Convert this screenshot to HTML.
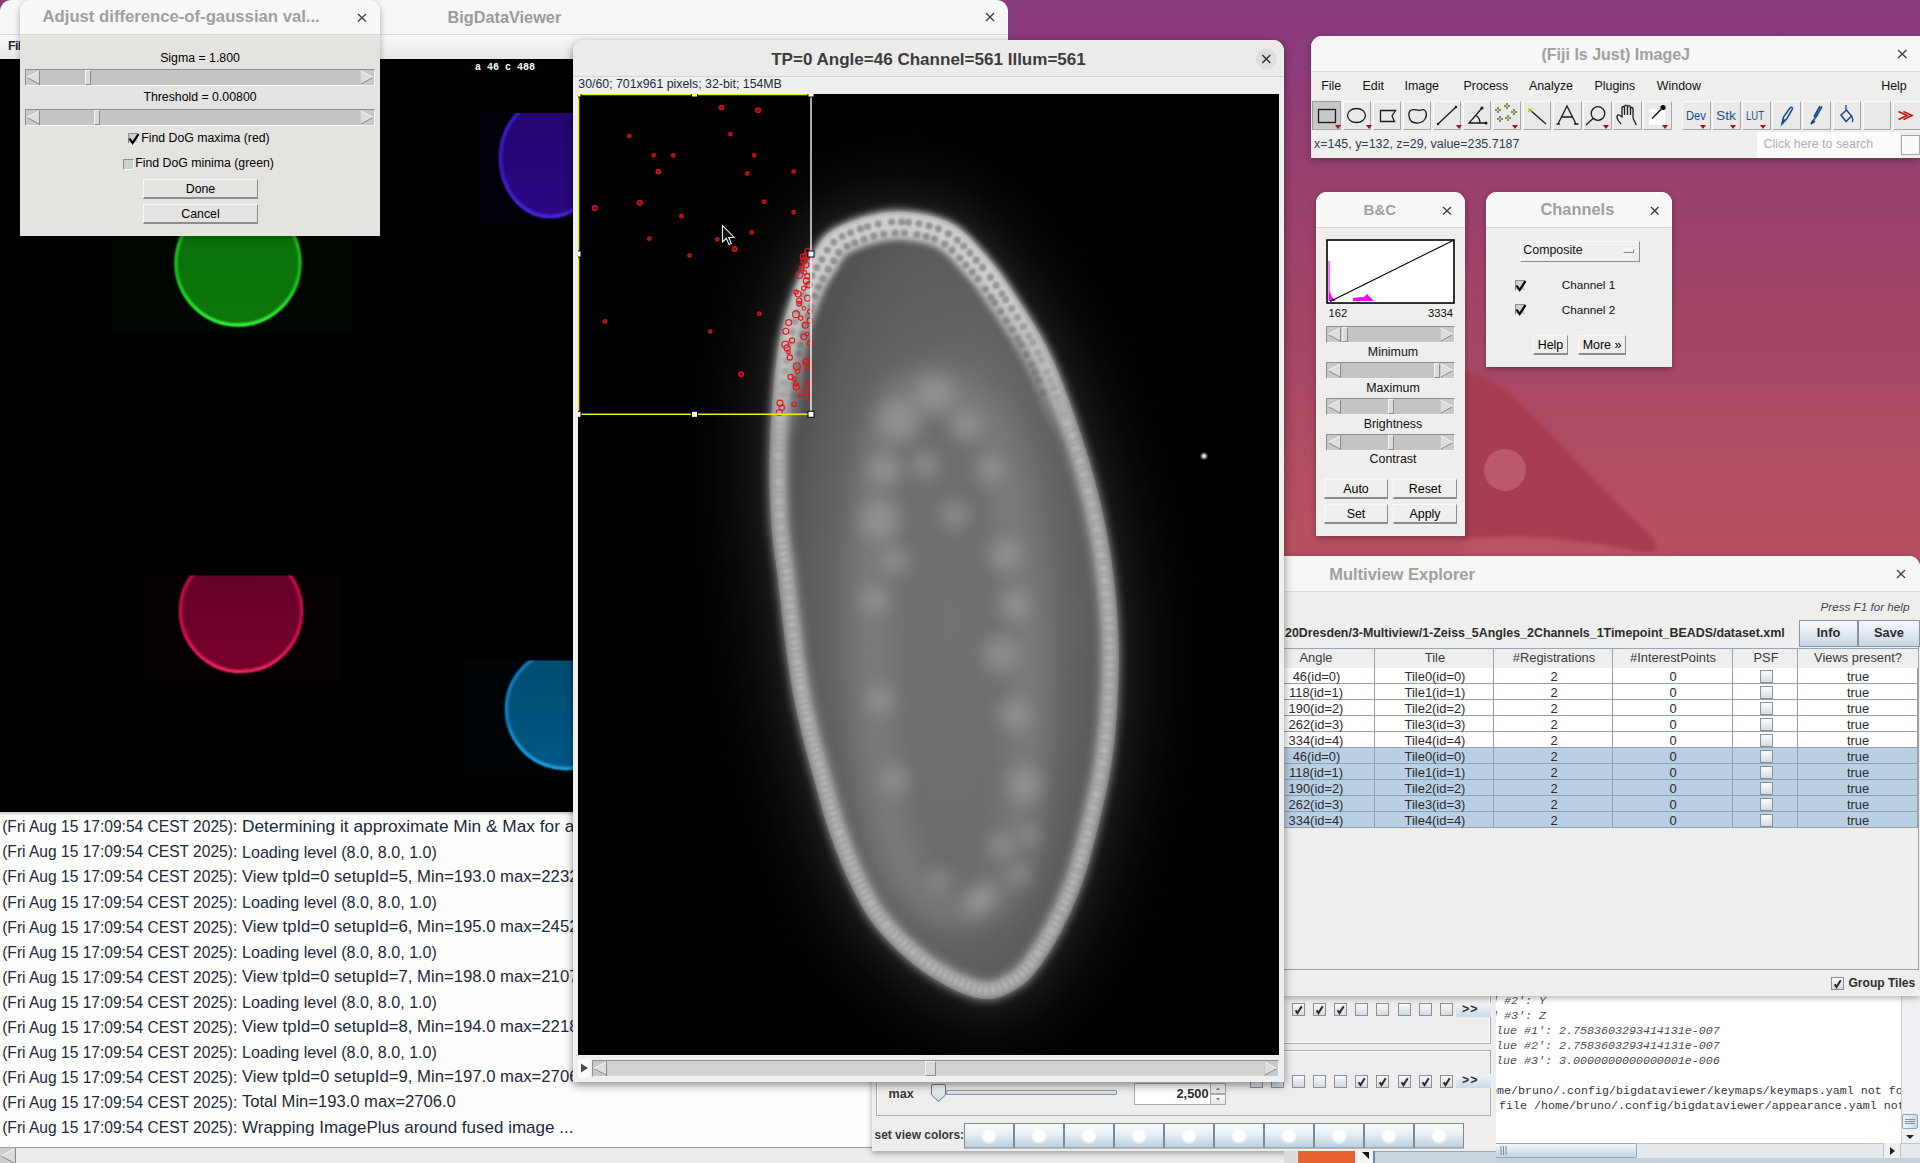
<!DOCTYPE html>
<html><head><meta charset="utf-8">
<style>
*{box-sizing:border-box;margin:0;padding:0}
html,body{width:1920px;height:1163px;overflow:hidden}
body{position:relative;font-family:"Liberation Sans",sans-serif;background:#86397f}
.abs{position:absolute}
.win{position:absolute;overflow:hidden}
.t{position:absolute;white-space:nowrap}
svg{display:block}
</style></head><body>
<svg class="abs" style="left:0;top:0" width="1920" height="1163">
<defs><linearGradient id="desk" x1="0" y1="0" x2="0" y2="1163" gradientUnits="userSpaceOnUse">
<stop offset="0" stop-color="#8a3a80"/><stop offset="0.035" stop-color="#8c3a7e"/><stop offset="0.15" stop-color="#98406f"/><stop offset="0.258" stop-color="#a24468"/><stop offset="0.46" stop-color="#b75060"/><stop offset="1" stop-color="#b85060"/></linearGradient>
<filter color-interpolation-filters="sRGB" id="blur2"><feGaussianBlur stdDeviation="2"/></filter></defs>
<rect width="1920" height="1163" fill="url(#desk)"/>
<path d="M1462 372 C1480 372 1502 385 1527 410 C1567 452 1612 500 1645 530 C1662 546 1658 556 1640 552 C1600 544 1540 532 1462 540 Z" fill="#a63d52" filter="url(#blur2)"/><path d="M1462 540 C1540 532 1600 544 1640 552 L1700 560 L1462 560Z" fill="#bc5564" opacity="0.6" filter="url(#blur2)"/>
<circle cx="1505" cy="470" r="21" fill="#bd5c6c" opacity="0.9"/>
</svg>
<div class="win" style="left:0;top:0;width:1008px;height:812px;border-radius:11px 11px 0 0;background:#000">
<div class="abs" style="left:0px;top:0px;width:1008px;height:35px;background:#f6f6f4;border-bottom:1px solid #dadad8"></div>
<div class="abs" style="left:0px;top:35px;width:1008px;height:24px;background:linear-gradient(#f9f8f6,#e8e7e5)"></div>
</div>
<div class="t" style="left:447.50px;top:9.10px;font-size:16.3px;line-height:16.3px;color:#9b9b9b;font-weight:bold;font-style:normal;font-family:'Liberation Sans',sans-serif;">BigDataViewer</div>
<svg class="abs" style="left:984px;top:11px" width="12" height="12"><path d="M2 2L10 10M10 2L2 10" stroke="#3c3c3c" stroke-width="1.3" fill="none"/></svg>
<div class="t" style="left:8.00px;top:40.00px;font-size:12.4px;line-height:12.4px;color:#1d2a48;font-weight:bold;font-style:normal;font-family:'Liberation Sans',sans-serif;letter-spacing:-0.6px">File</div>
<div class="t" style="left:475.00px;top:62.73px;font-size:10px;line-height:10px;color:#ffffff;font-weight:bold;font-style:normal;font-family:'Liberation Mono',monospace;letter-spacing:0px">a 46 c 488</div>
<svg class="abs" style="left:0;top:59px" width="573" height="753" viewBox="0 59 573 753"><defs><filter color-interpolation-filters="sRGB" id="bb1" x="-20%" y="-20%" width="140%" height="140%"><feGaussianBlur stdDeviation="0.8"/></filter><filter color-interpolation-filters="sRGB" id="bb6" x="-50%" y="-50%" width="200%" height="200%"><feGaussianBlur stdDeviation="8"/></filter></defs><clipPath id="cl238_263"><rect x="112" y="236" width="240" height="98"/></clipPath><linearGradient id="rgcl238_263" x1="0" y1="0" x2="0" y2="1"><stop offset="0" stop-color="#1cc01c"/><stop offset="0.6" stop-color="#1cc01c"/><stop offset="1" stop-color="#40ff40"/></linearGradient><linearGradient id="fgcl238_263" x1="0" y1="0" x2="0" y2="1"><stop offset="0" stop-color="#0a6e0a"/><stop offset="1" stop-color="#0a760a"/></linearGradient><g clip-path="url(#cl238_263)"><rect x="112" y="236" width="240" height="98" fill="#010601"/><ellipse cx="238" cy="263" rx="63.4" ry="63.4" fill="url(#fgcl238_263)"/><ellipse cx="238" cy="263" rx="61.9" ry="61.9" fill="none" stroke="url(#rgcl238_263)" stroke-width="3.2" filter="url(#bb1)"/></g><clipPath id="cl241_611"><rect x="145" y="575.6" width="195" height="107.39999999999998"/></clipPath><linearGradient id="rgcl241_611" x1="0" y1="0" x2="0" y2="1"><stop offset="0" stop-color="#c8104a"/><stop offset="0.6" stop-color="#c8104a"/><stop offset="1" stop-color="#ff2a66"/></linearGradient><linearGradient id="fgcl241_611" x1="0" y1="0" x2="0" y2="1"><stop offset="0" stop-color="#5e0024"/><stop offset="1" stop-color="#7a0030"/></linearGradient><g clip-path="url(#cl241_611)"><rect x="145" y="575.6" width="195" height="107.39999999999998" fill="#060002"/><ellipse cx="241" cy="611" rx="62" ry="62" fill="url(#fgcl241_611)"/><ellipse cx="241" cy="611" rx="60.5" ry="60.5" fill="none" stroke="url(#rgcl241_611)" stroke-width="3.2" filter="url(#bb1)"/></g><clipPath id="cl566_709"><rect x="465" y="660.6" width="108" height="117.39999999999998"/></clipPath><linearGradient id="rgcl566_709" x1="0" y1="0" x2="0" y2="1"><stop offset="0" stop-color="#0e80c0"/><stop offset="0.6" stop-color="#0e80c0"/><stop offset="1" stop-color="#22aaee"/></linearGradient><linearGradient id="fgcl566_709" x1="0" y1="0" x2="0" y2="1"><stop offset="0" stop-color="#004a70"/><stop offset="1" stop-color="#005a86"/></linearGradient><g clip-path="url(#cl566_709)"><rect x="465" y="660.6" width="108" height="117.39999999999998" fill="#000406"/><ellipse cx="566" cy="709" rx="61" ry="61" fill="url(#fgcl566_709)"/><ellipse cx="566" cy="709" rx="59.5" ry="59.5" fill="none" stroke="url(#rgcl566_709)" stroke-width="3.2" filter="url(#bb1)"/></g><clipPath id="cl550_158"><rect x="480" y="113" width="93" height="111"/></clipPath><linearGradient id="rgcl550_158" x1="0" y1="0" x2="0" y2="1"><stop offset="0" stop-color="#3a1ec8"/><stop offset="0.6" stop-color="#3a1ec8"/><stop offset="1" stop-color="#4a2ae8"/></linearGradient><linearGradient id="fgcl550_158" x1="0" y1="0" x2="0" y2="1"><stop offset="0" stop-color="#24066e"/><stop offset="1" stop-color="#2c0884"/></linearGradient><g clip-path="url(#cl550_158)"><rect x="480" y="113" width="93" height="111" fill="#020008"/><ellipse cx="550" cy="158" rx="51" ry="60" fill="url(#fgcl550_158)"/><ellipse cx="550" cy="158" rx="49.5" ry="58.5" fill="none" stroke="url(#rgcl550_158)" stroke-width="3.2" filter="url(#bb1)"/></g></svg>
<div class="win" style="left:0;top:812px;width:1292px;height:351px;background:#fdfdfb">
<div class="abs" style="left:0px;top:0px;width:1292px;height:4px;background:linear-gradient(#c8c8c6,#fdfdfb)"></div>
</div>
<div class="t" style="left:2.20px;top:819.42px;font-size:15.57px;line-height:15.57px;color:#1b2a3c;font-weight:normal;font-style:normal;font-family:'Liberation Sans',sans-serif;">(Fri Aug 15 17:09:54 CEST 2025):</div>
<div class="t" style="left:242.00px;top:817.96px;font-size:17.3px;line-height:17.3px;color:#1b2a3c;font-weight:normal;font-style:normal;font-family:'Liberation Sans',sans-serif;">Determining it approximate Min &amp; Max for all views at lowest resolution levels</div>
<div class="t" style="left:2.20px;top:844.45px;font-size:15.57px;line-height:15.57px;color:#1b2a3c;font-weight:normal;font-style:normal;font-family:'Liberation Sans',sans-serif;">(Fri Aug 15 17:09:54 CEST 2025):</div>
<div class="t" style="left:242.00px;top:844.01px;font-size:16.09px;line-height:16.09px;color:#1b2a3c;font-weight:normal;font-style:normal;font-family:'Liberation Sans',sans-serif;">Loading level (8.0, 8.0, 1.0)</div>
<div class="t" style="left:2.20px;top:869.48px;font-size:15.57px;line-height:15.57px;color:#1b2a3c;font-weight:normal;font-style:normal;font-family:'Liberation Sans',sans-serif;">(Fri Aug 15 17:09:54 CEST 2025):</div>
<div class="t" style="left:242.00px;top:868.52px;font-size:16.7px;line-height:16.7px;color:#1b2a3c;font-weight:normal;font-style:normal;font-family:'Liberation Sans',sans-serif;">View tpId=0 setupId=5, Min=193.0 max=2232.0</div>
<div class="t" style="left:2.20px;top:894.51px;font-size:15.57px;line-height:15.57px;color:#1b2a3c;font-weight:normal;font-style:normal;font-family:'Liberation Sans',sans-serif;">(Fri Aug 15 17:09:54 CEST 2025):</div>
<div class="t" style="left:242.00px;top:894.07px;font-size:16.09px;line-height:16.09px;color:#1b2a3c;font-weight:normal;font-style:normal;font-family:'Liberation Sans',sans-serif;">Loading level (8.0, 8.0, 1.0)</div>
<div class="t" style="left:2.20px;top:919.54px;font-size:15.57px;line-height:15.57px;color:#1b2a3c;font-weight:normal;font-style:normal;font-family:'Liberation Sans',sans-serif;">(Fri Aug 15 17:09:54 CEST 2025):</div>
<div class="t" style="left:242.00px;top:918.58px;font-size:16.7px;line-height:16.7px;color:#1b2a3c;font-weight:normal;font-style:normal;font-family:'Liberation Sans',sans-serif;">View tpId=0 setupId=6, Min=195.0 max=2452.0</div>
<div class="t" style="left:2.20px;top:944.57px;font-size:15.57px;line-height:15.57px;color:#1b2a3c;font-weight:normal;font-style:normal;font-family:'Liberation Sans',sans-serif;">(Fri Aug 15 17:09:54 CEST 2025):</div>
<div class="t" style="left:242.00px;top:944.13px;font-size:16.09px;line-height:16.09px;color:#1b2a3c;font-weight:normal;font-style:normal;font-family:'Liberation Sans',sans-serif;">Loading level (8.0, 8.0, 1.0)</div>
<div class="t" style="left:2.20px;top:969.60px;font-size:15.57px;line-height:15.57px;color:#1b2a3c;font-weight:normal;font-style:normal;font-family:'Liberation Sans',sans-serif;">(Fri Aug 15 17:09:54 CEST 2025):</div>
<div class="t" style="left:242.00px;top:968.64px;font-size:16.7px;line-height:16.7px;color:#1b2a3c;font-weight:normal;font-style:normal;font-family:'Liberation Sans',sans-serif;">View tpId=0 setupId=7, Min=198.0 max=2107.0</div>
<div class="t" style="left:2.20px;top:994.63px;font-size:15.57px;line-height:15.57px;color:#1b2a3c;font-weight:normal;font-style:normal;font-family:'Liberation Sans',sans-serif;">(Fri Aug 15 17:09:54 CEST 2025):</div>
<div class="t" style="left:242.00px;top:994.19px;font-size:16.09px;line-height:16.09px;color:#1b2a3c;font-weight:normal;font-style:normal;font-family:'Liberation Sans',sans-serif;">Loading level (8.0, 8.0, 1.0)</div>
<div class="t" style="left:2.20px;top:1019.66px;font-size:15.57px;line-height:15.57px;color:#1b2a3c;font-weight:normal;font-style:normal;font-family:'Liberation Sans',sans-serif;">(Fri Aug 15 17:09:54 CEST 2025):</div>
<div class="t" style="left:242.00px;top:1018.70px;font-size:16.7px;line-height:16.7px;color:#1b2a3c;font-weight:normal;font-style:normal;font-family:'Liberation Sans',sans-serif;">View tpId=0 setupId=8, Min=194.0 max=2218.0</div>
<div class="t" style="left:2.20px;top:1044.69px;font-size:15.57px;line-height:15.57px;color:#1b2a3c;font-weight:normal;font-style:normal;font-family:'Liberation Sans',sans-serif;">(Fri Aug 15 17:09:54 CEST 2025):</div>
<div class="t" style="left:242.00px;top:1044.25px;font-size:16.09px;line-height:16.09px;color:#1b2a3c;font-weight:normal;font-style:normal;font-family:'Liberation Sans',sans-serif;">Loading level (8.0, 8.0, 1.0)</div>
<div class="t" style="left:2.20px;top:1069.72px;font-size:15.57px;line-height:15.57px;color:#1b2a3c;font-weight:normal;font-style:normal;font-family:'Liberation Sans',sans-serif;">(Fri Aug 15 17:09:54 CEST 2025):</div>
<div class="t" style="left:242.00px;top:1068.76px;font-size:16.7px;line-height:16.7px;color:#1b2a3c;font-weight:normal;font-style:normal;font-family:'Liberation Sans',sans-serif;">View tpId=0 setupId=9, Min=197.0 max=2706.0</div>
<div class="t" style="left:2.20px;top:1094.75px;font-size:15.57px;line-height:15.57px;color:#1b2a3c;font-weight:normal;font-style:normal;font-family:'Liberation Sans',sans-serif;">(Fri Aug 15 17:09:54 CEST 2025):</div>
<div class="t" style="left:242.00px;top:1093.89px;font-size:16.59px;line-height:16.59px;color:#1b2a3c;font-weight:normal;font-style:normal;font-family:'Liberation Sans',sans-serif;">Total Min=193.0 max=2706.0</div>
<div class="t" style="left:2.20px;top:1119.78px;font-size:15.57px;line-height:15.57px;color:#1b2a3c;font-weight:normal;font-style:normal;font-family:'Liberation Sans',sans-serif;">(Fri Aug 15 17:09:54 CEST 2025):</div>
<div class="t" style="left:242.00px;top:1118.57px;font-size:17.0px;line-height:17.0px;color:#1b2a3c;font-weight:normal;font-style:normal;font-family:'Liberation Sans',sans-serif;">Wrapping ImagePlus around fused image ...</div>
<div class="abs" style="left:0px;top:1147px;width:1292px;height:16px;background:#ececec;border-top:1px solid #9c9c9c"></div>
<svg class="abs" style="left:0;top:1148px" width="16" height="15"><rect width="15" height="15" fill="#cdcdcd"/><path d="M14 1L1 8L14 15Z" fill="#dcdcdc"/><path d="M1 8L14 15" stroke="#8a8a8a"/><path d="M14 1L1 8" stroke="#f4f4f4"/><path d="M15.5 0V15" stroke="#8a8a8a"/></svg>
<div class="win" style="left:872px;top:900px;width:624px;height:251px;background:#eeedeb;box-shadow:0 2px 6px rgba(0,0,0,0.35)"></div>
<div class="abs" style="left:876px;top:920px;width:615px;height:124px;border:1px solid #a9a9a9;border-top:none;box-shadow:inset -1px -1px 0 #fff"></div>
<div class="abs" style="left:876px;top:1049.5px;width:615px;height:66px;border:1px solid #a9a9a9;box-shadow:inset 1px 1px 0 #fff"></div>
<svg class="abs" style="left:1250px;top:1003px" width="13" height="13"><defs><linearGradient id="sg1250_1003" x1="0" y1="0" x2="0" y2="1"><stop offset="0" stop-color="#fbfbfb"/><stop offset="1" stop-color="#cfdae4"/></linearGradient></defs><rect x="0.5" y="0.5" width="12" height="12" fill="url(#sg1250_1003)" stroke="#8a9096"/></svg>
<svg class="abs" style="left:1250px;top:1075px" width="13" height="13"><defs><linearGradient id="sg1250_1075" x1="0" y1="0" x2="0" y2="1"><stop offset="0" stop-color="#fbfbfb"/><stop offset="1" stop-color="#cfdae4"/></linearGradient></defs><rect x="0.5" y="0.5" width="12" height="12" fill="url(#sg1250_1075)" stroke="#8a9096"/></svg>
<svg class="abs" style="left:1271px;top:1003px" width="13" height="13"><defs><linearGradient id="sg1271_1003" x1="0" y1="0" x2="0" y2="1"><stop offset="0" stop-color="#fbfbfb"/><stop offset="1" stop-color="#cfdae4"/></linearGradient></defs><rect x="0.5" y="0.5" width="12" height="12" fill="url(#sg1271_1003)" stroke="#8a9096"/></svg>
<svg class="abs" style="left:1271px;top:1075px" width="13" height="13"><defs><linearGradient id="sg1271_1075" x1="0" y1="0" x2="0" y2="1"><stop offset="0" stop-color="#fbfbfb"/><stop offset="1" stop-color="#cfdae4"/></linearGradient></defs><rect x="0.5" y="0.5" width="12" height="12" fill="url(#sg1271_1075)" stroke="#8a9096"/></svg>
<svg class="abs" style="left:1292px;top:1003px" width="13" height="13"><defs><linearGradient id="sg1292_1003" x1="0" y1="0" x2="0" y2="1"><stop offset="0" stop-color="#fbfbfb"/><stop offset="1" stop-color="#cfdae4"/></linearGradient></defs><rect x="0.5" y="0.5" width="12" height="12" fill="url(#sg1292_1003)" stroke="#8a9096"/><path d="M3.6400000000000006 7.15L5.46 10.14L9.75 3.25" stroke="#2a2a2a" stroke-width="2" fill="none"/></svg>
<svg class="abs" style="left:1292px;top:1075px" width="13" height="13"><defs><linearGradient id="sg1292_1075" x1="0" y1="0" x2="0" y2="1"><stop offset="0" stop-color="#fbfbfb"/><stop offset="1" stop-color="#cfdae4"/></linearGradient></defs><rect x="0.5" y="0.5" width="12" height="12" fill="url(#sg1292_1075)" stroke="#8a9096"/></svg>
<svg class="abs" style="left:1313px;top:1003px" width="13" height="13"><defs><linearGradient id="sg1313_1003" x1="0" y1="0" x2="0" y2="1"><stop offset="0" stop-color="#fbfbfb"/><stop offset="1" stop-color="#cfdae4"/></linearGradient></defs><rect x="0.5" y="0.5" width="12" height="12" fill="url(#sg1313_1003)" stroke="#8a9096"/><path d="M3.6400000000000006 7.15L5.46 10.14L9.75 3.25" stroke="#2a2a2a" stroke-width="2" fill="none"/></svg>
<svg class="abs" style="left:1313px;top:1075px" width="13" height="13"><defs><linearGradient id="sg1313_1075" x1="0" y1="0" x2="0" y2="1"><stop offset="0" stop-color="#fbfbfb"/><stop offset="1" stop-color="#cfdae4"/></linearGradient></defs><rect x="0.5" y="0.5" width="12" height="12" fill="url(#sg1313_1075)" stroke="#8a9096"/></svg>
<svg class="abs" style="left:1334px;top:1003px" width="13" height="13"><defs><linearGradient id="sg1334_1003" x1="0" y1="0" x2="0" y2="1"><stop offset="0" stop-color="#fbfbfb"/><stop offset="1" stop-color="#cfdae4"/></linearGradient></defs><rect x="0.5" y="0.5" width="12" height="12" fill="url(#sg1334_1003)" stroke="#8a9096"/><path d="M3.6400000000000006 7.15L5.46 10.14L9.75 3.25" stroke="#2a2a2a" stroke-width="2" fill="none"/></svg>
<svg class="abs" style="left:1334px;top:1075px" width="13" height="13"><defs><linearGradient id="sg1334_1075" x1="0" y1="0" x2="0" y2="1"><stop offset="0" stop-color="#fbfbfb"/><stop offset="1" stop-color="#cfdae4"/></linearGradient></defs><rect x="0.5" y="0.5" width="12" height="12" fill="url(#sg1334_1075)" stroke="#8a9096"/></svg>
<svg class="abs" style="left:1355px;top:1003px" width="13" height="13"><defs><linearGradient id="sg1355_1003" x1="0" y1="0" x2="0" y2="1"><stop offset="0" stop-color="#fbfbfb"/><stop offset="1" stop-color="#cfdae4"/></linearGradient></defs><rect x="0.5" y="0.5" width="12" height="12" fill="url(#sg1355_1003)" stroke="#8a9096"/></svg>
<svg class="abs" style="left:1355px;top:1075px" width="13" height="13"><defs><linearGradient id="sg1355_1075" x1="0" y1="0" x2="0" y2="1"><stop offset="0" stop-color="#fbfbfb"/><stop offset="1" stop-color="#cfdae4"/></linearGradient></defs><rect x="0.5" y="0.5" width="12" height="12" fill="url(#sg1355_1075)" stroke="#8a9096"/><path d="M3.6400000000000006 7.15L5.46 10.14L9.75 3.25" stroke="#2a2a2a" stroke-width="2" fill="none"/></svg>
<svg class="abs" style="left:1376px;top:1003px" width="13" height="13"><defs><linearGradient id="sg1376_1003" x1="0" y1="0" x2="0" y2="1"><stop offset="0" stop-color="#fbfbfb"/><stop offset="1" stop-color="#cfdae4"/></linearGradient></defs><rect x="0.5" y="0.5" width="12" height="12" fill="url(#sg1376_1003)" stroke="#8a9096"/></svg>
<svg class="abs" style="left:1376px;top:1075px" width="13" height="13"><defs><linearGradient id="sg1376_1075" x1="0" y1="0" x2="0" y2="1"><stop offset="0" stop-color="#fbfbfb"/><stop offset="1" stop-color="#cfdae4"/></linearGradient></defs><rect x="0.5" y="0.5" width="12" height="12" fill="url(#sg1376_1075)" stroke="#8a9096"/><path d="M3.6400000000000006 7.15L5.46 10.14L9.75 3.25" stroke="#2a2a2a" stroke-width="2" fill="none"/></svg>
<svg class="abs" style="left:1398px;top:1003px" width="13" height="13"><defs><linearGradient id="sg1398_1003" x1="0" y1="0" x2="0" y2="1"><stop offset="0" stop-color="#fbfbfb"/><stop offset="1" stop-color="#cfdae4"/></linearGradient></defs><rect x="0.5" y="0.5" width="12" height="12" fill="url(#sg1398_1003)" stroke="#8a9096"/></svg>
<svg class="abs" style="left:1398px;top:1075px" width="13" height="13"><defs><linearGradient id="sg1398_1075" x1="0" y1="0" x2="0" y2="1"><stop offset="0" stop-color="#fbfbfb"/><stop offset="1" stop-color="#cfdae4"/></linearGradient></defs><rect x="0.5" y="0.5" width="12" height="12" fill="url(#sg1398_1075)" stroke="#8a9096"/><path d="M3.6400000000000006 7.15L5.46 10.14L9.75 3.25" stroke="#2a2a2a" stroke-width="2" fill="none"/></svg>
<svg class="abs" style="left:1419px;top:1003px" width="13" height="13"><defs><linearGradient id="sg1419_1003" x1="0" y1="0" x2="0" y2="1"><stop offset="0" stop-color="#fbfbfb"/><stop offset="1" stop-color="#cfdae4"/></linearGradient></defs><rect x="0.5" y="0.5" width="12" height="12" fill="url(#sg1419_1003)" stroke="#8a9096"/></svg>
<svg class="abs" style="left:1419px;top:1075px" width="13" height="13"><defs><linearGradient id="sg1419_1075" x1="0" y1="0" x2="0" y2="1"><stop offset="0" stop-color="#fbfbfb"/><stop offset="1" stop-color="#cfdae4"/></linearGradient></defs><rect x="0.5" y="0.5" width="12" height="12" fill="url(#sg1419_1075)" stroke="#8a9096"/><path d="M3.6400000000000006 7.15L5.46 10.14L9.75 3.25" stroke="#2a2a2a" stroke-width="2" fill="none"/></svg>
<svg class="abs" style="left:1440px;top:1003px" width="13" height="13"><defs><linearGradient id="sg1440_1003" x1="0" y1="0" x2="0" y2="1"><stop offset="0" stop-color="#fbfbfb"/><stop offset="1" stop-color="#cfdae4"/></linearGradient></defs><rect x="0.5" y="0.5" width="12" height="12" fill="url(#sg1440_1003)" stroke="#8a9096"/></svg>
<svg class="abs" style="left:1440px;top:1075px" width="13" height="13"><defs><linearGradient id="sg1440_1075" x1="0" y1="0" x2="0" y2="1"><stop offset="0" stop-color="#fbfbfb"/><stop offset="1" stop-color="#cfdae4"/></linearGradient></defs><rect x="0.5" y="0.5" width="12" height="12" fill="url(#sg1440_1075)" stroke="#8a9096"/><path d="M3.6400000000000006 7.15L5.46 10.14L9.75 3.25" stroke="#2a2a2a" stroke-width="2" fill="none"/></svg>
<div class="abs" style="left:1456px;top:1003px;width:35px;height:14px;background:linear-gradient(#f2f4f6,#c9d9e6)"></div>
<div class="t" style="left:1462.00px;top:1003.42px;font-size:12.5px;line-height:12.5px;color:#2a2a2a;font-weight:bold;font-style:normal;font-family:'Liberation Sans',sans-serif;letter-spacing:1px">&gt;&gt;</div>
<div class="abs" style="left:1456px;top:1074px;width:35px;height:14px;background:linear-gradient(#f2f4f6,#c9d9e6)"></div>
<div class="t" style="left:1462.00px;top:1074.42px;font-size:12.5px;line-height:12.5px;color:#2a2a2a;font-weight:bold;font-style:normal;font-family:'Liberation Sans',sans-serif;letter-spacing:1px">&gt;&gt;</div>
<div class="t" style="left:888.50px;top:1087.93px;font-size:12.6px;line-height:12.6px;color:#383838;font-weight:bold;font-style:normal;font-family:'Liberation Sans',sans-serif;">max</div>
<div class="abs" style="left:946px;top:1089.5px;width:171px;height:5.5px;background:linear-gradient(#e8ecf0,#d0d8e0);border:1px solid #8a96a2;border-radius:1px"></div>
<svg class="abs" style="left:930px;top:1083px" width="18" height="20"><defs><linearGradient id="thg" x1="0" y1="0" x2="0" y2="1"><stop offset="0" stop-color="#fdfdfd"/><stop offset="1" stop-color="#c4d2de"/></linearGradient></defs><path d="M1.5 3Q1.5 1.5 3 1.5H14Q15.5 1.5 15.5 3V12L8.5 18.5L1.5 12Z" fill="url(#thg)" stroke="#6d7986"/></svg>
<div class="abs" style="left:1134px;top:1083px;width:77px;height:22px;background:#fff;border:1px solid #a8a8a8;border-right:none"></div>
<div class="t" style="left:1128.50px;width:80px;text-align:right;top:1087.66px;font-size:12.8px;line-height:12.8px;color:#2e2e2e;font-weight:bold;font-style:normal;font-family:'Liberation Sans',sans-serif;">2,500</div>
<div class="abs" style="left:1210px;top:1083px;width:16px;height:11px;background:linear-gradient(#fafafa,#e2e6ea);border:1px solid #a8a8a8"></div>
<div class="abs" style="left:1210px;top:1094px;width:16px;height:11px;background:linear-gradient(#fafafa,#e2e6ea);border:1px solid #a8a8a8"></div>
<svg class="abs" style="left:1210px;top:1083px" width="16" height="22"><path d="M6 7L8 4.5L10 7Z" fill="#777"/><path d="M6 15L8 17.5L10 15Z" fill="#777"/></svg>
<div class="t" style="left:874.50px;top:1130.48px;font-size:11.95px;line-height:11.95px;color:#383838;font-weight:bold;font-style:normal;font-family:'Liberation Sans',sans-serif;">set view colors:</div>
<svg class="abs" style="left:964px;top:1123px" width="50" height="26"><defs><linearGradient id="cb0" x1="0" y1="0" x2="0" y2="1"><stop offset="0" stop-color="#fafcfd"/><stop offset="0.45" stop-color="#e6eef4"/><stop offset="1" stop-color="#b8ccdc"/></linearGradient><filter color-interpolation-filters="sRGB" id="cbf0"><feGaussianBlur stdDeviation="1.2"/></filter></defs><rect x="0.5" y="0.5" width="49" height="24.5" fill="url(#cb0)" stroke="#7d8a96"/><circle cx="25" cy="13" r="7" fill="#ffffff" filter="url(#cbf0)"/></svg>
<svg class="abs" style="left:1014px;top:1123px" width="50" height="26"><defs><linearGradient id="cb1" x1="0" y1="0" x2="0" y2="1"><stop offset="0" stop-color="#fafcfd"/><stop offset="0.45" stop-color="#e6eef4"/><stop offset="1" stop-color="#b8ccdc"/></linearGradient><filter color-interpolation-filters="sRGB" id="cbf1"><feGaussianBlur stdDeviation="1.2"/></filter></defs><rect x="0.5" y="0.5" width="49" height="24.5" fill="url(#cb1)" stroke="#7d8a96"/><circle cx="25" cy="13" r="7" fill="#ffffff" filter="url(#cbf1)"/></svg>
<svg class="abs" style="left:1064px;top:1123px" width="50" height="26"><defs><linearGradient id="cb2" x1="0" y1="0" x2="0" y2="1"><stop offset="0" stop-color="#fafcfd"/><stop offset="0.45" stop-color="#e6eef4"/><stop offset="1" stop-color="#b8ccdc"/></linearGradient><filter color-interpolation-filters="sRGB" id="cbf2"><feGaussianBlur stdDeviation="1.2"/></filter></defs><rect x="0.5" y="0.5" width="49" height="24.5" fill="url(#cb2)" stroke="#7d8a96"/><circle cx="25" cy="13" r="7" fill="#ffffff" filter="url(#cbf2)"/></svg>
<svg class="abs" style="left:1114px;top:1123px" width="50" height="26"><defs><linearGradient id="cb3" x1="0" y1="0" x2="0" y2="1"><stop offset="0" stop-color="#fafcfd"/><stop offset="0.45" stop-color="#e6eef4"/><stop offset="1" stop-color="#b8ccdc"/></linearGradient><filter color-interpolation-filters="sRGB" id="cbf3"><feGaussianBlur stdDeviation="1.2"/></filter></defs><rect x="0.5" y="0.5" width="49" height="24.5" fill="url(#cb3)" stroke="#7d8a96"/><circle cx="25" cy="13" r="7" fill="#ffffff" filter="url(#cbf3)"/></svg>
<svg class="abs" style="left:1164px;top:1123px" width="50" height="26"><defs><linearGradient id="cb4" x1="0" y1="0" x2="0" y2="1"><stop offset="0" stop-color="#fafcfd"/><stop offset="0.45" stop-color="#e6eef4"/><stop offset="1" stop-color="#b8ccdc"/></linearGradient><filter color-interpolation-filters="sRGB" id="cbf4"><feGaussianBlur stdDeviation="1.2"/></filter></defs><rect x="0.5" y="0.5" width="49" height="24.5" fill="url(#cb4)" stroke="#7d8a96"/><circle cx="25" cy="13" r="7" fill="#ffffff" filter="url(#cbf4)"/></svg>
<svg class="abs" style="left:1214px;top:1123px" width="50" height="26"><defs><linearGradient id="cb5" x1="0" y1="0" x2="0" y2="1"><stop offset="0" stop-color="#fafcfd"/><stop offset="0.45" stop-color="#e6eef4"/><stop offset="1" stop-color="#b8ccdc"/></linearGradient><filter color-interpolation-filters="sRGB" id="cbf5"><feGaussianBlur stdDeviation="1.2"/></filter></defs><rect x="0.5" y="0.5" width="49" height="24.5" fill="url(#cb5)" stroke="#7d8a96"/><circle cx="25" cy="13" r="7" fill="#ffffff" filter="url(#cbf5)"/></svg>
<svg class="abs" style="left:1264px;top:1123px" width="50" height="26"><defs><linearGradient id="cb6" x1="0" y1="0" x2="0" y2="1"><stop offset="0" stop-color="#fafcfd"/><stop offset="0.45" stop-color="#e6eef4"/><stop offset="1" stop-color="#b8ccdc"/></linearGradient><filter color-interpolation-filters="sRGB" id="cbf6"><feGaussianBlur stdDeviation="1.2"/></filter></defs><rect x="0.5" y="0.5" width="49" height="24.5" fill="url(#cb6)" stroke="#7d8a96"/><circle cx="25" cy="13" r="7" fill="#ffffff" filter="url(#cbf6)"/></svg>
<svg class="abs" style="left:1314px;top:1123px" width="50" height="26"><defs><linearGradient id="cb7" x1="0" y1="0" x2="0" y2="1"><stop offset="0" stop-color="#fafcfd"/><stop offset="0.45" stop-color="#e6eef4"/><stop offset="1" stop-color="#b8ccdc"/></linearGradient><filter color-interpolation-filters="sRGB" id="cbf7"><feGaussianBlur stdDeviation="1.2"/></filter></defs><rect x="0.5" y="0.5" width="49" height="24.5" fill="url(#cb7)" stroke="#7d8a96"/><circle cx="25" cy="13" r="7" fill="#ffffff" filter="url(#cbf7)"/></svg>
<svg class="abs" style="left:1364px;top:1123px" width="50" height="26"><defs><linearGradient id="cb8" x1="0" y1="0" x2="0" y2="1"><stop offset="0" stop-color="#fafcfd"/><stop offset="0.45" stop-color="#e6eef4"/><stop offset="1" stop-color="#b8ccdc"/></linearGradient><filter color-interpolation-filters="sRGB" id="cbf8"><feGaussianBlur stdDeviation="1.2"/></filter></defs><rect x="0.5" y="0.5" width="49" height="24.5" fill="url(#cb8)" stroke="#7d8a96"/><circle cx="25" cy="13" r="7" fill="#ffffff" filter="url(#cbf8)"/></svg>
<svg class="abs" style="left:1414px;top:1123px" width="50" height="26"><defs><linearGradient id="cb9" x1="0" y1="0" x2="0" y2="1"><stop offset="0" stop-color="#fafcfd"/><stop offset="0.45" stop-color="#e6eef4"/><stop offset="1" stop-color="#b8ccdc"/></linearGradient><filter color-interpolation-filters="sRGB" id="cbf9"><feGaussianBlur stdDeviation="1.2"/></filter></defs><rect x="0.5" y="0.5" width="49" height="24.5" fill="url(#cb9)" stroke="#7d8a96"/><circle cx="25" cy="13" r="7" fill="#ffffff" filter="url(#cbf9)"/></svg>
<div class="abs" style="left:1298px;top:1151px;width:57px;height:12px;background:#e6622e"></div>
<div class="abs" style="left:1284px;top:1151px;width:14px;height:12px;background:#dcdcdc"></div>
<div class="abs" style="left:1355px;top:1151px;width:141px;height:12px;background:#c9d5e1;border-top:1px solid #9aa8b6"></div>
<div class="abs" style="left:1355px;top:1151px;width:18px;height:12px;background:#f4f4f4"></div>
<svg class="abs" style="left:1362px;top:1152px" width="8" height="8"><path d="M0 0H7L7 7Z" fill="#111"/></svg>
<div class="abs" style="left:1373px;top:1151px;width:2px;height:12px;background:#6a8ab8"></div>
<div class="win" style="left:1496px;top:996px;width:424px;height:167px;background:#fff">
</div>
<div class="win" style="left:1496px;top:996px;width:405px;height:147px">
<div class="t" style="left:-6.00px;top:0.42px;font-size:11.67px;line-height:11.67px;color:#4c4c56;font-weight:normal;font-style:italic;font-family:'Liberation Mono',monospace;">d #2&#39;: Y</div>
<div class="t" style="left:-6.00px;top:15.42px;font-size:11.67px;line-height:11.67px;color:#4c4c56;font-weight:normal;font-style:italic;font-family:'Liberation Mono',monospace;">d #3&#39;: Z</div>
<div class="t" style="left:-14.00px;top:30.42px;font-size:11.67px;line-height:11.67px;color:#4c4c56;font-weight:normal;font-style:italic;font-family:'Liberation Mono',monospace;">Value #1&#39;: 2.7583603293414131e-007</div>
<div class="t" style="left:-14.00px;top:45.42px;font-size:11.67px;line-height:11.67px;color:#4c4c56;font-weight:normal;font-style:italic;font-family:'Liberation Mono',monospace;">Value #2&#39;: 2.7583603293414131e-007</div>
<div class="t" style="left:-14.00px;top:60.42px;font-size:11.67px;line-height:11.67px;color:#4c4c56;font-weight:normal;font-style:italic;font-family:'Liberation Mono',monospace;">Value #3&#39;: 3.0000000000000001e-006</div>
<div class="t" style="left:-13.00px;top:90.42px;font-size:11.67px;line-height:11.67px;color:#34343e;font-weight:normal;font-style:normal;font-family:'Liberation Mono',monospace;">home/bruno/.config/bigdataviewer/keymaps/keymaps.yaml not found</div>
<div class="t" style="left:-11.00px;top:105.42px;font-size:11.67px;line-height:11.67px;color:#34343e;font-weight:normal;font-style:normal;font-family:'Liberation Mono',monospace;">g file /home/bruno/.config/bigdataviewer/appearance.yaml not found</div>
</div>
<div class="abs" style="left:1901px;top:996px;width:19px;height:147px;background:#eef0f3;border-left:1px solid #c8ced6"></div>
<div class="abs" style="left:1902px;top:1114px;width:16px;height:15px;background:linear-gradient(90deg,#f4f8fb,#c8d8e8);border:1px solid #8ea6c0;border-radius:2px"></div>
<svg class="abs" style="left:1905px;top:1117px" width="10" height="9"><path d="M0 2.5H10M0 4.5H10M0 6.5H10" stroke="#6a7a8a" stroke-width="0.8"/></svg>
<svg class="abs" style="left:1903px;top:1131px" width="14" height="12"><path d="M3 4H11L7 8Z" fill="#222"/></svg>
<div class="abs" style="left:1496px;top:1143px;width:424px;height:15px;background:#e4e9ee;border-top:1px solid #b8c4d0"></div>
<div class="abs" style="left:1496px;top:1143px;width:141px;height:15px;background:linear-gradient(#f2f6fa,#c2d4e4);border:1px solid #8ea6c0;border-left:none;border-radius:0 2px 2px 0"></div>
<svg class="abs" style="left:1500px;top:1146px" width="8" height="9"><path d="M1 0V9M3.5 0V9M6 0V9" stroke="#6a7a8a" stroke-width="0.9"/></svg>
<div class="abs" style="left:1883px;top:1143px;width:18px;height:15px;background:#eef0f3;border-left:1px solid #b8c4d0;border-right:1px solid #b8c4d0"></div>
<svg class="abs" style="left:1886px;top:1145px" width="12" height="12"><path d="M4 2V10L9 6Z" fill="#222"/></svg>
<div class="abs" style="left:1496px;top:1158px;width:424px;height:5px;background:#c4d0dc"></div>
<div class="win" style="left:1284px;top:556px;width:636px;height:440px;background:#eeeeec;border-radius:0 11px 0 0;box-shadow:0 2px 6px rgba(0,0,0,0.3)">
<div class="abs" style="left:0px;top:0px;width:636px;height:36px;background:#f7f7f5;border-bottom:1px solid #d9d9d7"></div>
</div>
<div class="t" style="left:1329.20px;top:566.23px;font-size:16.5px;line-height:16.5px;color:#a0a0a0;font-weight:bold;font-style:normal;font-family:'Liberation Sans',sans-serif;">Multiview Explorer</div>
<svg class="abs" style="left:1895px;top:568px" width="12" height="12"><path d="M2 2L10 10M10 2L2 10" stroke="#3c3c3c" stroke-width="1.3" fill="none"/></svg>
<div class="t" style="left:1820.50px;top:600.91px;font-size:11.68px;line-height:11.68px;color:#3b4458;font-weight:normal;font-style:italic;font-family:'Liberation Sans',sans-serif;">Press F1 for help</div>
<div class="t" style="left:1285.00px;top:627.09px;font-size:12.42px;line-height:12.42px;color:#2c2c2c;font-weight:bold;font-style:normal;font-family:'Liberation Sans',sans-serif;">20Dresden/3-Multiview/1-Zeiss_5Angles_2Channels_1Timepoint_BEADS/dataset.xml</div>
<div class="abs" style="left:1799px;top:620px;width:59px;height:27px;background:linear-gradient(#f7f9fb 0%,#e4ebf2 45%,#c6d4e2 100%);border:1px solid #8494a6"></div>
<div class="t" style="left:1799.00px;width:59px;text-align:center;top:626.76px;font-size:12.8px;line-height:12.8px;color:#2c2c2c;font-weight:bold;font-style:normal;font-family:'Liberation Sans',sans-serif;">Info</div>
<div class="abs" style="left:1858px;top:620px;width:62px;height:27px;background:linear-gradient(#f7f9fb 0%,#e4ebf2 45%,#c6d4e2 100%);border:1px solid #8494a6"></div>
<div class="t" style="left:1858.00px;width:62px;text-align:center;top:626.76px;font-size:12.8px;line-height:12.8px;color:#2c2c2c;font-weight:bold;font-style:normal;font-family:'Liberation Sans',sans-serif;">Save</div>
<div class="abs" style="left:1284px;top:647px;width:635px;height:323px;border:1px solid #9aa0a6;border-left:none;border-top:none"></div>
<div class="abs" style="left:1284px;top:647.5px;width:634px;height:21px;background:#eeeeee;border-top:1px solid #9aa6b2;border-bottom:1px solid #8ea0b2"></div>
<div class="abs" style="left:1374px;top:648px;width:1px;height:20px;background:#9aa6b2"></div>
<div class="abs" style="left:1493px;top:648px;width:1px;height:20px;background:#9aa6b2"></div>
<div class="abs" style="left:1612px;top:648px;width:1px;height:20px;background:#9aa6b2"></div>
<div class="abs" style="left:1732px;top:648px;width:1px;height:20px;background:#9aa6b2"></div>
<div class="abs" style="left:1797px;top:648px;width:1px;height:20px;background:#9aa6b2"></div>
<div class="abs" style="left:1918px;top:648px;width:1px;height:20px;background:#9aa6b2"></div>
<div class="t" style="left:1236.00px;width:160px;text-align:center;top:651.58px;font-size:12.9px;line-height:12.9px;color:#3a3a3a;font-weight:normal;font-style:normal;font-family:'Liberation Sans',sans-serif;">Angle</div>
<div class="t" style="left:1355.00px;width:160px;text-align:center;top:651.58px;font-size:12.9px;line-height:12.9px;color:#3a3a3a;font-weight:normal;font-style:normal;font-family:'Liberation Sans',sans-serif;">Tile</div>
<div class="t" style="left:1474.00px;width:160px;text-align:center;top:651.58px;font-size:12.9px;line-height:12.9px;color:#3a3a3a;font-weight:normal;font-style:normal;font-family:'Liberation Sans',sans-serif;">#Registrations</div>
<div class="t" style="left:1593.00px;width:160px;text-align:center;top:651.58px;font-size:12.9px;line-height:12.9px;color:#3a3a3a;font-weight:normal;font-style:normal;font-family:'Liberation Sans',sans-serif;">#InterestPoints</div>
<div class="t" style="left:1686.00px;width:160px;text-align:center;top:651.58px;font-size:12.9px;line-height:12.9px;color:#3a3a3a;font-weight:normal;font-style:normal;font-family:'Liberation Sans',sans-serif;">PSF</div>
<div class="t" style="left:1778.00px;width:160px;text-align:center;top:651.58px;font-size:12.9px;line-height:12.9px;color:#3a3a3a;font-weight:normal;font-style:normal;font-family:'Liberation Sans',sans-serif;">Views present?</div>
<div class="abs" style="left:1284px;top:668px;width:634px;height:16px;background:#ffffff;border-bottom:1px solid #8ea0b4"></div>
<div class="abs" style="left:1374px;top:668px;width:1px;height:16px;background:#8ea0b4"></div>
<div class="abs" style="left:1493px;top:668px;width:1px;height:16px;background:#8ea0b4"></div>
<div class="abs" style="left:1612px;top:668px;width:1px;height:16px;background:#8ea0b4"></div>
<div class="abs" style="left:1732px;top:668px;width:1px;height:16px;background:#8ea0b4"></div>
<div class="abs" style="left:1797px;top:668px;width:1px;height:16px;background:#8ea0b4"></div>
<div class="abs" style="left:1917px;top:668px;width:1px;height:16px;background:#8ea0b4"></div>
<div class="t" style="left:1256.50px;width:120px;text-align:center;top:670.68px;font-size:12.9px;line-height:12.9px;color:#2a2a2a;font-weight:normal;font-style:normal;font-family:'Liberation Sans',sans-serif;">46(id=0)</div>
<div class="t" style="left:1375.00px;width:120px;text-align:center;top:670.68px;font-size:12.9px;line-height:12.9px;color:#2a2a2a;font-weight:normal;font-style:normal;font-family:'Liberation Sans',sans-serif;">Tile0(id=0)</div>
<div class="t" style="left:1494.00px;width:120px;text-align:center;top:670.68px;font-size:12.9px;line-height:12.9px;color:#2a2a2a;font-weight:normal;font-style:normal;font-family:'Liberation Sans',sans-serif;">2</div>
<div class="t" style="left:1613.00px;width:120px;text-align:center;top:670.68px;font-size:12.9px;line-height:12.9px;color:#2a2a2a;font-weight:normal;font-style:normal;font-family:'Liberation Sans',sans-serif;">0</div>
<svg class="abs" style="left:1760px;top:670px" width="13" height="13"><defs><linearGradient id="sg1760_670" x1="0" y1="0" x2="0" y2="1"><stop offset="0" stop-color="#fbfbfb"/><stop offset="1" stop-color="#cfdae4"/></linearGradient></defs><rect x="0.5" y="0.5" width="12" height="12" fill="url(#sg1760_670)" stroke="#8a9096"/></svg>
<div class="t" style="left:1798.00px;width:120px;text-align:center;top:670.68px;font-size:12.9px;line-height:12.9px;color:#2a2a2a;font-weight:normal;font-style:normal;font-family:'Liberation Sans',sans-serif;">true</div>
<div class="abs" style="left:1284px;top:684px;width:634px;height:16px;background:#ffffff;border-bottom:1px solid #8ea0b4"></div>
<div class="abs" style="left:1374px;top:684px;width:1px;height:16px;background:#8ea0b4"></div>
<div class="abs" style="left:1493px;top:684px;width:1px;height:16px;background:#8ea0b4"></div>
<div class="abs" style="left:1612px;top:684px;width:1px;height:16px;background:#8ea0b4"></div>
<div class="abs" style="left:1732px;top:684px;width:1px;height:16px;background:#8ea0b4"></div>
<div class="abs" style="left:1797px;top:684px;width:1px;height:16px;background:#8ea0b4"></div>
<div class="abs" style="left:1917px;top:684px;width:1px;height:16px;background:#8ea0b4"></div>
<div class="t" style="left:1256.00px;width:120px;text-align:center;top:686.68px;font-size:12.9px;line-height:12.9px;color:#2a2a2a;font-weight:normal;font-style:normal;font-family:'Liberation Sans',sans-serif;">118(id=1)</div>
<div class="t" style="left:1375.00px;width:120px;text-align:center;top:686.68px;font-size:12.9px;line-height:12.9px;color:#2a2a2a;font-weight:normal;font-style:normal;font-family:'Liberation Sans',sans-serif;">Tile1(id=1)</div>
<div class="t" style="left:1494.00px;width:120px;text-align:center;top:686.68px;font-size:12.9px;line-height:12.9px;color:#2a2a2a;font-weight:normal;font-style:normal;font-family:'Liberation Sans',sans-serif;">2</div>
<div class="t" style="left:1613.00px;width:120px;text-align:center;top:686.68px;font-size:12.9px;line-height:12.9px;color:#2a2a2a;font-weight:normal;font-style:normal;font-family:'Liberation Sans',sans-serif;">0</div>
<svg class="abs" style="left:1760px;top:686px" width="13" height="13"><defs><linearGradient id="sg1760_686" x1="0" y1="0" x2="0" y2="1"><stop offset="0" stop-color="#fbfbfb"/><stop offset="1" stop-color="#cfdae4"/></linearGradient></defs><rect x="0.5" y="0.5" width="12" height="12" fill="url(#sg1760_686)" stroke="#8a9096"/></svg>
<div class="t" style="left:1798.00px;width:120px;text-align:center;top:686.68px;font-size:12.9px;line-height:12.9px;color:#2a2a2a;font-weight:normal;font-style:normal;font-family:'Liberation Sans',sans-serif;">true</div>
<div class="abs" style="left:1284px;top:700px;width:634px;height:16px;background:#ffffff;border-bottom:1px solid #8ea0b4"></div>
<div class="abs" style="left:1374px;top:700px;width:1px;height:16px;background:#8ea0b4"></div>
<div class="abs" style="left:1493px;top:700px;width:1px;height:16px;background:#8ea0b4"></div>
<div class="abs" style="left:1612px;top:700px;width:1px;height:16px;background:#8ea0b4"></div>
<div class="abs" style="left:1732px;top:700px;width:1px;height:16px;background:#8ea0b4"></div>
<div class="abs" style="left:1797px;top:700px;width:1px;height:16px;background:#8ea0b4"></div>
<div class="abs" style="left:1917px;top:700px;width:1px;height:16px;background:#8ea0b4"></div>
<div class="t" style="left:1256.00px;width:120px;text-align:center;top:702.68px;font-size:12.9px;line-height:12.9px;color:#2a2a2a;font-weight:normal;font-style:normal;font-family:'Liberation Sans',sans-serif;">190(id=2)</div>
<div class="t" style="left:1375.00px;width:120px;text-align:center;top:702.68px;font-size:12.9px;line-height:12.9px;color:#2a2a2a;font-weight:normal;font-style:normal;font-family:'Liberation Sans',sans-serif;">Tile2(id=2)</div>
<div class="t" style="left:1494.00px;width:120px;text-align:center;top:702.68px;font-size:12.9px;line-height:12.9px;color:#2a2a2a;font-weight:normal;font-style:normal;font-family:'Liberation Sans',sans-serif;">2</div>
<div class="t" style="left:1613.00px;width:120px;text-align:center;top:702.68px;font-size:12.9px;line-height:12.9px;color:#2a2a2a;font-weight:normal;font-style:normal;font-family:'Liberation Sans',sans-serif;">0</div>
<svg class="abs" style="left:1760px;top:702px" width="13" height="13"><defs><linearGradient id="sg1760_702" x1="0" y1="0" x2="0" y2="1"><stop offset="0" stop-color="#fbfbfb"/><stop offset="1" stop-color="#cfdae4"/></linearGradient></defs><rect x="0.5" y="0.5" width="12" height="12" fill="url(#sg1760_702)" stroke="#8a9096"/></svg>
<div class="t" style="left:1798.00px;width:120px;text-align:center;top:702.68px;font-size:12.9px;line-height:12.9px;color:#2a2a2a;font-weight:normal;font-style:normal;font-family:'Liberation Sans',sans-serif;">true</div>
<div class="abs" style="left:1284px;top:716px;width:634px;height:16px;background:#ffffff;border-bottom:1px solid #8ea0b4"></div>
<div class="abs" style="left:1374px;top:716px;width:1px;height:16px;background:#8ea0b4"></div>
<div class="abs" style="left:1493px;top:716px;width:1px;height:16px;background:#8ea0b4"></div>
<div class="abs" style="left:1612px;top:716px;width:1px;height:16px;background:#8ea0b4"></div>
<div class="abs" style="left:1732px;top:716px;width:1px;height:16px;background:#8ea0b4"></div>
<div class="abs" style="left:1797px;top:716px;width:1px;height:16px;background:#8ea0b4"></div>
<div class="abs" style="left:1917px;top:716px;width:1px;height:16px;background:#8ea0b4"></div>
<div class="t" style="left:1256.00px;width:120px;text-align:center;top:718.68px;font-size:12.9px;line-height:12.9px;color:#2a2a2a;font-weight:normal;font-style:normal;font-family:'Liberation Sans',sans-serif;">262(id=3)</div>
<div class="t" style="left:1375.00px;width:120px;text-align:center;top:718.68px;font-size:12.9px;line-height:12.9px;color:#2a2a2a;font-weight:normal;font-style:normal;font-family:'Liberation Sans',sans-serif;">Tile3(id=3)</div>
<div class="t" style="left:1494.00px;width:120px;text-align:center;top:718.68px;font-size:12.9px;line-height:12.9px;color:#2a2a2a;font-weight:normal;font-style:normal;font-family:'Liberation Sans',sans-serif;">2</div>
<div class="t" style="left:1613.00px;width:120px;text-align:center;top:718.68px;font-size:12.9px;line-height:12.9px;color:#2a2a2a;font-weight:normal;font-style:normal;font-family:'Liberation Sans',sans-serif;">0</div>
<svg class="abs" style="left:1760px;top:718px" width="13" height="13"><defs><linearGradient id="sg1760_718" x1="0" y1="0" x2="0" y2="1"><stop offset="0" stop-color="#fbfbfb"/><stop offset="1" stop-color="#cfdae4"/></linearGradient></defs><rect x="0.5" y="0.5" width="12" height="12" fill="url(#sg1760_718)" stroke="#8a9096"/></svg>
<div class="t" style="left:1798.00px;width:120px;text-align:center;top:718.68px;font-size:12.9px;line-height:12.9px;color:#2a2a2a;font-weight:normal;font-style:normal;font-family:'Liberation Sans',sans-serif;">true</div>
<div class="abs" style="left:1284px;top:732px;width:634px;height:16px;background:#ffffff;border-bottom:1px solid #8ea0b4"></div>
<div class="abs" style="left:1374px;top:732px;width:1px;height:16px;background:#8ea0b4"></div>
<div class="abs" style="left:1493px;top:732px;width:1px;height:16px;background:#8ea0b4"></div>
<div class="abs" style="left:1612px;top:732px;width:1px;height:16px;background:#8ea0b4"></div>
<div class="abs" style="left:1732px;top:732px;width:1px;height:16px;background:#8ea0b4"></div>
<div class="abs" style="left:1797px;top:732px;width:1px;height:16px;background:#8ea0b4"></div>
<div class="abs" style="left:1917px;top:732px;width:1px;height:16px;background:#8ea0b4"></div>
<div class="t" style="left:1256.00px;width:120px;text-align:center;top:734.68px;font-size:12.9px;line-height:12.9px;color:#2a2a2a;font-weight:normal;font-style:normal;font-family:'Liberation Sans',sans-serif;">334(id=4)</div>
<div class="t" style="left:1375.00px;width:120px;text-align:center;top:734.68px;font-size:12.9px;line-height:12.9px;color:#2a2a2a;font-weight:normal;font-style:normal;font-family:'Liberation Sans',sans-serif;">Tile4(id=4)</div>
<div class="t" style="left:1494.00px;width:120px;text-align:center;top:734.68px;font-size:12.9px;line-height:12.9px;color:#2a2a2a;font-weight:normal;font-style:normal;font-family:'Liberation Sans',sans-serif;">2</div>
<div class="t" style="left:1613.00px;width:120px;text-align:center;top:734.68px;font-size:12.9px;line-height:12.9px;color:#2a2a2a;font-weight:normal;font-style:normal;font-family:'Liberation Sans',sans-serif;">0</div>
<svg class="abs" style="left:1760px;top:734px" width="13" height="13"><defs><linearGradient id="sg1760_734" x1="0" y1="0" x2="0" y2="1"><stop offset="0" stop-color="#fbfbfb"/><stop offset="1" stop-color="#cfdae4"/></linearGradient></defs><rect x="0.5" y="0.5" width="12" height="12" fill="url(#sg1760_734)" stroke="#8a9096"/></svg>
<div class="t" style="left:1798.00px;width:120px;text-align:center;top:734.68px;font-size:12.9px;line-height:12.9px;color:#2a2a2a;font-weight:normal;font-style:normal;font-family:'Liberation Sans',sans-serif;">true</div>
<div class="abs" style="left:1284px;top:748px;width:634px;height:16px;background:#b9cfe4;border-bottom:1px solid #8ea0b4"></div>
<div class="abs" style="left:1374px;top:748px;width:1px;height:16px;background:#8ea0b4"></div>
<div class="abs" style="left:1493px;top:748px;width:1px;height:16px;background:#8ea0b4"></div>
<div class="abs" style="left:1612px;top:748px;width:1px;height:16px;background:#8ea0b4"></div>
<div class="abs" style="left:1732px;top:748px;width:1px;height:16px;background:#8ea0b4"></div>
<div class="abs" style="left:1797px;top:748px;width:1px;height:16px;background:#8ea0b4"></div>
<div class="abs" style="left:1917px;top:748px;width:1px;height:16px;background:#8ea0b4"></div>
<div class="t" style="left:1256.50px;width:120px;text-align:center;top:750.68px;font-size:12.9px;line-height:12.9px;color:#2a2a2a;font-weight:normal;font-style:normal;font-family:'Liberation Sans',sans-serif;">46(id=0)</div>
<div class="t" style="left:1375.00px;width:120px;text-align:center;top:750.68px;font-size:12.9px;line-height:12.9px;color:#2a2a2a;font-weight:normal;font-style:normal;font-family:'Liberation Sans',sans-serif;">Tile0(id=0)</div>
<div class="t" style="left:1494.00px;width:120px;text-align:center;top:750.68px;font-size:12.9px;line-height:12.9px;color:#2a2a2a;font-weight:normal;font-style:normal;font-family:'Liberation Sans',sans-serif;">2</div>
<div class="t" style="left:1613.00px;width:120px;text-align:center;top:750.68px;font-size:12.9px;line-height:12.9px;color:#2a2a2a;font-weight:normal;font-style:normal;font-family:'Liberation Sans',sans-serif;">0</div>
<svg class="abs" style="left:1760px;top:750px" width="13" height="13"><defs><linearGradient id="sg1760_750" x1="0" y1="0" x2="0" y2="1"><stop offset="0" stop-color="#fbfbfb"/><stop offset="1" stop-color="#cfdae4"/></linearGradient></defs><rect x="0.5" y="0.5" width="12" height="12" fill="url(#sg1760_750)" stroke="#8a9096"/></svg>
<div class="t" style="left:1798.00px;width:120px;text-align:center;top:750.68px;font-size:12.9px;line-height:12.9px;color:#2a2a2a;font-weight:normal;font-style:normal;font-family:'Liberation Sans',sans-serif;">true</div>
<div class="abs" style="left:1284px;top:764px;width:634px;height:16px;background:#b9cfe4;border-bottom:1px solid #8ea0b4"></div>
<div class="abs" style="left:1374px;top:764px;width:1px;height:16px;background:#8ea0b4"></div>
<div class="abs" style="left:1493px;top:764px;width:1px;height:16px;background:#8ea0b4"></div>
<div class="abs" style="left:1612px;top:764px;width:1px;height:16px;background:#8ea0b4"></div>
<div class="abs" style="left:1732px;top:764px;width:1px;height:16px;background:#8ea0b4"></div>
<div class="abs" style="left:1797px;top:764px;width:1px;height:16px;background:#8ea0b4"></div>
<div class="abs" style="left:1917px;top:764px;width:1px;height:16px;background:#8ea0b4"></div>
<div class="t" style="left:1256.00px;width:120px;text-align:center;top:766.68px;font-size:12.9px;line-height:12.9px;color:#2a2a2a;font-weight:normal;font-style:normal;font-family:'Liberation Sans',sans-serif;">118(id=1)</div>
<div class="t" style="left:1375.00px;width:120px;text-align:center;top:766.68px;font-size:12.9px;line-height:12.9px;color:#2a2a2a;font-weight:normal;font-style:normal;font-family:'Liberation Sans',sans-serif;">Tile1(id=1)</div>
<div class="t" style="left:1494.00px;width:120px;text-align:center;top:766.68px;font-size:12.9px;line-height:12.9px;color:#2a2a2a;font-weight:normal;font-style:normal;font-family:'Liberation Sans',sans-serif;">2</div>
<div class="t" style="left:1613.00px;width:120px;text-align:center;top:766.68px;font-size:12.9px;line-height:12.9px;color:#2a2a2a;font-weight:normal;font-style:normal;font-family:'Liberation Sans',sans-serif;">0</div>
<svg class="abs" style="left:1760px;top:766px" width="13" height="13"><defs><linearGradient id="sg1760_766" x1="0" y1="0" x2="0" y2="1"><stop offset="0" stop-color="#fbfbfb"/><stop offset="1" stop-color="#cfdae4"/></linearGradient></defs><rect x="0.5" y="0.5" width="12" height="12" fill="url(#sg1760_766)" stroke="#8a9096"/></svg>
<div class="t" style="left:1798.00px;width:120px;text-align:center;top:766.68px;font-size:12.9px;line-height:12.9px;color:#2a2a2a;font-weight:normal;font-style:normal;font-family:'Liberation Sans',sans-serif;">true</div>
<div class="abs" style="left:1284px;top:780px;width:634px;height:16px;background:#b9cfe4;border-bottom:1px solid #8ea0b4"></div>
<div class="abs" style="left:1374px;top:780px;width:1px;height:16px;background:#8ea0b4"></div>
<div class="abs" style="left:1493px;top:780px;width:1px;height:16px;background:#8ea0b4"></div>
<div class="abs" style="left:1612px;top:780px;width:1px;height:16px;background:#8ea0b4"></div>
<div class="abs" style="left:1732px;top:780px;width:1px;height:16px;background:#8ea0b4"></div>
<div class="abs" style="left:1797px;top:780px;width:1px;height:16px;background:#8ea0b4"></div>
<div class="abs" style="left:1917px;top:780px;width:1px;height:16px;background:#8ea0b4"></div>
<div class="t" style="left:1256.00px;width:120px;text-align:center;top:782.68px;font-size:12.9px;line-height:12.9px;color:#2a2a2a;font-weight:normal;font-style:normal;font-family:'Liberation Sans',sans-serif;">190(id=2)</div>
<div class="t" style="left:1375.00px;width:120px;text-align:center;top:782.68px;font-size:12.9px;line-height:12.9px;color:#2a2a2a;font-weight:normal;font-style:normal;font-family:'Liberation Sans',sans-serif;">Tile2(id=2)</div>
<div class="t" style="left:1494.00px;width:120px;text-align:center;top:782.68px;font-size:12.9px;line-height:12.9px;color:#2a2a2a;font-weight:normal;font-style:normal;font-family:'Liberation Sans',sans-serif;">2</div>
<div class="t" style="left:1613.00px;width:120px;text-align:center;top:782.68px;font-size:12.9px;line-height:12.9px;color:#2a2a2a;font-weight:normal;font-style:normal;font-family:'Liberation Sans',sans-serif;">0</div>
<svg class="abs" style="left:1760px;top:782px" width="13" height="13"><defs><linearGradient id="sg1760_782" x1="0" y1="0" x2="0" y2="1"><stop offset="0" stop-color="#fbfbfb"/><stop offset="1" stop-color="#cfdae4"/></linearGradient></defs><rect x="0.5" y="0.5" width="12" height="12" fill="url(#sg1760_782)" stroke="#8a9096"/></svg>
<div class="t" style="left:1798.00px;width:120px;text-align:center;top:782.68px;font-size:12.9px;line-height:12.9px;color:#2a2a2a;font-weight:normal;font-style:normal;font-family:'Liberation Sans',sans-serif;">true</div>
<div class="abs" style="left:1284px;top:796px;width:634px;height:16px;background:#b9cfe4;border-bottom:1px solid #8ea0b4"></div>
<div class="abs" style="left:1374px;top:796px;width:1px;height:16px;background:#8ea0b4"></div>
<div class="abs" style="left:1493px;top:796px;width:1px;height:16px;background:#8ea0b4"></div>
<div class="abs" style="left:1612px;top:796px;width:1px;height:16px;background:#8ea0b4"></div>
<div class="abs" style="left:1732px;top:796px;width:1px;height:16px;background:#8ea0b4"></div>
<div class="abs" style="left:1797px;top:796px;width:1px;height:16px;background:#8ea0b4"></div>
<div class="abs" style="left:1917px;top:796px;width:1px;height:16px;background:#8ea0b4"></div>
<div class="t" style="left:1256.00px;width:120px;text-align:center;top:798.68px;font-size:12.9px;line-height:12.9px;color:#2a2a2a;font-weight:normal;font-style:normal;font-family:'Liberation Sans',sans-serif;">262(id=3)</div>
<div class="t" style="left:1375.00px;width:120px;text-align:center;top:798.68px;font-size:12.9px;line-height:12.9px;color:#2a2a2a;font-weight:normal;font-style:normal;font-family:'Liberation Sans',sans-serif;">Tile3(id=3)</div>
<div class="t" style="left:1494.00px;width:120px;text-align:center;top:798.68px;font-size:12.9px;line-height:12.9px;color:#2a2a2a;font-weight:normal;font-style:normal;font-family:'Liberation Sans',sans-serif;">2</div>
<div class="t" style="left:1613.00px;width:120px;text-align:center;top:798.68px;font-size:12.9px;line-height:12.9px;color:#2a2a2a;font-weight:normal;font-style:normal;font-family:'Liberation Sans',sans-serif;">0</div>
<svg class="abs" style="left:1760px;top:798px" width="13" height="13"><defs><linearGradient id="sg1760_798" x1="0" y1="0" x2="0" y2="1"><stop offset="0" stop-color="#fbfbfb"/><stop offset="1" stop-color="#cfdae4"/></linearGradient></defs><rect x="0.5" y="0.5" width="12" height="12" fill="url(#sg1760_798)" stroke="#8a9096"/></svg>
<div class="t" style="left:1798.00px;width:120px;text-align:center;top:798.68px;font-size:12.9px;line-height:12.9px;color:#2a2a2a;font-weight:normal;font-style:normal;font-family:'Liberation Sans',sans-serif;">true</div>
<div class="abs" style="left:1284px;top:812px;width:634px;height:16px;background:#b9cfe4;border-bottom:1px solid #8ea0b4"></div>
<div class="abs" style="left:1374px;top:812px;width:1px;height:16px;background:#8ea0b4"></div>
<div class="abs" style="left:1493px;top:812px;width:1px;height:16px;background:#8ea0b4"></div>
<div class="abs" style="left:1612px;top:812px;width:1px;height:16px;background:#8ea0b4"></div>
<div class="abs" style="left:1732px;top:812px;width:1px;height:16px;background:#8ea0b4"></div>
<div class="abs" style="left:1797px;top:812px;width:1px;height:16px;background:#8ea0b4"></div>
<div class="abs" style="left:1917px;top:812px;width:1px;height:16px;background:#8ea0b4"></div>
<div class="t" style="left:1256.00px;width:120px;text-align:center;top:814.68px;font-size:12.9px;line-height:12.9px;color:#2a2a2a;font-weight:normal;font-style:normal;font-family:'Liberation Sans',sans-serif;">334(id=4)</div>
<div class="t" style="left:1375.00px;width:120px;text-align:center;top:814.68px;font-size:12.9px;line-height:12.9px;color:#2a2a2a;font-weight:normal;font-style:normal;font-family:'Liberation Sans',sans-serif;">Tile4(id=4)</div>
<div class="t" style="left:1494.00px;width:120px;text-align:center;top:814.68px;font-size:12.9px;line-height:12.9px;color:#2a2a2a;font-weight:normal;font-style:normal;font-family:'Liberation Sans',sans-serif;">2</div>
<div class="t" style="left:1613.00px;width:120px;text-align:center;top:814.68px;font-size:12.9px;line-height:12.9px;color:#2a2a2a;font-weight:normal;font-style:normal;font-family:'Liberation Sans',sans-serif;">0</div>
<svg class="abs" style="left:1760px;top:814px" width="13" height="13"><defs><linearGradient id="sg1760_814" x1="0" y1="0" x2="0" y2="1"><stop offset="0" stop-color="#fbfbfb"/><stop offset="1" stop-color="#cfdae4"/></linearGradient></defs><rect x="0.5" y="0.5" width="12" height="12" fill="url(#sg1760_814)" stroke="#8a9096"/></svg>
<div class="t" style="left:1798.00px;width:120px;text-align:center;top:814.68px;font-size:12.9px;line-height:12.9px;color:#2a2a2a;font-weight:normal;font-style:normal;font-family:'Liberation Sans',sans-serif;">true</div>
<svg class="abs" style="left:1831px;top:977px" width="13" height="13"><defs><linearGradient id="sg1831_977" x1="0" y1="0" x2="0" y2="1"><stop offset="0" stop-color="#fbfbfb"/><stop offset="1" stop-color="#cfdae4"/></linearGradient></defs><rect x="0.5" y="0.5" width="12" height="12" fill="url(#sg1831_977)" stroke="#8a9096"/><path d="M3.6400000000000006 7.15L5.46 10.14L9.75 3.25" stroke="#2a2a2a" stroke-width="2" fill="none"/></svg>
<div class="t" style="left:1848.50px;top:977.10px;font-size:12.05px;line-height:12.05px;color:#2c2c2c;font-weight:bold;font-style:normal;font-family:'Liberation Sans',sans-serif;">Group Tiles</div>
<div class="win" style="left:573px;top:40px;width:711px;height:1042px;background:#efefed;border-radius:11px 11px 0 0;box-shadow:0 3px 10px rgba(0,0,0,0.45)">
<div class="abs" style="left:0px;top:0px;width:711px;height:37px;background:#ebebe9;border-bottom:1px solid #d2d2d0"></div>
</div>
<div class="t" style="left:628.50px;width:600px;text-align:center;top:51.17px;font-size:17.05px;line-height:17.05px;color:#3c3c3c;font-weight:bold;font-style:normal;font-family:'Liberation Sans',sans-serif;">TP=0 Angle=46 Channel=561 Illum=561</div>
<svg class="abs" style="left:1255px;top:48px" width="23" height="23"><circle cx="11.3" cy="11" r="10.5" fill="#dededc"/><path d="M7.3 7L15.3 15M15.3 7L7.3 15" stroke="#2e2e2e" stroke-width="1.4"/></svg>
<div class="t" style="left:578.30px;top:78.36px;font-size:12.33px;line-height:12.33px;color:#1c2838;font-weight:normal;font-style:normal;font-family:'Liberation Sans',sans-serif;">30/60; 701x961 pixels; 32-bit; 154MB</div>
<svg class="abs" style="left:578px;top:94px" width="701" height="961" viewBox="578 94 701 961"><defs><filter color-interpolation-filters="sRGB" id="fb3" x="-30%" y="-30%" width="160%" height="160%"><feGaussianBlur stdDeviation="3"/></filter><filter color-interpolation-filters="sRGB" id="fb8" x="-30%" y="-30%" width="160%" height="160%"><feGaussianBlur stdDeviation="8"/></filter><filter color-interpolation-filters="sRGB" id="fb25" x="-50%" y="-50%" width="200%" height="200%"><feGaussianBlur stdDeviation="25"/></filter><filter color-interpolation-filters="sRGB" id="fb1" x="-10%" y="-10%" width="120%" height="120%"><feGaussianBlur stdDeviation="1.0"/></filter><filter color-interpolation-filters="sRGB" id="fb14" x="-150%" y="-150%" width="400%" height="400%"><feGaussianBlur stdDeviation="14"/></filter><filter color-interpolation-filters="sRGB" id="fb2" x="-10%" y="-10%" width="120%" height="120%"><feGaussianBlur stdDeviation="1.8"/></filter><filter color-interpolation-filters="sRGB" id="fb9" x="-150%" y="-150%" width="400%" height="400%"><feGaussianBlur stdDeviation="8"/></filter><filter color-interpolation-filters="sRGB" id="fb5" x="-30%" y="-30%" width="160%" height="160%"><feGaussianBlur stdDeviation="5"/></filter><radialGradient id="eint" gradientUnits="userSpaceOnUse" cx="950" cy="620" r="330" gradientTransform="translate(950 620) scale(0.5 1.3) translate(-950 -620)"><stop offset="0" stop-color="#727272"/><stop offset="0.6" stop-color="#6a6a6a"/><stop offset="0.88" stop-color="#5c5c5c"/><stop offset="1" stop-color="#525252"/></radialGradient></defs><rect x="578" y="94" width="701" height="961" fill="#000"/><path d="M888.4 172.1L893.4 171.9L898.3 171.8L903.2 171.9L908.1 172.1L913.0 172.5L917.8 173.0L922.7 173.6L927.5 174.4L932.3 175.3L937.1 176.3L941.8 177.5L946.5 178.8L951.1 180.3L955.7 181.9L960.3 183.7L964.9 185.8L969.7 188.1L974.3 190.8L978.7 193.5L982.8 196.4L986.6 199.4L990.1 202.4L993.5 205.4L996.6 208.3L999.5 211.3L1002.2 214.1L1004.8 216.9L1007.2 219.6L1009.5 222.2L1011.7 224.7L1013.8 227.0L1015.9 229.5L1018.4 232.3L1021.0 235.3L1023.5 238.4L1025.9 241.5L1028.3 244.5L1030.6 247.6L1032.9 250.7L1035.1 253.7L1037.2 256.8L1039.3 259.9L1041.4 262.9L1043.5 266.0L1045.5 269.0L1047.5 272.0L1049.5 275.0L1051.4 278.0L1053.4 281.0L1055.4 284.0L1057.4 287.1L1059.4 290.3L1061.5 293.5L1063.6 296.7L1065.7 300.1L1067.9 303.5L1070.0 307.1L1072.2 310.7L1074.4 314.4L1076.5 318.2L1078.7 322.2L1080.8 326.2L1082.9 330.3L1085.0 334.6L1087.1 338.9L1089.1 343.3L1091.0 347.7L1093.0 352.1L1094.9 356.7L1096.7 361.2L1098.6 365.8L1100.4 370.4L1102.2 375.0L1103.9 379.6L1105.6 384.2L1107.3 388.8L1109.0 393.4L1110.6 397.9L1112.2 402.4L1113.8 406.8L1115.3 411.2L1116.8 415.7L1118.3 420.2L1119.8 424.7L1121.3 429.2L1122.7 433.7L1124.2 438.2L1125.6 442.7L1126.9 447.3L1128.3 451.8L1129.6 456.4L1130.9 460.9L1132.2 465.5L1133.4 470.0L1134.6 474.6L1135.8 479.2L1136.9 483.7L1138.0 488.3L1139.1 492.8L1140.2 497.3L1141.2 501.9L1142.2 506.4L1143.1 511.0L1144.1 515.5L1145.0 520.1L1145.9 524.7L1146.7 529.2L1147.5 533.8L1148.3 538.3L1149.1 542.9L1149.8 547.4L1150.5 552.0L1151.2 556.6L1151.9 561.2L1152.5 565.8L1153.1 570.4L1153.7 575.0L1154.2 579.7L1154.7 584.3L1155.2 588.9L1155.6 593.5L1156.0 598.0L1156.4 602.6L1156.8 607.1L1157.1 611.6L1157.4 616.1L1157.7 620.5L1157.9 624.9L1158.2 629.2L1158.3 633.5L1158.5 637.8L1158.6 642.0L1158.7 646.2L1158.8 650.3L1158.8 654.4L1158.8 658.5L1158.8 662.6L1158.7 666.7L1158.7 670.8L1158.6 675.0L1158.5 679.1L1158.3 683.3L1158.1 687.5L1158.0 691.8L1157.8 696.1L1157.5 700.4L1157.3 704.8L1157.1 709.3L1156.8 713.8L1156.5 718.4L1156.2 723.0L1155.8 727.7L1155.4 732.4L1155.0 737.1L1154.5 741.8L1154.0 746.6L1153.5 751.4L1152.9 756.2L1152.3 761.1L1151.6 765.9L1150.8 770.8L1150.0 775.7L1149.1 780.6L1148.2 785.4L1147.3 790.3L1146.3 795.2L1145.3 800.0L1144.3 804.8L1143.2 809.5L1142.2 814.2L1141.1 818.8L1140.0 823.4L1139.0 827.8L1137.9 832.2L1136.9 836.5L1135.8 840.6L1134.8 844.7L1133.8 848.8L1132.8 852.8L1131.7 856.8L1130.7 860.7L1129.6 864.6L1128.5 868.5L1127.4 872.4L1126.3 876.2L1125.2 880.1L1124.0 883.9L1122.8 887.7L1121.5 891.5L1120.2 895.3L1118.9 899.1L1117.5 902.9L1116.1 906.7L1114.6 910.4L1113.1 914.1L1111.6 917.8L1110.1 921.5L1108.5 925.1L1106.9 928.6L1105.3 932.2L1103.7 935.6L1102.0 939.0L1100.4 942.4L1098.7 945.7L1097.0 949.0L1095.4 952.1L1093.7 955.3L1092.0 958.3L1090.3 961.4L1088.5 964.5L1086.7 967.6L1084.9 970.6L1083.1 973.5L1081.2 976.4L1079.4 979.3L1077.5 982.1L1075.6 984.8L1073.7 987.5L1071.8 990.1L1069.9 992.6L1068.0 995.1L1066.1 997.6L1064.2 999.9L1062.2 1002.3L1060.0 1004.7L1057.8 1007.0L1055.6 1009.2L1053.3 1011.3L1051.1 1013.3L1048.8 1015.2L1046.6 1016.9L1044.4 1018.5L1042.2 1020.0L1040.1 1021.3L1038.2 1022.6L1036.3 1023.7L1034.6 1024.7L1033.0 1025.6L1031.6 1026.4L1030.1 1027.2L1028.4 1028.1L1026.5 1029.0L1024.6 1030.0L1022.6 1031.0L1020.5 1031.9L1018.3 1032.8L1016.1 1033.7L1013.8 1034.5L1011.4 1035.3L1009.0 1036.1L1006.4 1036.7L1003.8 1037.3L1001.1 1037.9L998.4 1038.3L995.6 1038.7L992.8 1038.9L990.0 1039.0L987.3 1039.1L984.6 1039.1L982.0 1038.9L979.4 1038.7L976.8 1038.4L974.3 1038.1L971.8 1037.7L969.4 1037.2L967.0 1036.7L964.7 1036.1L962.5 1035.5L960.3 1034.9L958.1 1034.2L956.0 1033.5L953.9 1032.8L951.7 1032.0L949.4 1031.1L947.1 1030.3L944.9 1029.3L942.6 1028.4L940.3 1027.4L938.0 1026.3L935.7 1025.2L933.4 1024.1L931.1 1023.0L928.8 1021.8L926.5 1020.5L924.2 1019.2L921.9 1017.9L919.6 1016.6L917.3 1015.2L915.2 1013.9L913.1 1012.6L910.9 1011.3L908.7 1009.9L906.4 1008.4L904.1 1006.9L901.7 1005.3L899.4 1003.6L896.9 1001.9L894.5 1000.1L892.0 998.3L889.5 996.3L887.0 994.3L884.5 992.2L881.9 990.1L879.4 987.9L877.0 985.7L874.7 983.6L872.3 981.4L869.8 979.0L867.3 976.6L864.8 974.2L862.3 971.6L859.7 969.0L857.2 966.4L854.6 963.6L852.1 960.8L849.6 957.9L847.0 955.0L844.6 951.9L842.1 948.8L839.8 945.7L837.5 942.5L835.3 939.3L833.2 936.1L831.2 932.9L829.2 929.7L827.4 926.6L825.6 923.4L823.9 920.3L822.2 917.2L820.6 914.1L819.1 911.0L817.5 908.0L816.1 904.9L814.6 902.0L813.2 899.0L811.8 896.0L810.3 892.8L808.8 889.6L807.4 886.3L806.0 883.0L804.6 879.7L803.2 876.5L801.9 873.2L800.6 869.9L799.3 866.6L798.1 863.3L796.9 860.0L795.7 856.8L794.5 853.6L793.4 850.4L792.3 847.2L791.2 843.9L790.0 840.6L788.9 837.3L787.9 834.0L786.9 830.7L785.9 827.4L784.9 824.2L784.0 821.0L783.1 817.8L782.2 814.7L781.4 811.6L780.6 808.6L779.7 805.6L778.9 802.6L778.1 799.6L777.3 796.7L776.5 793.8L775.7 790.9L774.8 787.9L774.0 784.8L773.1 781.8L772.3 778.8L771.4 775.7L770.5 772.6L769.7 769.6L768.8 766.5L768.0 763.3L767.2 760.2L766.3 757.1L765.5 753.9L764.7 750.8L763.9 747.6L763.1 744.4L762.4 741.3L761.7 738.3L760.9 735.2L760.2 732.1L759.5 729.1L758.8 726.0L758.2 722.9L757.5 719.9L756.9 716.8L756.2 713.7L755.6 710.6L755.0 707.5L754.4 704.4L753.8 701.3L753.2 698.2L752.6 695.0L752.1 691.9L751.5 688.8L751.0 685.7L750.5 682.6L750.1 679.6L749.6 676.5L749.1 673.5L748.7 670.4L748.3 667.4L747.9 664.3L747.4 661.2L747.0 658.1L746.6 655.0L746.2 651.8L745.8 648.5L745.3 645.1L744.9 641.6L744.4 638.0L744.0 634.3L743.5 630.6L743.1 626.8L742.6 623.0L742.2 619.1L741.8 615.3L741.3 611.4L740.9 607.5L740.4 603.6L740.0 599.8L739.6 595.9L739.1 592.1L738.7 588.4L738.3 584.7L737.9 581.2L737.4 577.8L737.0 574.4L736.5 571.0L736.0 567.5L735.5 563.9L735.0 560.3L734.5 556.6L734.0 552.8L733.5 548.8L733.0 544.7L732.5 540.5L732.1 536.2L731.7 531.7L731.4 527.1L731.1 522.4L730.8 517.7L730.6 513.0L730.4 508.1L730.1 503.2L730.0 498.2L729.8 493.0L729.7 487.8L729.6 482.5L729.5 477.2L729.5 471.8L729.4 466.3L729.5 460.8L729.6 455.2L729.7 449.6L729.8 444.0L730.0 438.4L730.3 432.7L730.6 426.9L730.9 420.9L731.3 414.8L731.7 408.7L732.1 402.5L732.6 396.3L733.1 390.1L733.7 383.9L734.3 377.8L734.9 371.7L735.6 365.8L736.2 360.0L737.0 354.4L737.7 349.0L738.5 343.8L739.3 338.7L740.2 333.8L741.1 329.1L742.1 324.6L743.1 320.1L744.2 315.9L745.2 311.8L746.3 307.8L747.5 304.0L748.6 300.3L749.7 296.7L750.9 293.2L752.0 289.9L753.2 286.6L754.3 283.5L755.4 280.3L756.7 276.9L758.0 273.5L759.3 270.2L760.7 267.0L762.1 263.9L763.5 260.8L764.9 257.9L766.4 255.0L767.9 252.1L769.3 249.4L770.8 246.7L772.4 244.1L773.9 241.6L775.4 239.1L776.9 236.7L778.2 234.5L779.3 232.9L780.2 231.5L781.2 229.8L782.3 227.9L783.6 225.7L785.1 223.3L786.8 220.6L788.8 217.8L791.1 214.7L793.7 211.5L796.7 208.4L799.9 205.2L803.5 202.1L807.3 199.2L811.3 196.5L815.4 194.1L819.3 192.1L823.1 190.1L827.1 188.3L831.2 186.5L835.4 184.8L839.7 183.2L844.2 181.6L848.7 180.1L853.4 178.6L858.2 177.3L863.0 176.1L867.9 175.0L872.9 174.0L878.0 173.2L883.2 172.5Z" fill="#121210" filter="url(#fb25)"/><path d="M890.4 202.0L894.3 201.8L898.2 201.8L902.2 201.9L906.2 202.1L910.3 202.4L914.3 202.8L918.3 203.3L922.3 204.0L926.3 204.7L930.2 205.6L934.1 206.5L937.9 207.6L941.6 208.8L945.3 210.0L948.8 211.4L952.2 212.9L955.6 214.6L958.9 216.5L962.0 218.4L964.9 220.5L967.8 222.7L970.5 225.0L973.1 227.3L975.6 229.7L978.0 232.2L980.3 234.6L982.6 237.1L984.8 239.6L987.0 242.0L989.2 244.5L991.3 246.9L993.5 249.4L995.7 251.9L998.0 254.6L1000.2 257.2L1002.3 259.9L1004.4 262.7L1006.5 265.5L1008.6 268.3L1010.6 271.1L1012.6 273.9L1014.6 276.8L1016.6 279.7L1018.5 282.6L1020.5 285.6L1022.4 288.5L1024.4 291.5L1026.4 294.5L1028.3 297.5L1030.3 300.5L1032.3 303.5L1034.3 306.6L1036.3 309.7L1038.3 312.8L1040.3 316.0L1042.3 319.3L1044.3 322.6L1046.3 325.9L1048.3 329.3L1050.3 332.8L1052.3 336.4L1054.2 340.1L1056.1 343.8L1058.0 347.6L1059.9 351.6L1061.7 355.6L1063.6 359.7L1065.4 363.9L1067.2 368.2L1068.9 372.5L1070.7 376.9L1072.4 381.3L1074.2 385.7L1075.8 390.2L1077.5 394.7L1079.2 399.1L1080.8 403.6L1082.4 408.0L1083.9 412.4L1085.4 416.7L1086.9 421.0L1088.4 425.4L1089.9 429.7L1091.3 434.1L1092.8 438.4L1094.2 442.8L1095.5 447.1L1096.9 451.5L1098.2 455.9L1099.5 460.3L1100.8 464.6L1102.0 469.0L1103.2 473.4L1104.4 477.8L1105.6 482.2L1106.7 486.5L1107.8 490.9L1108.9 495.3L1109.9 499.7L1110.9 504.0L1111.9 508.4L1112.8 512.8L1113.8 517.1L1114.7 521.5L1115.5 525.9L1116.4 530.3L1117.2 534.6L1118.0 539.0L1118.8 543.4L1119.5 547.7L1120.2 552.1L1120.9 556.5L1121.5 560.9L1122.2 565.3L1122.8 569.7L1123.3 574.1L1123.9 578.6L1124.4 583.0L1124.9 587.5L1125.3 591.9L1125.8 596.3L1126.2 600.7L1126.5 605.1L1126.9 609.4L1127.2 613.7L1127.5 618.0L1127.8 622.3L1128.0 626.5L1128.2 630.6L1128.4 634.7L1128.5 638.8L1128.6 642.8L1128.7 646.7L1128.8 650.6L1128.8 654.6L1128.8 658.5L1128.8 662.4L1128.7 666.3L1128.7 670.2L1128.6 674.2L1128.5 678.2L1128.3 682.2L1128.2 686.3L1128.0 690.4L1127.8 694.7L1127.6 698.9L1127.4 703.2L1127.1 707.6L1126.9 712.0L1126.6 716.4L1126.2 720.8L1125.9 725.3L1125.5 729.8L1125.1 734.3L1124.7 738.8L1124.2 743.4L1123.7 747.9L1123.1 752.4L1122.5 757.0L1121.9 761.5L1121.2 766.0L1120.4 770.6L1119.6 775.2L1118.8 779.8L1117.9 784.5L1116.9 789.1L1116.0 793.8L1115.0 798.4L1113.9 803.0L1112.9 807.5L1111.9 812.0L1110.8 816.4L1109.8 820.8L1108.7 825.1L1107.7 829.3L1106.7 833.4L1105.7 837.4L1104.7 841.4L1103.7 845.3L1102.7 849.1L1101.7 852.9L1100.7 856.7L1099.7 860.4L1098.6 864.1L1097.6 867.7L1096.5 871.3L1095.4 874.9L1094.2 878.4L1093.1 882.0L1091.9 885.5L1090.6 889.0L1089.4 892.5L1088.1 895.9L1086.7 899.4L1085.3 902.8L1083.9 906.2L1082.5 909.6L1081.0 912.9L1079.6 916.3L1078.1 919.5L1076.6 922.7L1075.0 925.9L1073.5 929.1L1071.9 932.1L1070.4 935.1L1068.8 938.1L1067.3 941.0L1065.8 943.8L1064.2 946.6L1062.6 949.4L1061.0 952.2L1059.3 954.9L1057.7 957.5L1056.0 960.2L1054.3 962.7L1052.7 965.2L1051.0 967.7L1049.3 970.0L1047.6 972.3L1046.0 974.6L1044.4 976.7L1042.7 978.7L1041.1 980.7L1039.5 982.6L1037.9 984.4L1036.3 986.0L1034.8 987.6L1033.2 989.1L1031.6 990.5L1030.1 991.7L1028.5 992.9L1027.0 994.0L1025.5 995.1L1024.1 996.0L1022.6 996.9L1021.2 997.8L1019.8 998.6L1018.4 999.3L1017.1 1000.1L1015.8 1000.8L1014.4 1001.5L1012.9 1002.3L1011.5 1003.0L1010.0 1003.7L1008.5 1004.4L1007.0 1005.0L1005.5 1005.6L1003.9 1006.2L1002.4 1006.7L1000.8 1007.2L999.1 1007.6L997.5 1008.0L995.8 1008.3L994.1 1008.6L992.4 1008.8L990.7 1009.0L989.0 1009.1L987.3 1009.1L985.6 1009.1L983.9 1009.0L982.2 1008.9L980.5 1008.7L978.9 1008.4L977.2 1008.1L975.5 1007.8L973.9 1007.5L972.2 1007.0L970.5 1006.6L968.9 1006.1L967.2 1005.6L965.5 1005.0L963.7 1004.4L961.9 1003.8L960.1 1003.1L958.3 1002.4L956.4 1001.6L954.5 1000.8L952.6 1000.0L950.7 999.1L948.7 998.2L946.8 997.2L944.8 996.2L942.8 995.2L940.8 994.2L938.8 993.1L936.8 991.9L934.8 990.8L932.8 989.6L930.9 988.4L928.9 987.1L926.9 985.9L924.9 984.6L922.8 983.3L920.8 981.9L918.7 980.5L916.6 979.1L914.5 977.6L912.3 976.0L910.2 974.4L908.0 972.7L905.9 971.0L903.7 969.2L901.5 967.4L899.4 965.5L897.2 963.5L895.0 961.5L892.8 959.5L890.5 957.3L888.2 955.1L885.9 952.9L883.6 950.6L881.3 948.2L879.0 945.8L876.7 943.3L874.5 940.9L872.3 938.3L870.1 935.8L868.0 933.2L865.9 930.6L863.9 927.9L862.0 925.3L860.2 922.6L858.4 919.9L856.7 917.1L855.0 914.4L853.4 911.6L851.8 908.8L850.3 906.0L848.8 903.2L847.3 900.4L845.9 897.5L844.4 894.7L843.1 891.8L841.7 889.0L840.3 886.1L838.9 883.3L837.6 880.3L836.2 877.3L834.9 874.3L833.6 871.3L832.3 868.2L831.0 865.1L829.8 862.1L828.6 859.0L827.4 855.8L826.2 852.7L825.0 849.6L823.9 846.5L822.8 843.4L821.7 840.4L820.6 837.3L819.5 834.2L818.5 831.2L817.5 828.1L816.5 825.0L815.6 821.9L814.6 818.9L813.7 815.8L812.9 812.7L812.0 809.7L811.2 806.7L810.3 803.7L809.5 800.6L808.7 797.6L807.8 794.6L807.0 791.7L806.2 788.7L805.4 785.7L804.5 782.7L803.7 779.7L802.8 776.7L802.0 773.7L801.1 770.7L800.3 767.6L799.4 764.6L798.6 761.6L797.8 758.6L797.0 755.5L796.1 752.5L795.3 749.5L794.6 746.4L793.8 743.4L793.0 740.4L792.3 737.4L791.6 734.4L790.9 731.4L790.2 728.4L789.5 725.4L788.8 722.5L788.1 719.5L787.5 716.6L786.8 713.6L786.2 710.6L785.6 707.7L785.0 704.7L784.4 701.7L783.8 698.8L783.3 695.8L782.7 692.8L782.2 689.8L781.6 686.8L781.1 683.8L780.6 680.8L780.2 677.9L779.7 675.0L779.3 672.1L778.8 669.2L778.4 666.2L778.0 663.3L777.6 660.3L777.2 657.3L776.8 654.2L776.4 651.1L775.9 647.9L775.5 644.6L775.1 641.3L774.6 637.8L774.2 634.3L773.8 630.7L773.3 627.0L772.9 623.3L772.4 619.5L772.0 615.7L771.6 611.9L771.1 608.0L770.7 604.2L770.3 600.3L769.8 596.4L769.4 592.6L768.9 588.7L768.5 584.9L768.1 581.2L767.6 577.5L767.2 573.9L766.7 570.4L766.2 566.8L765.7 563.3L765.2 559.8L764.7 556.2L764.2 552.6L763.7 548.9L763.3 545.2L762.8 541.4L762.4 537.4L762.0 533.4L761.6 529.3L761.3 525.0L761.0 520.6L760.8 516.1L760.5 511.5L760.3 506.8L760.1 502.0L759.9 497.1L759.8 492.2L759.7 487.1L759.6 482.0L759.5 476.9L759.5 471.7L759.4 466.4L759.5 461.1L759.5 455.7L759.7 450.4L759.8 445.0L760.0 439.6L760.3 434.1L760.5 428.5L760.9 422.7L761.2 416.8L761.6 410.8L762.1 404.7L762.5 398.7L763.0 392.6L763.6 386.6L764.1 380.7L764.7 374.9L765.4 369.2L766.0 363.7L766.7 358.4L767.4 353.3L768.1 348.4L768.9 343.8L769.7 339.4L770.5 335.1L771.4 331.0L772.3 327.1L773.2 323.3L774.2 319.6L775.2 316.0L776.2 312.6L777.2 309.2L778.3 305.9L779.3 302.8L780.4 299.6L781.5 296.6L782.5 293.6L783.6 290.6L784.7 287.6L785.9 284.6L787.0 281.8L788.2 279.0L789.4 276.3L790.6 273.7L791.8 271.1L793.1 268.6L794.4 266.2L795.6 263.8L796.9 261.5L798.2 259.3L799.6 257.0L800.9 254.8L802.2 252.7L803.6 250.6L804.8 248.7L805.9 246.9L807.0 245.0L808.1 243.1L809.2 241.2L810.4 239.3L811.7 237.3L813.1 235.3L814.6 233.3L816.3 231.3L818.1 229.3L820.1 227.4L822.3 225.5L824.7 223.7L827.3 221.9L830.1 220.3L833.0 218.7L836.1 217.2L839.4 215.7L842.8 214.2L846.4 212.7L850.1 211.3L853.9 210.0L857.8 208.7L861.8 207.4L865.9 206.3L870.0 205.3L874.1 204.3L878.2 203.5L882.3 202.9L886.4 202.4Z" fill="#1c1c1a" filter="url(#fb14)"/><path d="M891.0 212.0L894.6 211.8L898.2 211.8L901.9 211.9L905.6 212.0L909.4 212.3L913.1 212.7L916.9 213.2L920.6 213.8L924.3 214.5L928.0 215.3L931.6 216.2L935.1 217.2L938.5 218.3L941.8 219.4L945.0 220.7L948.0 222.0L950.9 223.4L953.7 225.0L956.4 226.7L959.0 228.6L961.5 230.5L963.9 232.6L966.3 234.7L968.6 236.9L970.8 239.1L973.0 241.5L975.2 243.8L977.4 246.2L979.5 248.7L981.7 251.1L983.8 253.6L986.0 256.0L988.2 258.5L990.3 261.0L992.4 263.5L994.4 266.1L996.5 268.7L998.5 271.4L1000.5 274.1L1002.4 276.9L1004.4 279.7L1006.3 282.5L1008.3 285.3L1010.2 288.2L1012.1 291.1L1014.1 294.0L1016.0 297.0L1018.0 300.0L1020.0 303.0L1022.0 306.0L1023.9 309.0L1025.9 312.1L1027.9 315.1L1029.9 318.2L1031.8 321.3L1033.8 324.5L1035.8 327.7L1037.7 331.0L1039.6 334.3L1041.6 337.7L1043.4 341.1L1045.3 344.7L1047.2 348.3L1049.0 352.0L1050.8 355.8L1052.6 359.7L1054.4 363.7L1056.2 367.9L1057.9 372.0L1059.7 376.3L1061.4 380.6L1063.1 384.9L1064.8 389.3L1066.5 393.7L1068.1 398.1L1069.8 402.6L1071.4 407.0L1072.9 411.3L1074.5 415.7L1076.0 420.0L1077.5 424.3L1079.0 428.6L1080.4 432.9L1081.8 437.2L1083.2 441.5L1084.6 445.8L1086.0 450.1L1087.3 454.4L1088.6 458.8L1089.9 463.1L1091.2 467.4L1092.4 471.7L1093.6 476.0L1094.8 480.4L1095.9 484.7L1097.0 489.0L1098.1 493.3L1099.1 497.6L1100.2 501.9L1101.2 506.2L1102.1 510.6L1103.1 514.9L1104.0 519.2L1104.9 523.5L1105.7 527.8L1106.6 532.1L1107.4 536.4L1108.2 540.8L1108.9 545.1L1109.6 549.4L1110.3 553.7L1111.0 558.0L1111.6 562.3L1112.3 566.7L1112.8 571.0L1113.4 575.4L1113.9 579.8L1114.4 584.1L1114.9 588.5L1115.4 592.9L1115.8 597.2L1116.2 601.6L1116.6 605.9L1116.9 610.2L1117.2 614.4L1117.5 618.7L1117.8 622.9L1118.0 627.0L1118.2 631.1L1118.4 635.1L1118.5 639.1L1118.6 643.0L1118.7 646.9L1118.8 650.8L1118.8 654.6L1118.8 658.4L1118.8 662.3L1118.7 666.1L1118.7 670.0L1118.6 673.9L1118.5 677.8L1118.3 681.8L1118.2 685.9L1118.0 690.0L1117.8 694.2L1117.6 698.4L1117.4 702.7L1117.1 707.0L1116.9 711.3L1116.6 715.7L1116.3 720.1L1115.9 724.5L1115.6 728.9L1115.2 733.4L1114.7 737.8L1114.3 742.3L1113.8 746.7L1113.2 751.2L1112.6 755.6L1112.0 760.0L1111.3 764.4L1110.6 768.9L1109.8 773.4L1108.9 778.0L1108.0 782.6L1107.1 787.1L1106.2 791.7L1105.2 796.2L1104.2 800.8L1103.2 805.3L1102.1 809.7L1101.1 814.1L1100.1 818.5L1099.0 822.7L1098.0 826.9L1097.0 831.0L1096.0 835.0L1095.0 838.9L1094.0 842.8L1093.0 846.6L1092.0 850.4L1091.0 854.1L1090.0 857.7L1089.0 861.3L1088.0 864.9L1086.9 868.4L1085.8 871.9L1084.7 875.4L1083.6 878.8L1082.4 882.2L1081.2 885.6L1080.0 889.0L1078.7 892.4L1077.4 895.7L1076.1 899.1L1074.7 902.4L1073.3 905.7L1071.9 908.9L1070.5 912.1L1069.0 915.3L1067.5 918.5L1066.0 921.6L1064.5 924.6L1063.0 927.6L1061.5 930.5L1060.0 933.4L1058.5 936.2L1057.0 939.0L1055.5 941.7L1053.9 944.4L1052.4 947.0L1050.8 949.7L1049.2 952.2L1047.6 954.8L1046.0 957.2L1044.4 959.6L1042.8 962.0L1041.2 964.2L1039.6 966.4L1038.0 968.5L1036.5 970.5L1034.9 972.5L1033.5 974.3L1032.0 976.0L1030.6 977.6L1029.2 979.1L1027.8 980.4L1026.5 981.7L1025.1 982.9L1023.8 983.9L1022.5 984.9L1021.2 985.9L1020.0 986.8L1018.7 987.6L1017.4 988.4L1016.2 989.1L1014.9 989.9L1013.6 990.6L1012.3 991.3L1011.0 992.0L1009.7 992.7L1008.4 993.4L1007.1 994.0L1005.8 994.6L1004.5 995.2L1003.2 995.8L1001.9 996.3L1000.6 996.8L999.3 997.2L998.0 997.6L996.7 997.9L995.4 998.2L994.1 998.5L992.7 998.7L991.4 998.9L990.0 999.0L988.6 999.1L987.3 999.1L985.9 999.1L984.5 999.0L983.2 998.9L981.8 998.7L980.4 998.5L979.0 998.3L977.6 998.0L976.2 997.7L974.7 997.4L973.2 997.0L971.7 996.5L970.2 996.1L968.6 995.5L967.0 995.0L965.4 994.4L963.7 993.8L962.0 993.1L960.2 992.4L958.5 991.7L956.7 990.9L954.9 990.1L953.1 989.2L951.2 988.3L949.4 987.3L947.5 986.4L945.6 985.4L943.7 984.3L941.8 983.2L939.9 982.1L938.0 981.0L936.1 979.8L934.2 978.6L932.2 977.4L930.3 976.2L928.3 974.9L926.3 973.6L924.3 972.3L922.3 970.9L920.3 969.4L918.3 968.0L916.2 966.4L914.2 964.9L912.2 963.2L910.1 961.6L908.1 959.8L906.0 958.0L903.9 956.1L901.8 954.2L899.6 952.2L897.4 950.1L895.2 947.9L893.0 945.8L890.7 943.5L888.5 941.2L886.3 938.9L884.1 936.6L882.0 934.2L879.8 931.8L877.8 929.4L875.8 926.9L873.9 924.5L872.0 922.0L870.2 919.5L868.5 917.0L866.8 914.4L865.2 911.9L863.6 909.2L862.0 906.6L860.5 903.9L859.1 901.2L857.6 898.5L856.2 895.8L854.8 893.0L853.4 890.3L852.0 887.5L850.7 884.7L849.3 881.8L848.0 879.0L846.7 876.1L845.4 873.2L844.1 870.3L842.8 867.4L841.5 864.4L840.3 861.4L839.1 858.3L837.9 855.3L836.7 852.3L835.5 849.2L834.4 846.2L833.3 843.1L832.2 840.1L831.1 837.0L830.0 834.0L829.0 831.0L828.0 828.0L827.0 825.0L826.1 822.0L825.1 819.0L824.2 816.0L823.3 813.0L822.5 810.0L821.6 807.0L820.8 804.0L820.0 801.0L819.1 798.0L818.3 795.0L817.5 792.0L816.7 789.0L815.8 786.0L815.0 783.0L814.2 780.0L813.3 777.0L812.5 774.0L811.6 771.0L810.8 768.0L809.9 765.0L809.1 761.9L808.2 758.9L807.4 755.9L806.6 752.9L805.8 749.9L805.0 746.9L804.2 743.9L803.5 741.0L802.7 738.0L802.0 735.0L801.3 732.0L800.6 729.1L799.9 726.1L799.2 723.2L798.6 720.3L797.9 717.3L797.3 714.4L796.6 711.5L796.0 708.6L795.4 705.7L794.8 702.7L794.2 699.8L793.6 696.9L793.1 693.9L792.5 691.0L792.0 688.0L791.5 685.0L791.0 682.1L790.5 679.2L790.0 676.4L789.6 673.5L789.2 670.6L788.7 667.7L788.3 664.8L787.9 661.9L787.5 658.9L787.1 655.9L786.7 652.9L786.3 649.8L785.9 646.6L785.4 643.3L785.0 640.0L784.6 636.6L784.1 633.1L783.7 629.5L783.2 625.8L782.8 622.1L782.4 618.4L781.9 614.6L781.5 610.8L781.1 606.9L780.6 603.0L780.2 599.2L779.8 595.3L779.3 591.4L778.9 587.6L778.4 583.8L778.0 580.0L777.6 576.3L777.1 572.6L776.6 569.0L776.1 565.5L775.6 561.9L775.1 558.4L774.6 554.8L774.1 551.2L773.6 547.6L773.2 544.0L772.7 540.2L772.3 536.4L771.9 532.5L771.6 528.5L771.3 524.3L771.0 520.0L770.8 515.6L770.5 511.0L770.3 506.4L770.1 501.6L769.9 496.8L769.8 491.9L769.7 486.9L769.6 481.9L769.5 476.8L769.5 471.6L769.4 466.4L769.5 461.2L769.5 455.9L769.7 450.6L769.8 445.3L770.0 440.0L770.2 434.6L770.5 429.0L770.8 423.3L771.2 417.4L771.6 411.5L772.0 405.5L772.5 399.5L773.0 393.5L773.5 387.6L774.1 381.7L774.7 375.9L775.3 370.3L775.9 364.9L776.6 359.7L777.3 354.7L778.0 350.0L778.7 345.5L779.5 341.2L780.3 337.1L781.2 333.2L782.0 329.4L782.9 325.7L783.9 322.2L784.8 318.8L785.8 315.4L786.8 312.2L787.8 309.0L788.8 305.9L789.8 302.9L790.9 299.9L791.9 296.9L793.0 294.0L794.1 291.1L795.2 288.3L796.3 285.6L797.4 283.0L798.5 280.4L799.7 277.9L800.8 275.5L802.0 273.2L803.2 270.9L804.4 268.7L805.6 266.5L806.9 264.3L808.1 262.2L809.4 260.1L810.7 258.0L812.0 256.0L813.3 254.0L814.5 252.0L815.6 250.1L816.7 248.2L817.8 246.4L818.9 244.6L820.0 242.9L821.2 241.2L822.4 239.5L823.8 237.9L825.2 236.3L826.8 234.8L828.6 233.3L830.5 231.8L832.6 230.4L835.0 229.0L837.6 227.6L840.4 226.2L843.4 224.8L846.7 223.4L850.0 222.0L853.5 220.7L857.2 219.4L860.9 218.2L864.7 217.0L868.5 216.0L872.3 215.0L876.2 214.1L880.0 213.4L883.7 212.8L887.4 212.3Z" fill="#242424" filter="url(#fb5)"/><path d="M891.0 212.0L894.6 211.8L898.2 211.8L901.9 211.9L905.6 212.0L909.4 212.3L913.1 212.7L916.9 213.2L920.6 213.8L924.3 214.5L928.0 215.3L931.6 216.2L935.1 217.2L938.5 218.3L941.8 219.4L945.0 220.7L948.0 222.0L950.9 223.4L953.7 225.0L956.4 226.7L959.0 228.6L961.5 230.5L963.9 232.6L966.3 234.7L968.6 236.9L970.8 239.1L973.0 241.5L975.2 243.8L977.4 246.2L979.5 248.7L981.7 251.1L983.8 253.6L986.0 256.0L988.2 258.5L990.3 261.0L992.4 263.5L994.4 266.1L996.5 268.7L998.5 271.4L1000.5 274.1L1002.4 276.9L1004.4 279.7L1006.3 282.5L1008.3 285.3L1010.2 288.2L1012.1 291.1L1014.1 294.0L1016.0 297.0L1018.0 300.0L1020.0 303.0L1022.0 306.0L1023.9 309.0L1025.9 312.1L1027.9 315.1L1029.9 318.2L1031.8 321.3L1033.8 324.5L1035.8 327.7L1037.7 331.0L1039.6 334.3L1041.6 337.7L1043.4 341.1L1045.3 344.7L1047.2 348.3L1049.0 352.0L1050.8 355.8L1052.6 359.7L1054.4 363.7L1056.2 367.9L1057.9 372.0L1059.7 376.3L1061.4 380.6L1063.1 384.9L1064.8 389.3L1066.5 393.7L1068.1 398.1L1069.8 402.6L1071.4 407.0L1072.9 411.3L1074.5 415.7L1076.0 420.0L1077.5 424.3L1079.0 428.6L1080.4 432.9L1081.8 437.2L1083.2 441.5L1084.6 445.8L1086.0 450.1L1087.3 454.4L1088.6 458.8L1089.9 463.1L1091.2 467.4L1092.4 471.7L1093.6 476.0L1094.8 480.4L1095.9 484.7L1097.0 489.0L1098.1 493.3L1099.1 497.6L1100.2 501.9L1101.2 506.2L1102.1 510.6L1103.1 514.9L1104.0 519.2L1104.9 523.5L1105.7 527.8L1106.6 532.1L1107.4 536.4L1108.2 540.8L1108.9 545.1L1109.6 549.4L1110.3 553.7L1111.0 558.0L1111.6 562.3L1112.3 566.7L1112.8 571.0L1113.4 575.4L1113.9 579.8L1114.4 584.1L1114.9 588.5L1115.4 592.9L1115.8 597.2L1116.2 601.6L1116.6 605.9L1116.9 610.2L1117.2 614.4L1117.5 618.7L1117.8 622.9L1118.0 627.0L1118.2 631.1L1118.4 635.1L1118.5 639.1L1118.6 643.0L1118.7 646.9L1118.8 650.8L1118.8 654.6L1118.8 658.4L1118.8 662.3L1118.7 666.1L1118.7 670.0L1118.6 673.9L1118.5 677.8L1118.3 681.8L1118.2 685.9L1118.0 690.0L1117.8 694.2L1117.6 698.4L1117.4 702.7L1117.1 707.0L1116.9 711.3L1116.6 715.7L1116.3 720.1L1115.9 724.5L1115.6 728.9L1115.2 733.4L1114.7 737.8L1114.3 742.3L1113.8 746.7L1113.2 751.2L1112.6 755.6L1112.0 760.0L1111.3 764.4L1110.6 768.9L1109.8 773.4L1108.9 778.0L1108.0 782.6L1107.1 787.1L1106.2 791.7L1105.2 796.2L1104.2 800.8L1103.2 805.3L1102.1 809.7L1101.1 814.1L1100.1 818.5L1099.0 822.7L1098.0 826.9L1097.0 831.0L1096.0 835.0L1095.0 838.9L1094.0 842.8L1093.0 846.6L1092.0 850.4L1091.0 854.1L1090.0 857.7L1089.0 861.3L1088.0 864.9L1086.9 868.4L1085.8 871.9L1084.7 875.4L1083.6 878.8L1082.4 882.2L1081.2 885.6L1080.0 889.0L1078.7 892.4L1077.4 895.7L1076.1 899.1L1074.7 902.4L1073.3 905.7L1071.9 908.9L1070.5 912.1L1069.0 915.3L1067.5 918.5L1066.0 921.6L1064.5 924.6L1063.0 927.6L1061.5 930.5L1060.0 933.4L1058.5 936.2L1057.0 939.0L1055.5 941.7L1053.9 944.4L1052.4 947.0L1050.8 949.7L1049.2 952.2L1047.6 954.8L1046.0 957.2L1044.4 959.6L1042.8 962.0L1041.2 964.2L1039.6 966.4L1038.0 968.5L1036.5 970.5L1034.9 972.5L1033.5 974.3L1032.0 976.0L1030.6 977.6L1029.2 979.1L1027.8 980.4L1026.5 981.7L1025.1 982.9L1023.8 983.9L1022.5 984.9L1021.2 985.9L1020.0 986.8L1018.7 987.6L1017.4 988.4L1016.2 989.1L1014.9 989.9L1013.6 990.6L1012.3 991.3L1011.0 992.0L1009.7 992.7L1008.4 993.4L1007.1 994.0L1005.8 994.6L1004.5 995.2L1003.2 995.8L1001.9 996.3L1000.6 996.8L999.3 997.2L998.0 997.6L996.7 997.9L995.4 998.2L994.1 998.5L992.7 998.7L991.4 998.9L990.0 999.0L988.6 999.1L987.3 999.1L985.9 999.1L984.5 999.0L983.2 998.9L981.8 998.7L980.4 998.5L979.0 998.3L977.6 998.0L976.2 997.7L974.7 997.4L973.2 997.0L971.7 996.5L970.2 996.1L968.6 995.5L967.0 995.0L965.4 994.4L963.7 993.8L962.0 993.1L960.2 992.4L958.5 991.7L956.7 990.9L954.9 990.1L953.1 989.2L951.2 988.3L949.4 987.3L947.5 986.4L945.6 985.4L943.7 984.3L941.8 983.2L939.9 982.1L938.0 981.0L936.1 979.8L934.2 978.6L932.2 977.4L930.3 976.2L928.3 974.9L926.3 973.6L924.3 972.3L922.3 970.9L920.3 969.4L918.3 968.0L916.2 966.4L914.2 964.9L912.2 963.2L910.1 961.6L908.1 959.8L906.0 958.0L903.9 956.1L901.8 954.2L899.6 952.2L897.4 950.1L895.2 947.9L893.0 945.8L890.7 943.5L888.5 941.2L886.3 938.9L884.1 936.6L882.0 934.2L879.8 931.8L877.8 929.4L875.8 926.9L873.9 924.5L872.0 922.0L870.2 919.5L868.5 917.0L866.8 914.4L865.2 911.9L863.6 909.2L862.0 906.6L860.5 903.9L859.1 901.2L857.6 898.5L856.2 895.8L854.8 893.0L853.4 890.3L852.0 887.5L850.7 884.7L849.3 881.8L848.0 879.0L846.7 876.1L845.4 873.2L844.1 870.3L842.8 867.4L841.5 864.4L840.3 861.4L839.1 858.3L837.9 855.3L836.7 852.3L835.5 849.2L834.4 846.2L833.3 843.1L832.2 840.1L831.1 837.0L830.0 834.0L829.0 831.0L828.0 828.0L827.0 825.0L826.1 822.0L825.1 819.0L824.2 816.0L823.3 813.0L822.5 810.0L821.6 807.0L820.8 804.0L820.0 801.0L819.1 798.0L818.3 795.0L817.5 792.0L816.7 789.0L815.8 786.0L815.0 783.0L814.2 780.0L813.3 777.0L812.5 774.0L811.6 771.0L810.8 768.0L809.9 765.0L809.1 761.9L808.2 758.9L807.4 755.9L806.6 752.9L805.8 749.9L805.0 746.9L804.2 743.9L803.5 741.0L802.7 738.0L802.0 735.0L801.3 732.0L800.6 729.1L799.9 726.1L799.2 723.2L798.6 720.3L797.9 717.3L797.3 714.4L796.6 711.5L796.0 708.6L795.4 705.7L794.8 702.7L794.2 699.8L793.6 696.9L793.1 693.9L792.5 691.0L792.0 688.0L791.5 685.0L791.0 682.1L790.5 679.2L790.0 676.4L789.6 673.5L789.2 670.6L788.7 667.7L788.3 664.8L787.9 661.9L787.5 658.9L787.1 655.9L786.7 652.9L786.3 649.8L785.9 646.6L785.4 643.3L785.0 640.0L784.6 636.6L784.1 633.1L783.7 629.5L783.2 625.8L782.8 622.1L782.4 618.4L781.9 614.6L781.5 610.8L781.1 606.9L780.6 603.0L780.2 599.2L779.8 595.3L779.3 591.4L778.9 587.6L778.4 583.8L778.0 580.0L777.6 576.3L777.1 572.6L776.6 569.0L776.1 565.5L775.6 561.9L775.1 558.4L774.6 554.8L774.1 551.2L773.6 547.6L773.2 544.0L772.7 540.2L772.3 536.4L771.9 532.5L771.6 528.5L771.3 524.3L771.0 520.0L770.8 515.6L770.5 511.0L770.3 506.4L770.1 501.6L769.9 496.8L769.8 491.9L769.7 486.9L769.6 481.9L769.5 476.8L769.5 471.6L769.4 466.4L769.5 461.2L769.5 455.9L769.7 450.6L769.8 445.3L770.0 440.0L770.2 434.6L770.5 429.0L770.8 423.3L771.2 417.4L771.6 411.5L772.0 405.5L772.5 399.5L773.0 393.5L773.5 387.6L774.1 381.7L774.7 375.9L775.3 370.3L775.9 364.9L776.6 359.7L777.3 354.7L778.0 350.0L778.7 345.5L779.5 341.2L780.3 337.1L781.2 333.2L782.0 329.4L782.9 325.7L783.9 322.2L784.8 318.8L785.8 315.4L786.8 312.2L787.8 309.0L788.8 305.9L789.8 302.9L790.9 299.9L791.9 296.9L793.0 294.0L794.1 291.1L795.2 288.3L796.3 285.6L797.4 283.0L798.5 280.4L799.7 277.9L800.8 275.5L802.0 273.2L803.2 270.9L804.4 268.7L805.6 266.5L806.9 264.3L808.1 262.2L809.4 260.1L810.7 258.0L812.0 256.0L813.3 254.0L814.5 252.0L815.6 250.1L816.7 248.2L817.8 246.4L818.9 244.6L820.0 242.9L821.2 241.2L822.4 239.5L823.8 237.9L825.2 236.3L826.8 234.8L828.6 233.3L830.5 231.8L832.6 230.4L835.0 229.0L837.6 227.6L840.4 226.2L843.4 224.8L846.7 223.4L850.0 222.0L853.5 220.7L857.2 219.4L860.9 218.2L864.7 217.0L868.5 216.0L872.3 215.0L876.2 214.1L880.0 213.4L883.7 212.8L887.4 212.3Z" fill="url(#eint)"/><ellipse cx="905" cy="300" rx="90" ry="60" fill="#5a5a5a" opacity="0.25" filter="url(#fb25)"/><path d="M905 395C965 365 1005 430 1012 520C1030 620 1032 780 1012 868C992 922 930 925 900 862C868 780 868 560 878 470C884 430 892 405 905 395Z" fill="none" stroke="#909090" stroke-width="36" opacity="0.45" filter="url(#fb14)"/><circle cx="900" cy="420" r="22" fill="#acacac" opacity="0.45" filter="url(#fb9)"/><circle cx="935" cy="395" r="20" fill="#acacac" opacity="0.45" filter="url(#fb9)"/><circle cx="965" cy="425" r="16" fill="#acacac" opacity="0.45" filter="url(#fb9)"/><circle cx="885" cy="470" r="16" fill="#acacac" opacity="0.45" filter="url(#fb9)"/><circle cx="925" cy="465" r="14" fill="#acacac" opacity="0.45" filter="url(#fb9)"/><circle cx="880" cy="520" r="20" fill="#acacac" opacity="0.45" filter="url(#fb9)"/><circle cx="895" cy="560" r="14" fill="#acacac" opacity="0.45" filter="url(#fb9)"/><circle cx="955" cy="515" r="14" fill="#acacac" opacity="0.45" filter="url(#fb9)"/><circle cx="990" cy="470" r="14" fill="#acacac" opacity="0.45" filter="url(#fb9)"/><circle cx="1005" cy="555" r="16" fill="#acacac" opacity="0.45" filter="url(#fb9)"/><circle cx="1015" cy="605" r="15" fill="#acacac" opacity="0.45" filter="url(#fb9)"/><circle cx="1000" cy="655" r="18" fill="#acacac" opacity="0.45" filter="url(#fb9)"/><circle cx="1015" cy="715" r="16" fill="#acacac" opacity="0.45" filter="url(#fb9)"/><circle cx="1025" cy="785" r="18" fill="#acacac" opacity="0.45" filter="url(#fb9)"/><circle cx="1000" cy="845" r="12" fill="#acacac" opacity="0.45" filter="url(#fb9)"/><circle cx="1020" cy="875" r="10" fill="#acacac" opacity="0.45" filter="url(#fb9)"/><circle cx="975" cy="905" r="12" fill="#acacac" opacity="0.45" filter="url(#fb9)"/><circle cx="940" cy="880" r="10" fill="#acacac" opacity="0.45" filter="url(#fb9)"/><circle cx="875" cy="600" r="14" fill="#acacac" opacity="0.45" filter="url(#fb9)"/><circle cx="880" cy="700" r="14" fill="#acacac" opacity="0.45" filter="url(#fb9)"/><circle cx="895" cy="780" r="14" fill="#acacac" opacity="0.45" filter="url(#fb9)"/><circle cx="1030" cy="835" r="10" fill="#acacac" opacity="0.45" filter="url(#fb9)"/><circle cx="985" cy="895" r="12" fill="#acacac" opacity="0.45" filter="url(#fb9)"/><path d="M892.2 230.0L895.1 229.8L898.2 229.8L901.3 229.9L904.5 230.0L907.8 230.3L911.0 230.6L914.3 231.0L917.5 231.5L920.7 232.1L923.9 232.8L927.0 233.6L929.9 234.4L932.8 235.3L935.5 236.3L938.1 237.3L940.4 238.3L942.5 239.3L944.4 240.5L946.3 241.7L948.3 243.0L950.2 244.5L952.1 246.1L954.0 247.9L956.0 249.7L957.9 251.7L959.9 253.8L961.9 255.9L963.9 258.2L966.0 260.6L968.2 263.0L970.3 265.5L972.5 267.9L974.5 270.2L976.5 272.5L978.4 274.8L980.3 277.2L982.2 279.6L984.0 282.1L985.9 284.7L987.8 287.3L989.6 289.9L991.5 292.7L993.4 295.4L995.2 298.2L997.1 301.1L999.1 304.0L1001.0 306.9L1003.0 309.9L1004.9 312.9L1006.9 315.9L1008.9 318.9L1010.8 321.9L1012.8 324.9L1014.7 327.9L1016.6 330.9L1018.5 333.9L1020.3 337.0L1022.2 340.1L1024.0 343.2L1025.8 346.4L1027.6 349.7L1029.4 353.0L1031.1 356.4L1032.8 359.8L1034.5 363.4L1036.2 367.1L1037.9 371.0L1039.6 374.9L1041.3 379.0L1043.0 383.1L1044.7 387.2L1046.4 391.5L1048.0 395.8L1049.6 400.1L1051.3 404.4L1052.9 408.7L1054.4 413.1L1056.0 417.4L1057.5 421.7L1059.0 425.9L1060.5 430.2L1061.9 434.4L1063.3 438.6L1064.7 442.8L1066.1 447.0L1067.5 451.2L1068.8 455.5L1070.1 459.7L1071.4 463.9L1072.6 468.1L1073.9 472.4L1075.1 476.6L1076.2 480.8L1077.4 485.0L1078.5 489.2L1079.6 493.4L1080.6 497.6L1081.6 501.8L1082.6 506.0L1083.6 510.3L1084.6 514.5L1085.5 518.7L1086.4 522.9L1087.2 527.1L1088.1 531.3L1088.9 535.5L1089.7 539.7L1090.4 543.9L1091.2 548.1L1091.9 552.3L1092.6 556.5L1093.2 560.7L1093.8 564.9L1094.4 569.1L1095.0 573.4L1095.5 577.6L1096.1 581.9L1096.6 586.2L1097.0 590.4L1097.5 594.7L1097.9 598.9L1098.3 603.2L1098.6 607.4L1099.0 611.5L1099.3 615.7L1099.5 619.8L1099.8 623.9L1100.0 628.0L1100.2 631.9L1100.4 635.8L1100.5 639.7L1100.6 643.5L1100.7 647.2L1100.8 651.0L1100.8 654.7L1100.8 658.4L1100.8 662.1L1100.7 665.9L1100.7 669.6L1100.6 673.4L1100.5 677.3L1100.3 681.2L1100.2 685.1L1100.0 689.2L1099.8 693.3L1099.6 697.5L1099.4 701.7L1099.2 705.9L1098.9 710.2L1098.6 714.5L1098.3 718.8L1098.0 723.1L1097.6 727.4L1097.3 731.7L1096.8 736.0L1096.4 740.3L1095.9 744.6L1095.4 748.9L1094.8 753.1L1094.2 757.3L1093.5 761.6L1092.8 765.9L1092.1 770.2L1091.2 774.6L1090.4 779.1L1089.5 783.5L1088.6 788.0L1087.6 792.4L1086.6 796.9L1085.6 801.3L1084.6 805.7L1083.6 810.0L1082.6 814.3L1081.5 818.5L1080.5 822.6L1079.5 826.7L1078.5 830.6L1077.6 834.5L1076.6 838.3L1075.6 842.0L1074.6 845.7L1073.7 849.3L1072.7 852.8L1071.7 856.3L1070.7 859.8L1069.7 863.2L1068.6 866.5L1067.6 869.8L1066.5 873.1L1065.4 876.3L1064.3 879.6L1063.1 882.7L1061.9 885.9L1060.7 889.1L1059.4 892.3L1058.1 895.4L1056.8 898.5L1055.4 901.6L1054.1 904.7L1052.7 907.7L1051.3 910.7L1049.8 913.7L1048.4 916.6L1047.0 919.5L1045.5 922.3L1044.1 925.0L1042.7 927.7L1041.2 930.3L1039.8 932.8L1038.4 935.3L1036.9 937.8L1035.5 940.3L1034.0 942.6L1032.5 945.0L1031.0 947.3L1029.5 949.5L1028.0 951.7L1026.5 953.8L1025.1 955.8L1023.7 957.7L1022.3 959.5L1020.9 961.2L1019.6 962.8L1018.4 964.2L1017.3 965.4L1016.3 966.5L1015.3 967.5L1014.4 968.4L1013.5 969.2L1012.6 969.9L1011.7 970.6L1010.8 971.2L1010.0 971.8L1009.0 972.4L1008.1 973.0L1007.1 973.6L1006.0 974.2L1004.9 974.8L1003.6 975.5L1002.4 976.2L1001.3 976.8L1000.2 977.3L999.2 977.8L998.2 978.3L997.3 978.7L996.4 979.1L995.5 979.4L994.7 979.8L993.9 980.0L993.1 980.3L992.3 980.5L991.6 980.6L990.9 980.8L990.2 980.9L989.5 981.0L988.8 981.0L988.0 981.1L987.2 981.1L986.5 981.1L985.7 981.0L984.9 981.0L984.0 980.9L983.2 980.8L982.2 980.6L981.3 980.4L980.3 980.2L979.2 979.9L978.0 979.6L976.9 979.3L975.6 978.9L974.3 978.5L972.9 978.0L971.5 977.5L970.1 977.0L968.7 976.4L967.2 975.8L965.6 975.1L964.1 974.5L962.5 973.7L960.9 973.0L959.2 972.2L957.6 971.3L955.9 970.5L954.2 969.5L952.5 968.6L950.8 967.6L949.1 966.6L947.3 965.6L945.5 964.5L943.7 963.4L941.8 962.2L940.0 961.0L938.1 959.8L936.3 958.6L934.5 957.4L932.6 956.1L930.8 954.8L929.0 953.5L927.2 952.1L925.3 950.7L923.5 949.3L921.7 947.8L919.8 946.2L918.0 944.6L916.0 942.8L914.0 940.9L911.9 939.0L909.8 937.0L907.7 935.0L905.6 933.0L903.5 930.9L901.4 928.7L899.4 926.6L897.4 924.4L895.4 922.2L893.5 920.0L891.6 917.8L889.8 915.7L888.1 913.5L886.5 911.3L885.0 909.2L883.4 907.0L881.9 904.7L880.5 902.4L879.1 900.0L877.6 897.6L876.3 895.2L874.9 892.7L873.5 890.2L872.2 887.6L870.9 885.0L869.6 882.3L868.2 879.6L866.9 876.9L865.6 874.1L864.3 871.3L863.0 868.6L861.8 865.9L860.6 863.1L859.3 860.3L858.1 857.5L857.0 854.6L855.8 851.7L854.6 848.8L853.5 845.8L852.4 842.9L851.3 839.9L850.2 837.0L849.1 834.0L848.1 831.0L847.0 828.1L846.0 825.2L845.1 822.3L844.1 819.5L843.2 816.6L842.3 813.8L841.5 810.9L840.6 808.0L839.8 805.1L839.0 802.1L838.1 799.2L837.3 796.2L836.5 793.2L835.7 790.2L834.9 787.2L834.0 784.2L833.2 781.2L832.3 778.1L831.5 775.1L830.6 772.1L829.8 769.1L828.9 766.1L828.1 763.1L827.3 760.1L826.4 757.1L825.6 754.2L824.8 751.2L824.0 748.2L823.2 745.3L822.4 742.4L821.7 739.4L820.9 736.5L820.2 733.6L819.5 730.8L818.8 727.9L818.1 725.0L817.4 722.1L816.8 719.2L816.1 716.3L815.5 713.4L814.8 710.6L814.2 707.7L813.6 704.9L813.0 702.0L812.4 699.2L811.9 696.3L811.3 693.5L810.8 690.6L810.2 687.7L809.7 684.8L809.2 682.0L808.7 679.1L808.3 676.3L807.8 673.5L807.4 670.7L807.0 667.9L806.5 665.1L806.1 662.3L805.7 659.4L805.3 656.5L804.9 653.5L804.5 650.5L804.1 647.4L803.7 644.3L803.3 641.0L802.9 637.7L802.4 634.3L802.0 630.9L801.6 627.3L801.1 623.7L800.7 620.0L800.3 616.3L799.8 612.5L799.4 608.7L798.9 604.9L798.5 601.0L798.1 597.1L797.6 593.3L797.2 589.4L796.8 585.5L796.3 581.7L795.9 577.9L795.4 574.1L794.9 570.3L794.4 566.6L793.9 563.0L793.4 559.4L792.9 555.9L792.4 552.4L792.0 548.9L791.5 545.3L791.1 541.8L790.6 538.2L790.2 534.5L789.9 530.8L789.5 527.0L789.2 523.1L789.0 518.9L788.7 514.6L788.5 510.2L788.3 505.6L788.1 500.9L787.9 496.2L787.8 491.4L787.7 486.5L787.6 481.6L787.5 476.6L787.5 471.5L787.4 466.5L787.5 461.3L787.5 456.2L787.6 451.1L787.8 445.9L788.0 440.7L788.2 435.4L788.5 430.0L788.8 424.3L789.2 418.6L789.6 412.7L790.0 406.8L790.4 400.9L790.9 395.0L791.5 389.2L792.0 383.5L792.6 377.8L793.2 372.4L793.8 367.1L794.4 362.1L795.1 357.3L795.8 352.8L796.5 348.6L797.2 344.6L798.0 340.8L798.7 337.1L799.5 333.5L800.4 330.1L801.2 326.9L802.1 323.7L803.0 320.6L804.0 317.6L804.9 314.6L805.9 311.7L806.9 308.8L807.9 305.9L808.9 303.0L809.9 300.2L810.9 297.5L811.9 295.0L812.9 292.5L813.9 290.2L814.9 287.9L815.9 285.6L817.0 283.5L818.0 281.4L819.1 279.3L820.2 277.3L821.3 275.3L822.4 273.4L823.6 271.5L824.7 269.6L825.9 267.7L827.2 265.7L828.6 263.5L829.9 261.3L831.1 259.3L832.2 257.4L833.2 255.7L834.1 254.2L835.0 252.9L835.8 251.7L836.6 250.7L837.3 249.8L838.1 248.9L838.9 248.1L839.9 247.3L841.0 246.5L842.2 245.6L843.8 244.7L845.8 243.6L848.2 242.4L850.8 241.2L853.6 240.0L856.6 238.8L859.8 237.6L863.0 236.4L866.3 235.3L869.7 234.3L873.1 233.3L876.5 232.5L879.9 231.7L883.1 231.1L886.3 230.6L889.3 230.2Z" fill="none" stroke="#505050" stroke-width="10" opacity="0.15" filter="url(#fb5)"/><path d="M891.6 221.0L894.8 220.8L898.2 220.8L901.6 220.9L905.1 221.0L908.6 221.3L912.1 221.7L915.6 222.1L919.1 222.7L922.5 223.3L925.9 224.1L929.3 224.9L932.5 225.8L935.6 226.8L938.6 227.9L941.5 229.0L944.2 230.2L946.7 231.4L949.1 232.7L951.4 234.2L953.6 235.8L955.8 237.5L958.0 239.3L960.1 241.3L962.3 243.3L964.4 245.4L966.5 247.6L968.5 249.9L970.7 252.2L972.8 254.6L974.9 257.1L977.1 259.5L979.3 262.0L981.4 264.3L983.4 266.7L985.4 269.2L987.4 271.7L989.3 274.2L991.3 276.8L993.2 279.4L995.1 282.1L997.0 284.8L998.9 287.6L1000.8 290.4L1002.7 293.2L1004.6 296.1L1006.6 299.0L1008.5 302.0L1010.5 304.9L1012.5 307.9L1014.4 311.0L1016.4 314.0L1018.4 317.0L1020.3 320.0L1022.3 323.0L1024.2 326.1L1026.1 329.2L1028.1 332.4L1030.0 335.5L1031.8 338.8L1033.7 342.1L1035.5 345.4L1037.3 348.8L1039.1 352.3L1040.9 355.9L1042.7 359.6L1044.4 363.4L1046.2 367.4L1047.9 371.4L1049.6 375.5L1051.3 379.7L1053.1 383.9L1054.7 388.2L1056.4 392.5L1058.1 396.9L1059.7 401.3L1061.3 405.6L1062.9 410.0L1064.5 414.4L1066.0 418.7L1067.5 423.0L1069.0 427.2L1070.4 431.5L1071.9 435.7L1073.3 440.0L1074.7 444.3L1076.0 448.5L1077.4 452.8L1078.7 457.1L1080.0 461.3L1081.3 465.6L1082.5 469.9L1083.7 474.2L1084.9 478.4L1086.1 482.7L1087.2 487.0L1088.3 491.2L1089.3 495.5L1090.4 499.7L1091.4 504.0L1092.4 508.3L1093.3 512.5L1094.3 516.8L1095.2 521.0L1096.1 525.3L1096.9 529.5L1097.7 533.8L1098.5 538.1L1099.3 542.3L1100.0 546.6L1100.8 550.8L1101.4 555.1L1102.1 559.4L1102.7 563.6L1103.3 567.9L1103.9 572.2L1104.5 576.5L1105.0 580.8L1105.5 585.1L1106.0 589.5L1106.4 593.8L1106.8 598.1L1107.2 602.4L1107.6 606.6L1107.9 610.9L1108.2 615.1L1108.5 619.2L1108.8 623.4L1109.0 627.5L1109.2 631.5L1109.4 635.5L1109.5 639.4L1109.6 643.2L1109.7 647.1L1109.8 650.9L1109.8 654.6L1109.8 658.4L1109.8 662.2L1109.7 666.0L1109.7 669.8L1109.6 673.7L1109.5 677.6L1109.3 681.5L1109.2 685.5L1109.0 689.6L1108.8 693.8L1108.6 698.0L1108.4 702.2L1108.1 706.5L1107.9 710.8L1107.6 715.1L1107.3 719.4L1107.0 723.8L1106.6 728.2L1106.2 732.5L1105.8 736.9L1105.3 741.3L1104.8 745.7L1104.3 750.0L1103.7 754.4L1103.1 758.7L1102.4 763.0L1101.7 767.4L1100.9 771.8L1100.1 776.3L1099.2 780.8L1098.3 785.3L1097.4 789.8L1096.4 794.3L1095.4 798.8L1094.4 803.3L1093.4 807.7L1092.3 812.1L1091.3 816.4L1090.3 820.6L1089.3 824.8L1088.3 828.8L1087.3 832.8L1086.3 836.7L1085.3 840.5L1084.3 844.3L1083.3 848.0L1082.4 851.7L1081.4 855.3L1080.4 858.8L1079.3 862.3L1078.3 865.8L1077.2 869.2L1076.2 872.6L1075.1 876.0L1073.9 879.3L1072.8 882.6L1071.6 885.9L1070.3 889.1L1069.1 892.4L1067.8 895.7L1066.4 898.9L1065.1 902.1L1063.7 905.3L1062.3 908.4L1060.8 911.5L1059.4 914.6L1057.9 917.6L1056.5 920.6L1055.0 923.5L1053.5 926.4L1052.1 929.2L1050.6 932.0L1049.1 934.6L1047.7 937.3L1046.2 939.9L1044.7 942.4L1043.1 945.0L1041.6 947.4L1040.0 949.9L1038.5 952.3L1036.9 954.6L1035.4 956.8L1033.8 959.0L1032.3 961.1L1030.8 963.1L1029.4 965.0L1027.9 966.8L1026.5 968.5L1025.2 970.1L1023.9 971.5L1022.7 972.8L1021.6 974.0L1020.4 975.0L1019.3 976.0L1018.2 976.9L1017.1 977.7L1016.0 978.5L1015.0 979.3L1013.9 980.0L1012.8 980.7L1011.6 981.4L1010.4 982.0L1009.2 982.7L1008.0 983.4L1006.7 984.1L1005.5 984.7L1004.3 985.4L1003.2 985.9L1002.0 986.5L1000.9 987.0L999.8 987.4L998.7 987.9L997.7 988.3L996.6 988.6L995.6 988.9L994.5 989.2L993.5 989.4L992.5 989.6L991.4 989.8L990.4 989.9L989.4 990.0L988.3 990.1L987.3 990.1L986.2 990.1L985.1 990.0L984.0 989.9L982.9 989.8L981.8 989.7L980.6 989.5L979.4 989.2L978.2 989.0L976.9 988.6L975.6 988.3L974.3 987.9L972.9 987.5L971.4 987.0L970.0 986.5L968.4 986.0L966.9 985.4L965.3 984.8L963.7 984.1L962.1 983.4L960.4 982.7L958.7 981.9L957.0 981.1L955.2 980.2L953.5 979.3L951.7 978.4L949.9 977.5L948.1 976.5L946.3 975.4L944.5 974.4L942.7 973.3L940.8 972.2L938.9 971.0L937.0 969.8L935.1 968.6L933.2 967.4L931.3 966.1L929.4 964.8L927.5 963.5L925.6 962.1L923.6 960.7L921.7 959.3L919.8 957.8L917.8 956.3L915.9 954.7L913.9 953.0L912.0 951.3L910.0 949.5L907.9 947.5L905.8 945.6L903.6 943.6L901.5 941.5L899.3 939.4L897.1 937.2L895.0 935.0L892.8 932.8L890.7 930.5L888.7 928.2L886.7 925.9L884.7 923.6L882.8 921.3L881.0 919.0L879.3 916.7L877.6 914.3L876.0 912.0L874.4 909.6L872.8 907.1L871.3 904.6L869.8 902.1L868.4 899.6L867.0 897.0L865.6 894.3L864.2 891.7L862.8 889.0L861.5 886.3L860.1 883.5L858.8 880.8L857.5 878.0L856.1 875.2L854.8 872.4L853.6 869.6L852.3 866.7L851.1 863.8L849.8 860.9L848.6 858.0L847.4 855.0L846.3 852.0L845.1 849.0L844.0 846.0L842.8 843.0L841.7 840.0L840.7 837.0L839.6 834.0L838.5 831.0L837.5 828.1L836.5 825.2L835.6 822.2L834.6 819.3L833.7 816.4L832.8 813.4L832.0 810.5L831.1 807.5L830.3 804.6L829.5 801.6L828.6 798.6L827.8 795.6L827.0 792.6L826.2 789.6L825.3 786.6L824.5 783.6L823.7 780.6L822.8 777.6L822.0 774.5L821.1 771.5L820.3 768.5L819.4 765.5L818.6 762.5L817.8 759.5L816.9 756.5L816.1 753.6L815.3 750.6L814.5 747.6L813.7 744.6L813.0 741.7L812.2 738.7L811.5 735.8L810.7 732.9L810.0 729.9L809.3 727.0L808.7 724.1L808.0 721.2L807.3 718.3L806.7 715.4L806.0 712.5L805.4 709.6L804.8 706.7L804.2 703.8L803.6 701.0L803.0 698.1L802.5 695.2L801.9 692.3L801.4 689.3L800.9 686.4L800.3 683.5L799.9 680.6L799.4 677.8L798.9 674.9L798.5 672.1L798.1 669.3L797.6 666.4L797.2 663.5L796.8 660.6L796.4 657.7L796.0 654.7L795.6 651.7L795.2 648.6L794.8 645.4L794.4 642.2L793.9 638.9L793.5 635.5L793.1 632.0L792.6 628.4L792.2 624.8L791.8 621.1L791.3 617.3L790.9 613.6L790.4 609.7L790.0 605.9L789.6 602.0L789.1 598.1L788.7 594.3L788.3 590.4L787.8 586.6L787.4 582.7L786.9 578.9L786.5 575.2L786.0 571.5L785.5 567.8L785.0 564.2L784.5 560.7L784.0 557.1L783.5 553.6L783.0 550.1L782.6 546.5L782.1 542.9L781.7 539.2L781.3 535.5L780.9 531.7L780.6 527.7L780.3 523.7L780.0 519.5L779.7 515.1L779.5 510.6L779.3 506.0L779.1 501.3L778.9 496.5L778.8 491.7L778.7 486.7L778.6 481.7L778.5 476.7L778.5 471.6L778.4 466.4L778.5 461.3L778.5 456.1L778.7 450.8L778.8 445.6L779.0 440.4L779.2 435.0L779.5 429.5L779.8 423.8L780.2 418.0L780.6 412.1L781.0 406.2L781.5 400.2L782.0 394.3L782.5 388.4L783.0 382.6L783.6 376.9L784.2 371.4L784.9 366.0L785.5 360.9L786.2 356.0L786.9 351.4L787.6 347.1L788.4 342.9L789.1 338.9L790.0 335.1L790.8 331.5L791.7 327.9L792.6 324.5L793.5 321.2L794.4 318.0L795.4 314.9L796.3 311.8L797.3 308.8L798.3 305.8L799.4 302.9L800.4 300.0L801.5 297.1L802.5 294.3L803.5 291.6L804.6 289.1L805.6 286.6L806.7 284.1L807.8 281.8L808.9 279.5L810.0 277.3L811.1 275.1L812.3 273.0L813.5 270.9L814.6 268.9L815.8 266.8L817.1 264.8L818.3 262.9L819.6 260.8L820.9 258.7L822.2 256.7L823.3 254.7L824.4 252.8L825.5 251.1L826.5 249.4L827.5 247.9L828.5 246.5L829.5 245.1L830.6 243.8L831.7 242.6L832.9 241.4L834.2 240.3L835.7 239.2L837.4 238.0L839.4 236.8L841.7 235.6L844.3 234.3L847.1 233.0L850.1 231.7L853.3 230.4L856.6 229.2L860.1 227.9L863.6 226.8L867.2 225.7L870.8 224.7L874.4 223.7L878.0 222.9L881.5 222.2L885.0 221.7L888.4 221.3Z" fill="none" stroke="#a4a4a4" stroke-width="22" filter="url(#fb5)" opacity="0.6"/><path d="M891.6 221.0L894.8 220.8L898.2 220.8L901.6 220.9L905.1 221.0L908.6 221.3L912.1 221.7L915.6 222.1L919.1 222.7L922.5 223.3L925.9 224.1L929.3 224.9L932.5 225.8L935.6 226.8L938.6 227.9L941.5 229.0L944.2 230.2L946.7 231.4L949.1 232.7L951.4 234.2L953.6 235.8L955.8 237.5L958.0 239.3L960.1 241.3L962.3 243.3L964.4 245.4L966.5 247.6L968.5 249.9L970.7 252.2L972.8 254.6L974.9 257.1L977.1 259.5L979.3 262.0L981.4 264.3L983.4 266.7L985.4 269.2L987.4 271.7L989.3 274.2L991.3 276.8L993.2 279.4L995.1 282.1L997.0 284.8L998.9 287.6L1000.8 290.4L1002.7 293.2L1004.6 296.1L1006.6 299.0L1008.5 302.0L1010.5 304.9L1012.5 307.9L1014.4 311.0L1016.4 314.0L1018.4 317.0L1020.3 320.0L1022.3 323.0L1024.2 326.1L1026.1 329.2L1028.1 332.4L1030.0 335.5L1031.8 338.8L1033.7 342.1L1035.5 345.4L1037.3 348.8L1039.1 352.3L1040.9 355.9L1042.7 359.6L1044.4 363.4L1046.2 367.4L1047.9 371.4L1049.6 375.5L1051.3 379.7L1053.1 383.9L1054.7 388.2L1056.4 392.5L1058.1 396.9L1059.7 401.3L1061.3 405.6L1062.9 410.0L1064.5 414.4L1066.0 418.7L1067.5 423.0L1069.0 427.2L1070.4 431.5L1071.9 435.7L1073.3 440.0L1074.7 444.3L1076.0 448.5L1077.4 452.8L1078.7 457.1L1080.0 461.3L1081.3 465.6L1082.5 469.9L1083.7 474.2L1084.9 478.4L1086.1 482.7L1087.2 487.0L1088.3 491.2L1089.3 495.5L1090.4 499.7L1091.4 504.0L1092.4 508.3L1093.3 512.5L1094.3 516.8L1095.2 521.0L1096.1 525.3L1096.9 529.5L1097.7 533.8L1098.5 538.1L1099.3 542.3L1100.0 546.6L1100.8 550.8L1101.4 555.1L1102.1 559.4L1102.7 563.6L1103.3 567.9L1103.9 572.2L1104.5 576.5L1105.0 580.8L1105.5 585.1L1106.0 589.5L1106.4 593.8L1106.8 598.1L1107.2 602.4L1107.6 606.6L1107.9 610.9L1108.2 615.1L1108.5 619.2L1108.8 623.4L1109.0 627.5L1109.2 631.5L1109.4 635.5L1109.5 639.4L1109.6 643.2L1109.7 647.1L1109.8 650.9L1109.8 654.6L1109.8 658.4L1109.8 662.2L1109.7 666.0L1109.7 669.8L1109.6 673.7L1109.5 677.6L1109.3 681.5L1109.2 685.5L1109.0 689.6L1108.8 693.8L1108.6 698.0L1108.4 702.2L1108.1 706.5L1107.9 710.8L1107.6 715.1L1107.3 719.4L1107.0 723.8L1106.6 728.2L1106.2 732.5L1105.8 736.9L1105.3 741.3L1104.8 745.7L1104.3 750.0L1103.7 754.4L1103.1 758.7L1102.4 763.0L1101.7 767.4L1100.9 771.8L1100.1 776.3L1099.2 780.8L1098.3 785.3L1097.4 789.8L1096.4 794.3L1095.4 798.8L1094.4 803.3L1093.4 807.7L1092.3 812.1L1091.3 816.4L1090.3 820.6L1089.3 824.8L1088.3 828.8L1087.3 832.8L1086.3 836.7L1085.3 840.5L1084.3 844.3L1083.3 848.0L1082.4 851.7L1081.4 855.3L1080.4 858.8L1079.3 862.3L1078.3 865.8L1077.2 869.2L1076.2 872.6L1075.1 876.0L1073.9 879.3L1072.8 882.6L1071.6 885.9L1070.3 889.1L1069.1 892.4L1067.8 895.7L1066.4 898.9L1065.1 902.1L1063.7 905.3L1062.3 908.4L1060.8 911.5L1059.4 914.6L1057.9 917.6L1056.5 920.6L1055.0 923.5L1053.5 926.4L1052.1 929.2L1050.6 932.0L1049.1 934.6L1047.7 937.3L1046.2 939.9L1044.7 942.4L1043.1 945.0L1041.6 947.4L1040.0 949.9L1038.5 952.3L1036.9 954.6L1035.4 956.8L1033.8 959.0L1032.3 961.1L1030.8 963.1L1029.4 965.0L1027.9 966.8L1026.5 968.5L1025.2 970.1L1023.9 971.5L1022.7 972.8L1021.6 974.0L1020.4 975.0L1019.3 976.0L1018.2 976.9L1017.1 977.7L1016.0 978.5L1015.0 979.3L1013.9 980.0L1012.8 980.7L1011.6 981.4L1010.4 982.0L1009.2 982.7L1008.0 983.4L1006.7 984.1L1005.5 984.7L1004.3 985.4L1003.2 985.9L1002.0 986.5L1000.9 987.0L999.8 987.4L998.7 987.9L997.7 988.3L996.6 988.6L995.6 988.9L994.5 989.2L993.5 989.4L992.5 989.6L991.4 989.8L990.4 989.9L989.4 990.0L988.3 990.1L987.3 990.1L986.2 990.1L985.1 990.0L984.0 989.9L982.9 989.8L981.8 989.7L980.6 989.5L979.4 989.2L978.2 989.0L976.9 988.6L975.6 988.3L974.3 987.9L972.9 987.5L971.4 987.0L970.0 986.5L968.4 986.0L966.9 985.4L965.3 984.8L963.7 984.1L962.1 983.4L960.4 982.7L958.7 981.9L957.0 981.1L955.2 980.2L953.5 979.3L951.7 978.4L949.9 977.5L948.1 976.5L946.3 975.4L944.5 974.4L942.7 973.3L940.8 972.2L938.9 971.0L937.0 969.8L935.1 968.6L933.2 967.4L931.3 966.1L929.4 964.8L927.5 963.5L925.6 962.1L923.6 960.7L921.7 959.3L919.8 957.8L917.8 956.3L915.9 954.7L913.9 953.0L912.0 951.3L910.0 949.5L907.9 947.5L905.8 945.6L903.6 943.6L901.5 941.5L899.3 939.4L897.1 937.2L895.0 935.0L892.8 932.8L890.7 930.5L888.7 928.2L886.7 925.9L884.7 923.6L882.8 921.3L881.0 919.0L879.3 916.7L877.6 914.3L876.0 912.0L874.4 909.6L872.8 907.1L871.3 904.6L869.8 902.1L868.4 899.6L867.0 897.0L865.6 894.3L864.2 891.7L862.8 889.0L861.5 886.3L860.1 883.5L858.8 880.8L857.5 878.0L856.1 875.2L854.8 872.4L853.6 869.6L852.3 866.7L851.1 863.8L849.8 860.9L848.6 858.0L847.4 855.0L846.3 852.0L845.1 849.0L844.0 846.0L842.8 843.0L841.7 840.0L840.7 837.0L839.6 834.0L838.5 831.0L837.5 828.1L836.5 825.2L835.6 822.2L834.6 819.3L833.7 816.4L832.8 813.4L832.0 810.5L831.1 807.5L830.3 804.6L829.5 801.6L828.6 798.6L827.8 795.6L827.0 792.6L826.2 789.6L825.3 786.6L824.5 783.6L823.7 780.6L822.8 777.6L822.0 774.5L821.1 771.5L820.3 768.5L819.4 765.5L818.6 762.5L817.8 759.5L816.9 756.5L816.1 753.6L815.3 750.6L814.5 747.6L813.7 744.6L813.0 741.7L812.2 738.7L811.5 735.8L810.7 732.9L810.0 729.9L809.3 727.0L808.7 724.1L808.0 721.2L807.3 718.3L806.7 715.4L806.0 712.5L805.4 709.6L804.8 706.7L804.2 703.8L803.6 701.0L803.0 698.1L802.5 695.2L801.9 692.3L801.4 689.3L800.9 686.4L800.3 683.5L799.9 680.6L799.4 677.8L798.9 674.9L798.5 672.1L798.1 669.3L797.6 666.4L797.2 663.5L796.8 660.6L796.4 657.7L796.0 654.7L795.6 651.7L795.2 648.6L794.8 645.4L794.4 642.2L793.9 638.9L793.5 635.5L793.1 632.0L792.6 628.4L792.2 624.8L791.8 621.1L791.3 617.3L790.9 613.6L790.4 609.7L790.0 605.9L789.6 602.0L789.1 598.1L788.7 594.3L788.3 590.4L787.8 586.6L787.4 582.7L786.9 578.9L786.5 575.2L786.0 571.5L785.5 567.8L785.0 564.2L784.5 560.7L784.0 557.1L783.5 553.6L783.0 550.1L782.6 546.5L782.1 542.9L781.7 539.2L781.3 535.5L780.9 531.7L780.6 527.7L780.3 523.7L780.0 519.5L779.7 515.1L779.5 510.6L779.3 506.0L779.1 501.3L778.9 496.5L778.8 491.7L778.7 486.7L778.6 481.7L778.5 476.7L778.5 471.6L778.4 466.4L778.5 461.3L778.5 456.1L778.7 450.8L778.8 445.6L779.0 440.4L779.2 435.0L779.5 429.5L779.8 423.8L780.2 418.0L780.6 412.1L781.0 406.2L781.5 400.2L782.0 394.3L782.5 388.4L783.0 382.6L783.6 376.9L784.2 371.4L784.9 366.0L785.5 360.9L786.2 356.0L786.9 351.4L787.6 347.1L788.4 342.9L789.1 338.9L790.0 335.1L790.8 331.5L791.7 327.9L792.6 324.5L793.5 321.2L794.4 318.0L795.4 314.9L796.3 311.8L797.3 308.8L798.3 305.8L799.4 302.9L800.4 300.0L801.5 297.1L802.5 294.3L803.5 291.6L804.6 289.1L805.6 286.6L806.7 284.1L807.8 281.8L808.9 279.5L810.0 277.3L811.1 275.1L812.3 273.0L813.5 270.9L814.6 268.9L815.8 266.8L817.1 264.8L818.3 262.9L819.6 260.8L820.9 258.7L822.2 256.7L823.3 254.7L824.4 252.8L825.5 251.1L826.5 249.4L827.5 247.9L828.5 246.5L829.5 245.1L830.6 243.8L831.7 242.6L832.9 241.4L834.2 240.3L835.7 239.2L837.4 238.0L839.4 236.8L841.7 235.6L844.3 234.3L847.1 233.0L850.1 231.7L853.3 230.4L856.6 229.2L860.1 227.9L863.6 226.8L867.2 225.7L870.8 224.7L874.4 223.7L878.0 222.9L881.5 222.2L885.0 221.7L888.4 221.3Z" fill="none" stroke="#b6b6b6" stroke-width="12" filter="url(#fb3)"/><g opacity="0.28" filter="url(#fb1)"><path d="M1057.7 382.1L1048.4 385.8" stroke="#707070" stroke-width="2.4"/><path d="M1059.4 386.4L1050.1 390.0" stroke="#707070" stroke-width="2.4"/><path d="M1062.7 395.1L1053.4 398.7" stroke="#707070" stroke-width="2.4"/><path d="M1064.4 399.5L1055.0 403.0" stroke="#707070" stroke-width="2.4"/><path d="M1067.6 408.3L1058.2 411.7" stroke="#707070" stroke-width="2.4"/><path d="M1069.2 412.7L1059.8 416.1" stroke="#707070" stroke-width="2.4"/><path d="M1070.7 417.0L1061.3 420.4" stroke="#707070" stroke-width="2.4"/><path d="M1073.7 425.6L1064.3 428.9" stroke="#707070" stroke-width="2.4"/><path d="M1075.2 429.9L1065.7 433.1" stroke="#707070" stroke-width="2.4"/><path d="M1078.0 438.4L1068.5 441.6" stroke="#707070" stroke-width="2.4"/><path d="M1079.4 442.7L1069.9 445.8" stroke="#707070" stroke-width="2.4"/><path d="M1082.2 451.3L1072.6 454.3" stroke="#707070" stroke-width="2.4"/><path d="M1083.5 455.6L1073.9 458.5" stroke="#707070" stroke-width="2.4"/><path d="M1086.1 464.2L1076.5 467.0" stroke="#707070" stroke-width="2.4"/><path d="M1087.3 468.5L1077.7 471.3" stroke="#707070" stroke-width="2.4"/><path d="M1089.7 477.1L1080.1 479.7" stroke="#707070" stroke-width="2.4"/><path d="M1090.9 481.4L1081.2 484.0" stroke="#707070" stroke-width="2.4"/><path d="M1092.0 485.7L1082.3 488.2" stroke="#707070" stroke-width="2.4"/><path d="M1094.2 494.3L1084.5 496.7" stroke="#707070" stroke-width="2.4"/><path d="M1095.2 498.6L1085.5 500.9" stroke="#707070" stroke-width="2.4"/><path d="M1097.3 507.1L1087.5 509.4" stroke="#707070" stroke-width="2.4"/><path d="M1098.2 511.4L1088.5 513.6" stroke="#707070" stroke-width="2.4"/><path d="M1100.1 520.0L1090.3 522.1" stroke="#707070" stroke-width="2.4"/><path d="M1101.0 524.3L1091.2 526.3" stroke="#707070" stroke-width="2.4"/><path d="M1102.6 532.9L1092.8 534.7" stroke="#707070" stroke-width="2.4"/><path d="M1103.4 537.2L1093.6 539.0" stroke="#707070" stroke-width="2.4"/><path d="M1105.0 545.7L1095.1 547.4" stroke="#707070" stroke-width="2.4"/><path d="M1105.7 550.0L1095.8 551.7" stroke="#707070" stroke-width="2.4"/><path d="M1107.0 558.6L1097.2 560.1" stroke="#707070" stroke-width="2.4"/><path d="M1107.7 562.9L1097.8 564.3" stroke="#707070" stroke-width="2.4"/><path d="M1108.9 571.5L1099.0 572.9" stroke="#707070" stroke-width="2.4"/><path d="M1109.4 575.9L1099.5 577.1" stroke="#707070" stroke-width="2.4"/><path d="M1110.5 584.6L1100.5 585.7" stroke="#707070" stroke-width="2.4"/><path d="M1110.9 588.9L1101.0 590.0" stroke="#707070" stroke-width="2.4"/><path d="M1111.8 597.6L1101.9 598.5" stroke="#707070" stroke-width="2.4"/><path d="M1112.2 601.9L1102.2 602.8" stroke="#707070" stroke-width="2.4"/><path d="M1112.9 610.5L1102.9 611.2" stroke="#707070" stroke-width="2.4"/><path d="M1113.2 614.7L1103.3 615.4" stroke="#707070" stroke-width="2.4"/><path d="M1113.8 623.1L1103.8 623.7" stroke="#707070" stroke-width="2.4"/><path d="M1114.2 631.3L1104.2 631.7" stroke="#707070" stroke-width="2.4"/><path d="M1114.4 635.3L1104.4 635.7" stroke="#707070" stroke-width="2.4"/><path d="M1114.6 643.1L1104.6 643.4" stroke="#707070" stroke-width="2.4"/><path d="M1114.8 650.8L1104.8 650.9" stroke="#707070" stroke-width="2.4"/><path d="M1114.8 654.6L1104.8 654.7" stroke="#707070" stroke-width="2.4"/><path d="M1114.8 662.2L1104.8 662.2" stroke="#707070" stroke-width="2.4"/><path d="M1114.7 669.9L1104.7 669.7" stroke="#707070" stroke-width="2.4"/><path d="M1114.5 677.7L1104.5 677.4" stroke="#707070" stroke-width="2.4"/><path d="M1114.3 681.7L1104.3 681.3" stroke="#707070" stroke-width="2.4"/><path d="M1114.0 689.8L1104.0 689.4" stroke="#707070" stroke-width="2.4"/><path d="M1113.8 694.0L1103.8 693.5" stroke="#707070" stroke-width="2.4"/><path d="M1113.4 702.5L1103.4 701.9" stroke="#707070" stroke-width="2.4"/><path d="M1113.1 706.8L1103.2 706.2" stroke="#707070" stroke-width="2.4"/><path d="M1112.6 715.4L1102.6 714.7" stroke="#707070" stroke-width="2.4"/><path d="M1112.3 719.8L1102.3 719.1" stroke="#707070" stroke-width="2.4"/><path d="M1111.6 728.6L1101.6 727.7" stroke="#707070" stroke-width="2.4"/><path d="M1111.2 733.0L1101.2 732.1" stroke="#707070" stroke-width="2.4"/><path d="M1110.3 741.8L1100.4 740.7" stroke="#707070" stroke-width="2.4"/><path d="M1109.8 746.2L1099.9 745.1" stroke="#707070" stroke-width="2.4"/><path d="M1108.7 755.0L1098.8 753.7" stroke="#707070" stroke-width="2.4"/><path d="M1108.0 759.4L1098.2 757.9" stroke="#707070" stroke-width="2.4"/><path d="M1106.6 768.2L1096.8 766.6" stroke="#707070" stroke-width="2.4"/><path d="M1105.8 772.7L1096.0 770.9" stroke="#707070" stroke-width="2.4"/><path d="M1104.1 781.8L1094.3 779.8" stroke="#707070" stroke-width="2.4"/><path d="M1103.2 786.3L1093.4 784.3" stroke="#707070" stroke-width="2.4"/><path d="M1102.3 790.9L1092.5 788.8" stroke="#707070" stroke-width="2.4"/><path d="M1100.3 799.9L1090.5 797.7" stroke="#707070" stroke-width="2.4"/><path d="M1099.3 804.4L1089.5 802.2" stroke="#707070" stroke-width="2.4"/><path d="M1097.2 813.2L1087.5 810.9" stroke="#707070" stroke-width="2.4"/><path d="M1096.2 817.5L1086.5 815.2" stroke="#707070" stroke-width="2.4"/><path d="M1094.1 826.0L1084.4 823.6" stroke="#707070" stroke-width="2.4"/><path d="M1093.1 830.0L1083.4 827.6" stroke="#707070" stroke-width="2.4"/><path d="M1091.1 837.9L1081.4 835.5" stroke="#707070" stroke-width="2.4"/><path d="M1089.2 845.6L1079.5 843.0" stroke="#707070" stroke-width="2.4"/><path d="M1088.2 849.3L1078.5 846.7" stroke="#707070" stroke-width="2.4"/><path d="M1086.2 856.6L1076.5 853.9" stroke="#707070" stroke-width="2.4"/><path d="M1084.1 863.7L1074.5 860.9" stroke="#707070" stroke-width="2.4"/><path d="M1082.0 870.7L1072.5 867.7" stroke="#707070" stroke-width="2.4"/><path d="M1080.9 874.1L1071.4 871.1" stroke="#707070" stroke-width="2.4"/><path d="M1078.6 880.9L1069.2 877.6" stroke="#707070" stroke-width="2.4"/><path d="M1076.2 887.6L1066.9 884.1" stroke="#707070" stroke-width="2.4"/><path d="M1073.7 894.3L1064.4 890.6" stroke="#707070" stroke-width="2.4"/><path d="M1071.0 900.8L1061.8 897.0" stroke="#707070" stroke-width="2.4"/><path d="M1068.2 907.3L1059.1 903.2" stroke="#707070" stroke-width="2.4"/><path d="M1065.4 913.6L1056.3 909.4" stroke="#707070" stroke-width="2.4"/><path d="M1063.9 916.7L1054.9 912.4" stroke="#707070" stroke-width="2.4"/><path d="M1061.0 922.8L1052.0 918.4" stroke="#707070" stroke-width="2.4"/><path d="M1058.0 928.7L1049.1 924.1" stroke="#707070" stroke-width="2.4"/><path d="M1053.5 937.1L1044.7 932.2" stroke="#707070" stroke-width="2.4"/><path d="M1050.5 942.4L1041.8 937.3" stroke="#707070" stroke-width="2.4"/><path d="M1047.4 947.6L1038.9 942.3" stroke="#707070" stroke-width="2.4"/><path d="M1044.2 952.6L1035.8 947.2" stroke="#707070" stroke-width="2.4"/><path d="M1039.5 959.7L1031.3 954.0" stroke="#707070" stroke-width="2.4"/><path d="M1036.4 964.1L1028.3 958.1" stroke="#707070" stroke-width="2.4"/><path d="M1031.8 970.0L1024.0 963.7" stroke="#707070" stroke-width="2.4"/><path d="M1027.6 974.9L1020.3 968.1" stroke="#707070" stroke-width="2.4"/><path d="M1022.5 979.8L1016.1 972.2" stroke="#707070" stroke-width="2.4"/><path d="M1016.6 984.2L1011.2 975.8" stroke="#707070" stroke-width="2.4"/><path d="M1010.4 987.8L1005.6 979.0" stroke="#707070" stroke-width="2.4"/><path d="M1004.1 991.0L999.9 981.9" stroke="#707070" stroke-width="2.4"/><path d="M998.1 993.4L995.1 983.8" stroke="#707070" stroke-width="2.4"/><path d="M989.7 995.0L989.0 985.0" stroke="#707070" stroke-width="2.4"/><path d="M982.3 994.8L983.5 984.9" stroke="#707070" stroke-width="2.4"/><path d="M975.7 993.5L978.2 983.8" stroke="#707070" stroke-width="2.4"/><path d="M969.9 991.7L973.0 982.3" stroke="#707070" stroke-width="2.4"/><path d="M963.5 989.4L967.2 980.1" stroke="#707070" stroke-width="2.4"/><path d="M956.6 986.4L960.8 977.4" stroke="#707070" stroke-width="2.4"/><path d="M951.2 983.8L955.7 974.9" stroke="#707070" stroke-width="2.4"/><path d="M945.7 980.8L950.5 972.1" stroke="#707070" stroke-width="2.4"/><path d="M940.1 977.6L945.2 969.0" stroke="#707070" stroke-width="2.4"/><path d="M934.3 974.0L939.7 965.6" stroke="#707070" stroke-width="2.4"/><path d="M928.5 970.3L934.1 962.0" stroke="#707070" stroke-width="2.4"/><path d="M922.6 966.2L928.5 958.1" stroke="#707070" stroke-width="2.4"/><path d="M916.7 961.7L922.9 953.9" stroke="#707070" stroke-width="2.4"/><path d="M912.7 958.5L919.1 950.8" stroke="#707070" stroke-width="2.4"/><path d="M906.6 953.2L913.3 945.8" stroke="#707070" stroke-width="2.4"/><path d="M902.3 949.2L909.2 941.9" stroke="#707070" stroke-width="2.4"/><path d="M898.0 945.1L904.9 937.9" stroke="#707070" stroke-width="2.4"/><path d="M893.6 940.7L900.7 933.7" stroke="#707070" stroke-width="2.4"/><path d="M889.2 936.2L896.5 929.3" stroke="#707070" stroke-width="2.4"/><path d="M884.9 931.5L892.4 924.9" stroke="#707070" stroke-width="2.4"/><path d="M878.9 924.4L886.7 918.2" stroke="#707070" stroke-width="2.4"/><path d="M875.2 919.6L883.3 913.7" stroke="#707070" stroke-width="2.4"/><path d="M871.8 914.8L880.1 909.2" stroke="#707070" stroke-width="2.4"/><path d="M868.6 909.8L877.1 904.5" stroke="#707070" stroke-width="2.4"/><path d="M864.0 902.0L872.8 897.1" stroke="#707070" stroke-width="2.4"/><path d="M861.2 896.7L870.0 892.0" stroke="#707070" stroke-width="2.4"/><path d="M858.4 891.2L867.3 886.8" stroke="#707070" stroke-width="2.4"/><path d="M855.6 885.7L864.6 881.4" stroke="#707070" stroke-width="2.4"/><path d="M853.0 880.1L862.0 875.8" stroke="#707070" stroke-width="2.4"/><path d="M850.3 874.5L859.4 870.3" stroke="#707070" stroke-width="2.4"/><path d="M847.7 868.7L856.9 864.7" stroke="#707070" stroke-width="2.4"/><path d="M845.2 862.8L854.4 859.0" stroke="#707070" stroke-width="2.4"/><path d="M842.8 856.9L852.1 853.2" stroke="#707070" stroke-width="2.4"/><path d="M840.4 850.8L849.8 847.3" stroke="#707070" stroke-width="2.4"/><path d="M838.2 844.8L847.5 841.3" stroke="#707070" stroke-width="2.4"/><path d="M835.9 838.7L845.4 835.3" stroke="#707070" stroke-width="2.4"/><path d="M832.8 829.7L842.2 826.5" stroke="#707070" stroke-width="2.4"/><path d="M830.8 823.8L840.3 820.7" stroke="#707070" stroke-width="2.4"/><path d="M829.0 817.8L838.5 814.9" stroke="#707070" stroke-width="2.4"/><path d="M827.2 811.9L836.8 809.1" stroke="#707070" stroke-width="2.4"/><path d="M825.5 805.9L835.1 803.2" stroke="#707070" stroke-width="2.4"/><path d="M823.8 799.9L833.5 797.3" stroke="#707070" stroke-width="2.4"/><path d="M822.2 793.9L831.8 791.3" stroke="#707070" stroke-width="2.4"/><path d="M820.5 787.9L830.2 785.3" stroke="#707070" stroke-width="2.4"/><path d="M818.9 781.9L828.5 779.2" stroke="#707070" stroke-width="2.4"/><path d="M817.2 775.9L826.8 773.2" stroke="#707070" stroke-width="2.4"/><path d="M815.5 769.9L825.1 767.2" stroke="#707070" stroke-width="2.4"/><path d="M812.9 760.9L822.6 758.2" stroke="#707070" stroke-width="2.4"/><path d="M811.3 754.9L820.9 752.2" stroke="#707070" stroke-width="2.4"/><path d="M809.7 748.9L819.3 746.3" stroke="#707070" stroke-width="2.4"/><path d="M808.1 742.9L817.8 740.4" stroke="#707070" stroke-width="2.4"/><path d="M806.6 737.0L816.3 734.6" stroke="#707070" stroke-width="2.4"/><path d="M805.2 731.1L814.9 728.8" stroke="#707070" stroke-width="2.4"/><path d="M803.8 725.2L813.5 723.0" stroke="#707070" stroke-width="2.4"/><path d="M801.8 716.5L811.6 714.3" stroke="#707070" stroke-width="2.4"/><path d="M800.5 710.7L810.3 708.6" stroke="#707070" stroke-width="2.4"/><path d="M799.3 704.8L809.1 702.8" stroke="#707070" stroke-width="2.4"/><path d="M798.1 699.0L808.0 697.1" stroke="#707070" stroke-width="2.4"/><path d="M797.0 693.2L806.8 691.3" stroke="#707070" stroke-width="2.4"/><path d="M795.4 684.4L805.3 682.7" stroke="#707070" stroke-width="2.4"/><path d="M794.4 678.6L804.3 677.0" stroke="#707070" stroke-width="2.4"/><path d="M793.5 672.9L803.4 671.4" stroke="#707070" stroke-width="2.4"/><path d="M792.7 667.1L802.6 665.7" stroke="#707070" stroke-width="2.4"/><path d="M791.5 658.4L801.4 657.0" stroke="#707070" stroke-width="2.4"/><path d="M790.6 652.3L800.6 651.0" stroke="#707070" stroke-width="2.4"/><path d="M789.8 646.1L799.7 644.8" stroke="#707070" stroke-width="2.4"/><path d="M789.0 639.5L798.9 638.2" stroke="#707070" stroke-width="2.4"/><path d="M788.1 632.6L798.0 631.4" stroke="#707070" stroke-width="2.4"/><path d="M787.7 629.0L797.6 627.8" stroke="#707070" stroke-width="2.4"/><path d="M786.8 621.7L796.7 620.5" stroke="#707070" stroke-width="2.4"/><path d="M785.9 614.1L795.8 613.0" stroke="#707070" stroke-width="2.4"/><path d="M785.5 610.3L795.4 609.2" stroke="#707070" stroke-width="2.4"/><path d="M784.6 602.6L794.5 601.5" stroke="#707070" stroke-width="2.4"/><path d="M783.7 594.8L793.7 593.7" stroke="#707070" stroke-width="2.4"/><path d="M783.3 591.0L793.2 589.8" stroke="#707070" stroke-width="2.4"/><path d="M782.4 583.3L792.3 582.2" stroke="#707070" stroke-width="2.4"/><path d="M781.5 575.8L791.4 574.6" stroke="#707070" stroke-width="2.4"/><path d="M780.6 568.5L790.5 567.1" stroke="#707070" stroke-width="2.4"/><path d="M780.1 564.9L790.0 563.5" stroke="#707070" stroke-width="2.4"/><path d="M779.1 557.8L789.0 556.4" stroke="#707070" stroke-width="2.4"/><path d="M778.1 550.7L788.0 549.4" stroke="#707070" stroke-width="2.4"/><path d="M777.2 543.5L787.1 542.3" stroke="#707070" stroke-width="2.4"/><path d="M776.3 536.0L786.3 535.0" stroke="#707070" stroke-width="2.4"/><path d="M775.9 532.1L785.9 531.2" stroke="#707070" stroke-width="2.4"/><path d="M775.3 524.0L785.2 523.3" stroke="#707070" stroke-width="2.4"/><path d="M775.0 519.8L785.0 519.2" stroke="#707070" stroke-width="2.4"/><path d="M774.5 510.8L784.5 510.4" stroke="#707070" stroke-width="2.4"/><path d="M774.3 506.2L784.3 505.8" stroke="#707070" stroke-width="2.4"/><path d="M773.9 496.7L783.9 496.3" stroke="#707070" stroke-width="2.4"/><path d="M773.8 491.8L783.8 491.5" stroke="#707070" stroke-width="2.4"/><path d="M773.7 486.8L783.7 486.6" stroke="#707070" stroke-width="2.4"/><path d="M773.5 476.7L783.5 476.6" stroke="#707070" stroke-width="2.4"/><path d="M773.5 471.6L783.5 471.6" stroke="#707070" stroke-width="2.4"/><path d="M773.4 466.4L783.4 466.4" stroke="#707070" stroke-width="2.4"/><path d="M773.5 461.2L783.5 461.3" stroke="#707070" stroke-width="2.4"/><path d="M773.7 450.7L783.6 451.0" stroke="#707070" stroke-width="2.4"/><path d="M773.8 445.4L783.8 445.8" stroke="#707070" stroke-width="2.4"/><path d="M774.0 440.2L784.0 440.6" stroke="#707070" stroke-width="2.4"/><path d="M774.2 434.8L784.2 435.3" stroke="#707070" stroke-width="2.4"/><path d="M774.5 429.2L784.5 429.7" stroke="#707070" stroke-width="2.4"/><path d="M774.8 423.5L784.8 424.1" stroke="#707070" stroke-width="2.4"/><path d="M775.6 411.8L785.6 412.4" stroke="#707070" stroke-width="2.4"/><path d="M776.0 405.8L786.0 406.5" stroke="#707070" stroke-width="2.4"/><path d="M776.5 399.8L786.5 400.6" stroke="#707070" stroke-width="2.4"/><path d="M777.0 393.8L786.9 394.7" stroke="#707070" stroke-width="2.4"/><path d="M777.5 387.9L787.5 388.8" stroke="#707070" stroke-width="2.4"/><path d="M778.1 382.1L788.0 383.1" stroke="#707070" stroke-width="2.4"/></g><mask id="capmask" maskUnits="userSpaceOnUse" x="578" y="94" width="701" height="961"><rect x="578" y="94" width="701" height="961" fill="url(#capg)"/></mask><linearGradient id="capg" gradientUnits="userSpaceOnUse" x1="0" y1="220" x2="0" y2="440"><stop offset="0" stop-color="#fff"/><stop offset="0.25" stop-color="#fff"/><stop offset="1" stop-color="#000"/></linearGradient><g mask="url(#capmask)"><path d="M891.9 226.0L895.0 225.8L898.2 225.8L901.4 225.9L904.8 226.0L908.1 226.3L911.5 226.6L914.9 227.1L918.2 227.6L921.5 228.2L924.8 228.9L928.0 229.7L931.1 230.6L934.0 231.5L936.9 232.5L939.6 233.6L942.1 234.7L944.3 235.8L946.5 237.0L948.6 238.4L950.6 239.8L952.7 241.4L954.7 243.1L956.7 244.9L958.8 246.9L960.8 248.9L962.8 251.0L964.9 253.3L966.9 255.6L969.0 257.9L971.2 260.4L973.3 262.8L975.5 265.3L977.6 267.6L979.5 269.9L981.5 272.3L983.4 274.7L985.3 277.2L987.2 279.8L989.1 282.3L991.0 285.0L992.9 287.7L994.8 290.4L996.7 293.2L998.6 296.0L1000.5 298.9L1002.4 301.8L1004.3 304.7L1006.3 307.7L1008.3 310.7L1010.3 313.7L1012.2 316.7L1014.2 319.7L1016.1 322.7L1018.1 325.7L1020.0 328.8L1021.9 331.8L1023.8 334.9L1025.6 338.1L1027.5 341.3L1029.3 344.5L1031.1 347.8L1032.9 351.1L1034.7 354.6L1036.4 358.1L1038.1 361.7L1039.9 365.5L1041.6 369.4L1043.3 373.3L1045.0 377.4L1046.7 381.6L1048.4 385.8L1050.1 390.0L1051.7 394.3L1053.4 398.7L1055.0 403.0L1056.6 407.4L1058.2 411.7L1059.8 416.1L1061.3 420.4L1062.8 424.6L1064.3 428.9L1065.7 433.1L1067.1 437.3L1068.5 441.6L1069.9 445.8L1071.3 450.0L1072.6 454.3L1073.9 458.5L1075.2 462.8L1076.5 467.0L1077.7 471.3L1078.9 475.5L1080.1 479.7L1081.2 484.0L1082.3 488.2L1083.4 492.4L1084.5 496.7L1085.5 500.9L1086.5 505.1L1087.5 509.4L1088.5 513.6L1089.4 517.8L1090.3 522.1L1091.2 526.3L1092.0 530.5L1092.8 534.7L1093.6 539.0L1094.4 543.2L1095.1 547.4L1095.8 551.7L1096.5 555.9L1097.2 560.1L1097.8 564.3L1098.4 568.6L1099.0 572.9L1099.5 577.1L1100.0 581.4L1100.5 585.7L1101.0 590.0L1101.4 594.3L1101.9 598.5L1102.2 602.8L1102.6 607.0L1102.9 611.2L1103.3 615.4L1103.5 619.6L1103.8 623.7L1104.0 627.7L1104.2 631.7L1104.4 635.7L1104.5 639.5L1104.6 643.4L1104.7 647.2L1104.8 650.9L1104.8 654.7L1104.8 658.4L1104.8 662.2L1104.7 665.9L1104.7 669.7L1104.6 673.5L1104.5 677.4L1104.3 681.3L1104.2 685.3L1104.0 689.4L1103.8 693.5L1103.6 697.7L1103.4 701.9L1103.2 706.2L1102.9 710.4L1102.6 714.7L1102.3 719.1L1102.0 723.4L1101.6 727.7L1101.2 732.1L1100.8 736.4L1100.4 740.7L1099.9 745.1L1099.3 749.4L1098.8 753.7L1098.2 757.9L1097.5 762.2L1096.8 766.6L1096.0 770.9L1095.2 775.4L1094.3 779.8L1093.4 784.3L1092.5 788.8L1091.5 793.3L1090.5 797.7L1089.5 802.2L1088.5 806.6L1087.5 810.9L1086.5 815.2L1085.4 819.4L1084.4 823.6L1083.4 827.6L1082.4 831.6L1081.4 835.5L1080.5 839.3L1079.5 843.0L1078.5 846.7L1077.5 850.4L1076.5 853.9L1075.5 857.4L1074.5 860.9L1073.5 864.3L1072.5 867.7L1071.4 871.1L1070.3 874.4L1069.2 877.6L1068.0 880.9L1066.9 884.1L1065.7 887.4L1064.4 890.6L1063.1 893.8L1061.8 897.0L1060.5 900.1L1059.1 903.2L1057.7 906.4L1056.3 909.4L1054.9 912.4L1053.4 915.4L1052.0 918.4L1050.5 921.3L1049.1 924.1L1047.6 926.9L1046.2 929.6L1044.7 932.2L1043.3 934.8L1041.8 937.3L1040.4 939.9L1038.9 942.3L1037.3 944.8L1035.8 947.2L1034.3 949.5L1032.8 951.8L1031.3 954.0L1029.8 956.1L1028.3 958.1L1026.8 960.1L1025.4 961.9L1024.0 963.7L1022.7 965.3L1021.4 966.8L1020.3 968.1L1019.2 969.3L1018.1 970.4L1017.1 971.3L1016.1 972.2L1015.1 973.0L1014.1 973.7L1013.2 974.4L1012.2 975.1L1011.2 975.8L1010.2 976.4L1009.1 977.0L1008.0 977.7L1006.8 978.3L1005.6 979.0L1004.3 979.7L1003.1 980.3L1002.0 980.9L1001.0 981.4L999.9 981.9L998.9 982.4L997.9 982.8L997.0 983.2L996.0 983.5L995.1 983.8L994.2 984.1L993.3 984.3L992.4 984.5L991.6 984.7L990.7 984.9L989.9 985.0L989.0 985.0L988.1 985.1L987.2 985.1L986.3 985.1L985.4 985.0L984.5 985.0L983.5 984.9L982.5 984.7L981.5 984.5L980.5 984.3L979.3 984.1L978.2 983.8L977.0 983.5L975.7 983.1L974.4 982.7L973.0 982.3L971.6 981.8L970.2 981.3L968.7 980.7L967.2 980.1L965.6 979.5L964.0 978.8L962.4 978.1L960.8 977.4L959.1 976.6L957.4 975.7L955.7 974.9L954.0 974.0L952.3 973.1L950.5 972.1L948.8 971.1L947.0 970.1L945.2 969.0L943.4 967.9L941.5 966.7L939.7 965.6L937.8 964.4L935.9 963.2L934.1 962.0L932.2 960.7L930.3 959.4L928.5 958.1L926.6 956.7L924.7 955.3L922.9 953.9L921.0 952.4L919.1 950.8L917.2 949.2L915.3 947.5L913.3 945.8L911.3 943.9L909.2 941.9L907.1 939.9L904.9 937.9L902.8 935.8L900.7 933.7L898.6 931.5L896.5 929.3L894.4 927.1L892.4 924.9L890.4 922.7L888.5 920.4L886.7 918.2L885.0 915.9L883.3 913.7L881.7 911.5L880.1 909.2L878.6 906.9L877.1 904.5L875.6 902.1L874.2 899.6L872.8 897.1L871.4 894.6L870.0 892.0L868.6 889.4L867.3 886.8L866.0 884.1L864.6 881.4L863.3 878.6L862.0 875.8L860.7 873.0L859.4 870.3L858.1 867.5L856.9 864.7L855.7 861.9L854.4 859.0L853.3 856.1L852.1 853.2L850.9 850.2L849.8 847.3L848.6 844.3L847.5 841.3L846.4 838.3L845.4 835.3L844.3 832.4L843.3 829.4L842.2 826.5L841.3 823.6L840.3 820.7L839.4 817.8L838.5 814.9L837.6 812.0L836.8 809.1L835.9 806.2L835.1 803.2L834.3 800.3L833.5 797.3L832.6 794.3L831.8 791.3L831.0 788.3L830.2 785.3L829.3 782.3L828.5 779.2L827.6 776.2L826.8 773.2L825.9 770.2L825.1 767.2L824.2 764.2L823.4 761.2L822.6 758.2L821.7 755.2L820.9 752.2L820.1 749.3L819.3 746.3L818.6 743.4L817.8 740.4L817.0 737.5L816.3 734.6L815.6 731.7L814.9 728.8L814.2 725.9L813.5 723.0L812.9 720.1L812.2 717.2L811.6 714.3L810.9 711.4L810.3 708.6L809.7 705.7L809.1 702.8L808.5 700.0L808.0 697.1L807.4 694.2L806.8 691.3L806.3 688.4L805.8 685.5L805.3 682.7L804.8 679.8L804.3 677.0L803.9 674.2L803.4 671.4L803.0 668.5L802.6 665.7L802.2 662.8L801.8 660.0L801.4 657.0L801.0 654.1L800.6 651.0L800.2 647.9L799.7 644.8L799.3 641.5L798.9 638.2L798.5 634.8L798.0 631.4L797.6 627.8L797.2 624.2L796.7 620.5L796.3 616.8L795.8 613.0L795.4 609.2L795.0 605.3L794.5 601.5L794.1 597.6L793.7 593.7L793.2 589.8L792.8 586.0L792.3 582.2L791.9 578.4L791.4 574.6L791.0 570.8L790.5 567.1L790.0 563.5L789.5 560.0L789.0 556.4L788.5 552.9L788.0 549.4L787.5 545.8L787.1 542.3L786.7 538.6L786.3 535.0L785.9 531.2L785.5 527.3L785.2 523.3L785.0 519.2L784.7 514.8L784.5 510.4L784.3 505.8L784.1 501.1L783.9 496.3L783.8 491.5L783.7 486.6L783.6 481.6L783.5 476.6L783.5 471.6L783.4 466.4L783.5 461.3L783.5 456.1L783.6 451.0L783.8 445.8L784.0 440.6L784.2 435.3L784.5 429.7L784.8 424.1L785.2 418.3L785.6 412.4L786.0 406.5L786.5 400.6L786.9 394.7L787.5 388.8L788.0 383.1L788.6 377.4L789.2 371.9L789.8 366.6L790.5 361.5L791.1 356.7L791.8 352.2L792.5 347.9L793.3 343.8L794.0 339.9L794.8 336.2L795.7 332.6L796.5 329.2L797.4 325.8L798.3 322.6L799.2 319.4L800.1 316.4L801.1 313.4L802.1 310.4L803.1 307.5L804.1 304.6L805.1 301.7L806.2 298.8L807.2 296.1L808.2 293.5L809.2 291.0L810.2 288.6L811.3 286.2L812.3 283.9L813.4 281.7L814.5 279.6L815.6 277.5L816.7 275.4L817.8 273.4L819.0 271.4L820.1 269.4L821.3 267.5L822.5 265.5L823.8 263.5L825.2 261.4L826.5 259.2L827.6 257.2L828.7 255.4L829.8 253.7L830.7 252.1L831.6 250.7L832.5 249.4L833.4 248.2L834.3 247.1L835.2 246.1L836.3 245.1L837.4 244.2L838.6 243.2L840.1 242.2L841.9 241.2L844.0 240.1L846.5 238.8L849.2 237.6L852.1 236.3L855.2 235.1L858.4 233.8L861.7 232.7L865.1 231.5L868.6 230.5L872.1 229.5L875.6 228.6L879.0 227.8L882.4 227.2L885.7 226.6L888.9 226.2Z" fill="none" stroke="#d2d2d2" stroke-width="28" filter="url(#fb3)" opacity="0.9"/><g opacity="0.6" filter="url(#fb1)"><circle cx="891.6" cy="222.0" r="3.6" fill="#6e6e6e"/><circle cx="901.6" cy="221.9" r="3.6" fill="#6e6e6e"/><circle cx="908.5" cy="222.3" r="3.6" fill="#6e6e6e"/><circle cx="918.9" cy="223.7" r="3.6" fill="#6e6e6e"/><circle cx="929.0" cy="225.9" r="3.6" fill="#6e6e6e"/><circle cx="938.3" cy="228.8" r="3.6" fill="#6e6e6e"/><circle cx="948.5" cy="233.6" r="3.6" fill="#6e6e6e"/><circle cx="957.3" cy="240.1" r="3.6" fill="#6e6e6e"/><circle cx="963.6" cy="246.1" r="3.6" fill="#6e6e6e"/><circle cx="969.9" cy="252.9" r="3.6" fill="#6e6e6e"/><circle cx="976.3" cy="260.2" r="3.6" fill="#6e6e6e"/><circle cx="982.6" cy="267.4" r="3.6" fill="#6e6e6e"/><circle cx="990.5" cy="277.4" r="3.6" fill="#6e6e6e"/><circle cx="996.2" cy="285.4" r="3.6" fill="#6e6e6e"/><circle cx="1001.9" cy="293.8" r="3.6" fill="#6e6e6e"/><circle cx="1005.7" cy="299.6" r="3.6" fill="#6e6e6e"/><circle cx="1011.6" cy="308.5" r="3.6" fill="#6e6e6e"/><circle cx="1017.5" cy="317.5" r="3.6" fill="#6e6e6e"/><circle cx="1023.4" cy="326.6" r="3.6" fill="#6e6e6e"/><circle cx="1029.1" cy="336.0" r="3.6" fill="#6e6e6e"/><circle cx="1032.8" cy="342.5" r="3.6" fill="#6e6e6e"/><circle cx="1038.2" cy="352.8" r="3.6" fill="#6e6e6e"/><circle cx="1041.7" cy="360.0" r="3.6" fill="#6e6e6e"/><circle cx="1047.0" cy="371.8" r="3.6" fill="#6e6e6e"/><circle cx="1050.4" cy="380.1" r="3.6" fill="#6e6e6e"/><circle cx="1053.8" cy="388.6" r="3.6" fill="#6e6e6e"/><circle cx="1057.1" cy="397.2" r="3.6" fill="#6e6e6e"/><circle cx="1060.4" cy="406.0" r="3.6" fill="#6e6e6e"/><circle cx="1063.5" cy="414.7" r="3.6" fill="#6e6e6e"/><circle cx="781.6" cy="412.2" r="3.6" fill="#6e6e6e"/><circle cx="782.0" cy="406.2" r="3.6" fill="#6e6e6e"/><circle cx="783.0" cy="394.4" r="3.6" fill="#6e6e6e"/><circle cx="784.0" cy="382.7" r="3.6" fill="#6e6e6e"/><circle cx="785.2" cy="371.5" r="3.6" fill="#6e6e6e"/><circle cx="786.5" cy="361.0" r="3.6" fill="#6e6e6e"/><circle cx="787.9" cy="351.6" r="3.6" fill="#6e6e6e"/><circle cx="789.3" cy="343.1" r="3.6" fill="#6e6e6e"/><circle cx="791.8" cy="331.7" r="3.6" fill="#6e6e6e"/><circle cx="794.4" cy="321.5" r="3.6" fill="#6e6e6e"/><circle cx="797.3" cy="312.1" r="3.6" fill="#6e6e6e"/><circle cx="800.3" cy="303.2" r="3.6" fill="#6e6e6e"/><circle cx="803.4" cy="294.7" r="3.6" fill="#6e6e6e"/><circle cx="807.6" cy="284.6" r="3.6" fill="#6e6e6e"/><circle cx="812.0" cy="275.6" r="3.6" fill="#6e6e6e"/><circle cx="816.7" cy="267.3" r="3.6" fill="#6e6e6e"/><circle cx="821.8" cy="259.3" r="3.6" fill="#6e6e6e"/><circle cx="827.3" cy="250.0" r="3.6" fill="#6e6e6e"/><circle cx="833.6" cy="242.2" r="3.6" fill="#6e6e6e"/><circle cx="842.2" cy="236.5" r="3.6" fill="#6e6e6e"/><circle cx="850.5" cy="232.6" r="3.6" fill="#6e6e6e"/><circle cx="860.4" cy="228.9" r="3.6" fill="#6e6e6e"/><circle cx="867.5" cy="226.6" r="3.6" fill="#6e6e6e"/><circle cx="878.2" cy="223.9" r="3.6" fill="#6e6e6e"/><circle cx="895.2" cy="232.8" r="3.6" fill="#6e6e6e"/><circle cx="904.3" cy="233.0" r="3.6" fill="#6e6e6e"/><circle cx="917.0" cy="234.5" r="3.6" fill="#6e6e6e"/><circle cx="926.2" cy="236.5" r="3.6" fill="#6e6e6e"/><circle cx="934.5" cy="239.1" r="3.6" fill="#6e6e6e"/><circle cx="944.7" cy="244.2" r="3.6" fill="#6e6e6e"/><circle cx="952.0" cy="250.1" r="3.6" fill="#6e6e6e"/><circle cx="959.7" cy="258.0" r="3.6" fill="#6e6e6e"/><circle cx="965.9" cy="265.0" r="3.6" fill="#6e6e6e"/><circle cx="972.3" cy="272.2" r="3.6" fill="#6e6e6e"/><circle cx="977.9" cy="279.1" r="3.6" fill="#6e6e6e"/><circle cx="985.3" cy="289.0" r="3.6" fill="#6e6e6e"/><circle cx="990.9" cy="297.1" r="3.6" fill="#6e6e6e"/><circle cx="994.6" cy="302.7" r="3.6" fill="#6e6e6e"/><circle cx="1000.4" cy="311.5" r="3.6" fill="#6e6e6e"/><circle cx="1006.4" cy="320.5" r="3.6" fill="#6e6e6e"/><circle cx="1012.2" cy="329.5" r="3.6" fill="#6e6e6e"/><circle cx="1017.8" cy="338.5" r="3.6" fill="#6e6e6e"/><circle cx="1021.4" cy="344.7" r="3.6" fill="#6e6e6e"/><circle cx="1026.7" cy="354.4" r="3.6" fill="#6e6e6e"/><circle cx="1031.8" cy="364.7" r="3.6" fill="#6e6e6e"/><circle cx="1035.2" cy="372.2" r="3.6" fill="#6e6e6e"/><circle cx="1038.5" cy="380.1" r="3.6" fill="#6e6e6e"/><circle cx="1043.6" cy="392.6" r="3.6" fill="#6e6e6e"/><circle cx="793.9" cy="395.3" r="3.6" fill="#6e6e6e"/><circle cx="795.0" cy="383.8" r="3.6" fill="#6e6e6e"/><circle cx="795.6" cy="378.2" r="3.6" fill="#6e6e6e"/><circle cx="796.8" cy="367.5" r="3.6" fill="#6e6e6e"/><circle cx="798.7" cy="353.3" r="3.6" fill="#6e6e6e"/><circle cx="800.1" cy="345.1" r="3.6" fill="#6e6e6e"/><circle cx="802.5" cy="334.2" r="3.6" fill="#6e6e6e"/><circle cx="805.0" cy="324.5" r="3.6" fill="#6e6e6e"/><circle cx="807.8" cy="315.5" r="3.6" fill="#6e6e6e"/><circle cx="810.7" cy="306.9" r="3.6" fill="#6e6e6e"/><circle cx="814.7" cy="296.1" r="3.6" fill="#6e6e6e"/><circle cx="818.6" cy="286.9" r="3.6" fill="#6e6e6e"/><circle cx="822.8" cy="278.8" r="3.6" fill="#6e6e6e"/><circle cx="828.4" cy="269.3" r="3.6" fill="#6e6e6e"/><circle cx="833.7" cy="260.8" r="3.6" fill="#6e6e6e"/><circle cx="838.9" cy="252.6" r="3.6" fill="#6e6e6e"/><circle cx="847.2" cy="246.3" r="3.6" fill="#6e6e6e"/><circle cx="854.8" cy="242.8" r="3.6" fill="#6e6e6e"/><circle cx="864.0" cy="239.3" r="3.6" fill="#6e6e6e"/><circle cx="873.9" cy="236.2" r="3.6" fill="#6e6e6e"/><circle cx="883.7" cy="234.0" r="3.6" fill="#6e6e6e"/></g></g><circle cx="1204" cy="456" r="2.6" fill="#fff" filter="url(#fb1)"/></svg>
<svg class="abs" style="left:578px;top:94px" width="701" height="961" viewBox="578 94 701 961"><circle cx="721.5" cy="107.5" r="2.1" fill="#700808" stroke="#d81212" stroke-width="1.5"/><circle cx="758.1" cy="110.2" r="2.3" fill="#700808" stroke="#d81212" stroke-width="1.5"/><circle cx="629.4" cy="136.0" r="1.6" fill="#700808" stroke="#d81212" stroke-width="1.5"/><circle cx="730.4" cy="134.1" r="1.6" fill="#700808" stroke="#d81212" stroke-width="1.5"/><circle cx="653.7" cy="155.3" r="1.6" fill="#700808" stroke="#d81212" stroke-width="1.5"/><circle cx="673.3" cy="155.3" r="1.6" fill="#700808" stroke="#d81212" stroke-width="1.5"/><circle cx="754.3" cy="155.3" r="1.6" fill="#700808" stroke="#d81212" stroke-width="1.5"/><circle cx="658.3" cy="171.5" r="2.1" fill="#700808" stroke="#d81212" stroke-width="1.5"/><circle cx="747.4" cy="173.4" r="1.6" fill="#700808" stroke="#d81212" stroke-width="1.5"/><circle cx="793.6" cy="171.5" r="1.6" fill="#700808" stroke="#d81212" stroke-width="1.5"/><circle cx="594.7" cy="208.1" r="2.3" fill="#700808" stroke="#d81212" stroke-width="1.5"/><circle cx="639.8" cy="202.7" r="2.3" fill="#700808" stroke="#d81212" stroke-width="1.5"/><circle cx="681.4" cy="216.2" r="1.6" fill="#700808" stroke="#d81212" stroke-width="1.5"/><circle cx="764.3" cy="201.6" r="1.6" fill="#700808" stroke="#d81212" stroke-width="1.5"/><circle cx="793.6" cy="212.3" r="1.6" fill="#700808" stroke="#d81212" stroke-width="1.5"/><circle cx="649.4" cy="238.6" r="1.6" fill="#700808" stroke="#d81212" stroke-width="1.5"/><circle cx="717.3" cy="239.3" r="1.6" fill="#700808" stroke="#d81212" stroke-width="1.5"/><circle cx="751.6" cy="232.4" r="1.6" fill="#700808" stroke="#d81212" stroke-width="1.5"/><circle cx="734.6" cy="249.0" r="2.2" fill="#700808" stroke="#d81212" stroke-width="1.5"/><circle cx="689.5" cy="255.5" r="1.6" fill="#700808" stroke="#d81212" stroke-width="1.5"/><circle cx="605.1" cy="321.4" r="1.6" fill="#700808" stroke="#d81212" stroke-width="1.5"/><circle cx="759.3" cy="313.7" r="1.6" fill="#700808" stroke="#d81212" stroke-width="1.5"/><circle cx="710.3" cy="331.5" r="1.6" fill="#700808" stroke="#d81212" stroke-width="1.5"/><circle cx="741.2" cy="374.3" r="2.3" fill="#700808" stroke="#d81212" stroke-width="1.5"/><circle cx="807.5" cy="250.8" r="2.6" fill="none" stroke="#e81414" stroke-width="1.15"/><circle cx="806.4" cy="256.2" r="3.4" fill="none" stroke="#e81414" stroke-width="1.15"/><circle cx="803.2" cy="256.7" r="3" fill="none" stroke="#e81414" stroke-width="1.15"/><circle cx="804.0" cy="260.6" r="3" fill="none" stroke="#e81414" stroke-width="1.15"/><circle cx="806.0" cy="264.8" r="3" fill="none" stroke="#e81414" stroke-width="1.15"/><circle cx="801.7" cy="268.4" r="2.2" fill="none" stroke="#e81414" stroke-width="1.15"/><circle cx="804.9" cy="272.4" r="1.8" fill="none" stroke="#e81414" stroke-width="1.15"/><circle cx="799.4" cy="275.0" r="3.4" fill="none" stroke="#e81414" stroke-width="1.15"/><circle cx="807.4" cy="276.2" r="2.6" fill="none" stroke="#e81414" stroke-width="1.15"/><circle cx="806.4" cy="280.9" r="3" fill="none" stroke="#e81414" stroke-width="1.15"/><circle cx="808.9" cy="284.9" r="3" fill="none" stroke="#e81414" stroke-width="1.15"/><circle cx="803.8" cy="288.2" r="2.2" fill="none" stroke="#e81414" stroke-width="1.15"/><circle cx="796.0" cy="292.0" r="2.2" fill="none" stroke="#e81414" stroke-width="1.15"/><circle cx="798.2" cy="294.0" r="3" fill="none" stroke="#e81414" stroke-width="1.15"/><circle cx="807.5" cy="298.2" r="3" fill="none" stroke="#e81414" stroke-width="1.15"/><circle cx="799.2" cy="300.6" r="2.6" fill="none" stroke="#e81414" stroke-width="1.15"/><circle cx="799.1" cy="303.9" r="2.2" fill="none" stroke="#e81414" stroke-width="1.15"/><circle cx="803.8" cy="308.4" r="1.8" fill="none" stroke="#e81414" stroke-width="1.15"/><circle cx="809.8" cy="311.5" r="2.2" fill="none" stroke="#e81414" stroke-width="1.15"/><circle cx="796.0" cy="314.2" r="3.4" fill="none" stroke="#e81414" stroke-width="1.15"/><circle cx="800.7" cy="318.1" r="2.2" fill="none" stroke="#e81414" stroke-width="1.15"/><circle cx="809.7" cy="320.5" r="2.6" fill="none" stroke="#e81414" stroke-width="1.15"/><circle cx="788.7" cy="322.6" r="3" fill="none" stroke="#e81414" stroke-width="1.15"/><circle cx="805.3" cy="325.3" r="3" fill="none" stroke="#e81414" stroke-width="1.15"/><circle cx="785.8" cy="331.2" r="3" fill="none" stroke="#e81414" stroke-width="1.15"/><circle cx="806.8" cy="334.0" r="1.8" fill="none" stroke="#e81414" stroke-width="1.15"/><circle cx="803.8" cy="336.7" r="3" fill="none" stroke="#e81414" stroke-width="1.15"/><circle cx="792.1" cy="340.4" r="2.6" fill="none" stroke="#e81414" stroke-width="1.15"/><circle cx="810.0" cy="342.9" r="2.6" fill="none" stroke="#e81414" stroke-width="1.15"/><circle cx="785.3" cy="344.6" r="3.4" fill="none" stroke="#e81414" stroke-width="1.15"/><circle cx="787.1" cy="347.9" r="3" fill="none" stroke="#e81414" stroke-width="1.15"/><circle cx="788.4" cy="352.0" r="1.8" fill="none" stroke="#e81414" stroke-width="1.15"/><circle cx="789.8" cy="357.5" r="2.6" fill="none" stroke="#e81414" stroke-width="1.15"/><circle cx="806.8" cy="360.7" r="3" fill="none" stroke="#e81414" stroke-width="1.15"/><circle cx="805.9" cy="362.1" r="3" fill="none" stroke="#e81414" stroke-width="1.15"/><circle cx="796.9" cy="366.2" r="3.4" fill="none" stroke="#e81414" stroke-width="1.15"/><circle cx="809.1" cy="367.7" r="3.4" fill="none" stroke="#e81414" stroke-width="1.15"/><circle cx="797.7" cy="371.5" r="2.2" fill="none" stroke="#e81414" stroke-width="1.15"/><circle cx="790.5" cy="376.9" r="2.6" fill="none" stroke="#e81414" stroke-width="1.15"/><circle cx="794.1" cy="378.8" r="1.8" fill="none" stroke="#e81414" stroke-width="1.15"/><circle cx="809.5" cy="383.0" r="2.6" fill="none" stroke="#e81414" stroke-width="1.15"/><circle cx="796.1" cy="383.7" r="2.2" fill="none" stroke="#e81414" stroke-width="1.15"/><circle cx="796.3" cy="387.1" r="3" fill="none" stroke="#e81414" stroke-width="1.15"/><circle cx="806.9" cy="391.3" r="3.4" fill="none" stroke="#e81414" stroke-width="1.15"/><circle cx="799.9" cy="395.7" r="1.8" fill="none" stroke="#e81414" stroke-width="1.15"/><circle cx="808.2" cy="398.6" r="1.8" fill="none" stroke="#e81414" stroke-width="1.15"/><circle cx="780.0" cy="403.1" r="3" fill="none" stroke="#e81414" stroke-width="1.15"/><circle cx="794.0" cy="404.2" r="2.2" fill="none" stroke="#e81414" stroke-width="1.15"/><circle cx="781.9" cy="407.7" r="2.6" fill="none" stroke="#e81414" stroke-width="1.15"/><circle cx="779.2" cy="412.5" r="3" fill="none" stroke="#e81414" stroke-width="1.15"/><path d="M578.5 94.5H811M578.5 94.5V414.3H811" stroke="#f0f000" stroke-width="1.6" fill="none"/><path d="M811 94V414.3" stroke="#f4f4f4" stroke-width="1.4" fill="none"/><rect x="575.0" y="91.0" width="6" height="6" fill="#fff" stroke="#000" stroke-width="1"/><rect x="691.5" y="91.0" width="6" height="6" fill="#fff" stroke="#000" stroke-width="1"/><rect x="808.0" y="91.0" width="6" height="6" fill="#fff" stroke="#000" stroke-width="1"/><rect x="575.0" y="251.0" width="6" height="6" fill="#fff" stroke="#000" stroke-width="1"/><rect x="808.0" y="251.0" width="6" height="6" fill="#fff" stroke="#000" stroke-width="1"/><rect x="575.0" y="411.3" width="6" height="6" fill="#fff" stroke="#000" stroke-width="1"/><rect x="691.5" y="411.3" width="6" height="6" fill="#fff" stroke="#000" stroke-width="1"/><rect x="808.0" y="411.3" width="6" height="6" fill="#fff" stroke="#000" stroke-width="1"/><path d="M722.5 225.5V242L726.3 238.3L729 244.5L731.3 243.5L728.7 237.4L734 237.2Z" fill="#111" stroke="#eee" stroke-width="1.1"/></svg>
<div class="abs" style="left:578px;top:1059px;width:12px;height:19px;background:#fafaf8"></div>
<svg class="abs" style="left:580px;top:1062px" width="9" height="12"><path d="M1 1.5L8 6L1 10.5Z" fill="#4a4a4a"/></svg>
<div class="abs" style="left:592px;top:1060px;width:687px;height:17px;background:#d2d2d0;border-top:1px solid #8e8e8e;border-left:1px solid #8e8e8e;border-bottom:1px solid #f4f4f4;border-right:1px solid #f4f4f4"></div>
<svg class="abs" style="left:593px;top:1061px" width="14" height="15"><rect width="14" height="15" fill="#c9c9c9"/><path d="M13 1L1 7.5L13 14Z" fill="#dedede" stroke="none"/><path d="M1 7.5L13 14" stroke="#8a8a8a" stroke-width="1" fill="none"/><path d="M13 1L1 7.5" stroke="#f4f4f4" stroke-width="1" fill="none"/><path d="M13.5 0.5L13.5 15" stroke="#8a8a8a" stroke-width="1"/></svg>
<svg class="abs" style="left:1264px;top:1061px" width="14" height="15"><rect width="14" height="15" fill="#c9c9c9"/><path d="M1 1L13 7.5L1 14Z" fill="#dedede"/><path d="M13 7.5L1 14" stroke="#8a8a8a" stroke-width="1" fill="none"/><path d="M1 1L13 7.5" stroke="#f4f4f4" stroke-width="1" fill="none"/></svg>
<div class="abs" style="left:925px;top:1061px;width:11px;height:15px;background:#dadada;border-left:1px solid #f4f4f4;border-top:1px solid #f4f4f4;border-right:1px solid #8a8a8a;border-bottom:1px solid #8a8a8a"></div>
<div class="win" style="left:20px;top:0;width:360px;height:236px;background:#e4e3e0;border-radius:11px 11px 0 0;box-shadow:0 2px 6px rgba(0,0,0,0.3)">
<div class="abs" style="left:0px;top:0px;width:360px;height:35px;background:#f8f8f6;border-bottom:1px solid #d6d6d4"></div>
</div>
<div class="t" style="left:42.50px;top:8.75px;font-size:16.71px;line-height:16.71px;color:#9f9f9f;font-weight:bold;font-style:normal;font-family:'Liberation Sans',sans-serif;">Adjust difference-of-gaussian val...</div>
<svg class="abs" style="left:356px;top:11.5px" width="12" height="11.5"><path d="M2 2L10 9.5M10 2L2 9.5" stroke="#3c3c3c" stroke-width="1.3" fill="none"/></svg>
<div class="t" style="left:50.00px;width:300px;text-align:center;top:51.59px;font-size:12.3px;line-height:12.3px;color:#000;font-weight:normal;font-style:normal;font-family:'Liberation Sans',sans-serif;">Sigma = 1.800</div>
<div class="abs" style="left:25px;top:69px;width:350px;height:17px;background:#c4c4c4;border-top:1px solid #8e8e8e;border-left:1px solid #8e8e8e;border-bottom:1px solid #f4f4f4;border-right:1px solid #f4f4f4"></div>
<svg class="abs" style="left:26px;top:70px" width="14" height="15"><rect width="14" height="15" fill="#c9c9c9"/><path d="M13 1L1 7.5L13 14Z" fill="#dedede" stroke="none"/><path d="M1 7.5L13 14" stroke="#8a8a8a" stroke-width="1" fill="none"/><path d="M13 1L1 7.5" stroke="#f4f4f4" stroke-width="1" fill="none"/><path d="M13.5 0.5L13.5 15" stroke="#8a8a8a" stroke-width="1"/></svg>
<svg class="abs" style="left:360px;top:70px" width="14" height="15"><rect width="14" height="15" fill="#c9c9c9"/><path d="M1 1L13 7.5L1 14Z" fill="#dedede"/><path d="M13 7.5L1 14" stroke="#8a8a8a" stroke-width="1" fill="none"/><path d="M1 1L13 7.5" stroke="#f4f4f4" stroke-width="1" fill="none"/></svg>
<div class="abs" style="left:84.5px;top:70px;width:6px;height:15px;background:#dadada;border-left:1px solid #f4f4f4;border-top:1px solid #f4f4f4;border-right:1px solid #8a8a8a;border-bottom:1px solid #8a8a8a"></div>
<div class="t" style="left:50.00px;width:300px;text-align:center;top:91.49px;font-size:12.3px;line-height:12.3px;color:#000;font-weight:normal;font-style:normal;font-family:'Liberation Sans',sans-serif;">Threshold = 0.00800</div>
<div class="abs" style="left:25px;top:109px;width:350px;height:17px;background:#c4c4c4;border-top:1px solid #8e8e8e;border-left:1px solid #8e8e8e;border-bottom:1px solid #f4f4f4;border-right:1px solid #f4f4f4"></div>
<svg class="abs" style="left:26px;top:110px" width="14" height="15"><rect width="14" height="15" fill="#c9c9c9"/><path d="M13 1L1 7.5L13 14Z" fill="#dedede" stroke="none"/><path d="M1 7.5L13 14" stroke="#8a8a8a" stroke-width="1" fill="none"/><path d="M13 1L1 7.5" stroke="#f4f4f4" stroke-width="1" fill="none"/><path d="M13.5 0.5L13.5 15" stroke="#8a8a8a" stroke-width="1"/></svg>
<svg class="abs" style="left:360px;top:110px" width="14" height="15"><rect width="14" height="15" fill="#c9c9c9"/><path d="M1 1L13 7.5L1 14Z" fill="#dedede"/><path d="M13 7.5L1 14" stroke="#8a8a8a" stroke-width="1" fill="none"/><path d="M1 1L13 7.5" stroke="#f4f4f4" stroke-width="1" fill="none"/></svg>
<div class="abs" style="left:93.5px;top:110px;width:6px;height:15px;background:#dadada;border-left:1px solid #f4f4f4;border-top:1px solid #f4f4f4;border-right:1px solid #8a8a8a;border-bottom:1px solid #8a8a8a"></div>
<svg class="abs" style="left:128px;top:133px;overflow:visible" width="11" height="11"><rect x="0.5" y="0.5" width="10" height="10" fill="#cfcfcf" stroke="none"/><path d="M0.5 10.5V0.5H10.5" stroke="#8a8a8a" fill="none"/><path d="M0.5 10.5H10.5V0.5" stroke="#f6f6f6" fill="none"/><path d="M1.5 5.5L4.62 10.120000000000001L10.5 1.1" stroke="#000" stroke-width="2.2" fill="none"/></svg>
<div class="t" style="left:141.20px;top:132.29px;font-size:12.3px;line-height:12.3px;color:#000;font-weight:normal;font-style:normal;font-family:'Liberation Sans',sans-serif;">Find DoG maxima (red)</div>
<svg class="abs" style="left:122.5px;top:158.5px;overflow:visible" width="11" height="11"><rect x="0.5" y="0.5" width="10" height="10" fill="#cfcfcf" stroke="none"/><path d="M0.5 10.5V0.5H10.5" stroke="#8a8a8a" fill="none"/><path d="M0.5 10.5H10.5V0.5" stroke="#f6f6f6" fill="none"/></svg>
<div class="t" style="left:135.20px;top:157.09px;font-size:12.3px;line-height:12.3px;color:#000;font-weight:normal;font-style:normal;font-family:'Liberation Sans',sans-serif;">Find DoG minima (green)</div>
<div class="abs" style="left:143px;top:179px;width:115px;height:20px;background:transparent;border-top:1px solid #f8f8f8;border-left:1px solid #f8f8f8;border-bottom:2px solid #8c8c8c;border-right:1px solid #8c8c8c"></div>
<div class="t" style="left:123.00px;width:155px;text-align:center;top:183.19px;font-size:12.3px;line-height:12.3px;color:#000;font-weight:normal;font-style:normal;font-family:'Liberation Sans',sans-serif;">Done</div>
<div class="abs" style="left:143px;top:204px;width:115px;height:20px;background:transparent;border-top:1px solid #f8f8f8;border-left:1px solid #f8f8f8;border-bottom:2px solid #8c8c8c;border-right:1px solid #8c8c8c"></div>
<div class="t" style="left:123.00px;width:155px;text-align:center;top:208.19px;font-size:12.3px;line-height:12.3px;color:#000;font-weight:normal;font-style:normal;font-family:'Liberation Sans',sans-serif;">Cancel</div>
<div class="win" style="left:1311px;top:36px;width:609px;height:122px;background:#eeeeec;border-radius:11px 0 0 0;box-shadow:0 2px 6px rgba(0,0,0,0.3)">
<div class="abs" style="left:0px;top:0px;width:609px;height:36px;background:#f7f7f5;border-bottom:1px solid #d9d9d7"></div>
</div>
<div class="t" style="left:1541.50px;top:47.26px;font-size:16.0px;line-height:16.0px;color:#a0a0a0;font-weight:bold;font-style:normal;font-family:'Liberation Sans',sans-serif;">(Fiji Is Just) ImageJ</div>
<svg class="abs" style="left:1895.5px;top:48px" width="12.5" height="12"><path d="M2 2L10.5 10M10.5 2L2 10" stroke="#3c3c3c" stroke-width="1.3" fill="none"/></svg>
<div class="t" style="left:1321.30px;top:80.30px;font-size:12.4px;line-height:12.4px;color:#111;font-weight:normal;font-style:normal;font-family:'Liberation Sans',sans-serif;">File</div>
<div class="t" style="left:1362.50px;top:80.30px;font-size:12.4px;line-height:12.4px;color:#111;font-weight:normal;font-style:normal;font-family:'Liberation Sans',sans-serif;">Edit</div>
<div class="t" style="left:1404.50px;top:80.30px;font-size:12.4px;line-height:12.4px;color:#111;font-weight:normal;font-style:normal;font-family:'Liberation Sans',sans-serif;">Image</div>
<div class="t" style="left:1463.50px;top:80.30px;font-size:12.4px;line-height:12.4px;color:#111;font-weight:normal;font-style:normal;font-family:'Liberation Sans',sans-serif;">Process</div>
<div class="t" style="left:1528.90px;top:80.30px;font-size:12.4px;line-height:12.4px;color:#111;font-weight:normal;font-style:normal;font-family:'Liberation Sans',sans-serif;">Analyze</div>
<div class="t" style="left:1594.50px;top:80.30px;font-size:12.4px;line-height:12.4px;color:#111;font-weight:normal;font-style:normal;font-family:'Liberation Sans',sans-serif;">Plugins</div>
<div class="t" style="left:1656.80px;top:80.30px;font-size:12.4px;line-height:12.4px;color:#111;font-weight:normal;font-style:normal;font-family:'Liberation Sans',sans-serif;">Window</div>
<div class="t" style="left:1881.20px;top:80.30px;font-size:12.4px;line-height:12.4px;color:#111;font-weight:normal;font-style:normal;font-family:'Liberation Sans',sans-serif;">Help</div>
<div class="abs" style="left:1312.4px;top:101px;width:28.5px;height:29px;background:#c8c8c6;border-top:1px solid #9a9a9a;border-left:1px solid #9a9a9a;border-right:1px solid #a6a6a4;border-bottom:1px solid #a6a6a4"></div>
<div class="abs" style="left:1342.5px;top:101px;width:28.5px;height:29px;background:#e9e9e7;border-top:1px solid #fbfbfb;border-left:1px solid #fbfbfb;border-right:1px solid #a6a6a4;border-bottom:1px solid #a6a6a4"></div>
<div class="abs" style="left:1372.5px;top:101px;width:28.5px;height:29px;background:#e9e9e7;border-top:1px solid #fbfbfb;border-left:1px solid #fbfbfb;border-right:1px solid #a6a6a4;border-bottom:1px solid #a6a6a4"></div>
<div class="abs" style="left:1402.6px;top:101px;width:28.5px;height:29px;background:#e9e9e7;border-top:1px solid #fbfbfb;border-left:1px solid #fbfbfb;border-right:1px solid #a6a6a4;border-bottom:1px solid #a6a6a4"></div>
<div class="abs" style="left:1432.7px;top:101px;width:28.5px;height:29px;background:#e9e9e7;border-top:1px solid #fbfbfb;border-left:1px solid #fbfbfb;border-right:1px solid #a6a6a4;border-bottom:1px solid #a6a6a4"></div>
<div class="abs" style="left:1462.8px;top:101px;width:28.5px;height:29px;background:#e9e9e7;border-top:1px solid #fbfbfb;border-left:1px solid #fbfbfb;border-right:1px solid #a6a6a4;border-bottom:1px solid #a6a6a4"></div>
<div class="abs" style="left:1492.8px;top:101px;width:28.5px;height:29px;background:#e9e9e7;border-top:1px solid #fbfbfb;border-left:1px solid #fbfbfb;border-right:1px solid #a6a6a4;border-bottom:1px solid #a6a6a4"></div>
<div class="abs" style="left:1522.9px;top:101px;width:28.5px;height:29px;background:#e9e9e7;border-top:1px solid #fbfbfb;border-left:1px solid #fbfbfb;border-right:1px solid #a6a6a4;border-bottom:1px solid #a6a6a4"></div>
<div class="abs" style="left:1553.0px;top:101px;width:28.5px;height:29px;background:#e9e9e7;border-top:1px solid #fbfbfb;border-left:1px solid #fbfbfb;border-right:1px solid #a6a6a4;border-bottom:1px solid #a6a6a4"></div>
<div class="abs" style="left:1583.0px;top:101px;width:28.5px;height:29px;background:#e9e9e7;border-top:1px solid #fbfbfb;border-left:1px solid #fbfbfb;border-right:1px solid #a6a6a4;border-bottom:1px solid #a6a6a4"></div>
<div class="abs" style="left:1613.1px;top:101px;width:28.5px;height:29px;background:#e9e9e7;border-top:1px solid #fbfbfb;border-left:1px solid #fbfbfb;border-right:1px solid #a6a6a4;border-bottom:1px solid #a6a6a4"></div>
<div class="abs" style="left:1643.2px;top:101px;width:28.5px;height:29px;background:#e9e9e7;border-top:1px solid #fbfbfb;border-left:1px solid #fbfbfb;border-right:1px solid #a6a6a4;border-bottom:1px solid #a6a6a4"></div>
<div class="abs" style="left:1682.2px;top:101px;width:28.5px;height:29px;background:#e9e9e7;border-top:1px solid #fbfbfb;border-left:1px solid #fbfbfb;border-right:1px solid #a6a6a4;border-bottom:1px solid #a6a6a4"></div>
<div class="abs" style="left:1712.2px;top:101px;width:28.5px;height:29px;background:#e9e9e7;border-top:1px solid #fbfbfb;border-left:1px solid #fbfbfb;border-right:1px solid #a6a6a4;border-bottom:1px solid #a6a6a4"></div>
<div class="abs" style="left:1742.3px;top:101px;width:28.5px;height:29px;background:#e9e9e7;border-top:1px solid #fbfbfb;border-left:1px solid #fbfbfb;border-right:1px solid #a6a6a4;border-bottom:1px solid #a6a6a4"></div>
<div class="abs" style="left:1772.4px;top:101px;width:28.5px;height:29px;background:#e9e9e7;border-top:1px solid #fbfbfb;border-left:1px solid #fbfbfb;border-right:1px solid #a6a6a4;border-bottom:1px solid #a6a6a4"></div>
<div class="abs" style="left:1802.4px;top:101px;width:28.5px;height:29px;background:#e9e9e7;border-top:1px solid #fbfbfb;border-left:1px solid #fbfbfb;border-right:1px solid #a6a6a4;border-bottom:1px solid #a6a6a4"></div>
<div class="abs" style="left:1832.5px;top:101px;width:28.5px;height:29px;background:#e9e9e7;border-top:1px solid #fbfbfb;border-left:1px solid #fbfbfb;border-right:1px solid #a6a6a4;border-bottom:1px solid #a6a6a4"></div>
<div class="abs" style="left:1862.5px;top:101px;width:28.5px;height:29px;background:#e9e9e7;border-top:1px solid #fbfbfb;border-left:1px solid #fbfbfb;border-right:1px solid #a6a6a4;border-bottom:1px solid #a6a6a4"></div>
<div class="abs" style="left:1892.5px;top:101px;width:28.5px;height:29px;background:#e9e9e7;border-top:1px solid #fbfbfb;border-left:1px solid #fbfbfb;border-right:1px solid #a6a6a4;border-bottom:1px solid #a6a6a4"></div>
<svg class="abs" style="left:1311px;top:100px" width="609" height="32" viewBox="1311 100 609 32"><rect x="1318.5" y="109.5" width="17" height="13" stroke="#1a1a1a" stroke-width="1.3" fill="none" stroke-width="1.5"/><ellipse cx="1356.5" cy="115.5" rx="9" ry="7" stroke="#1a1a1a" stroke-width="1.3" fill="none"/><path d="M1380.5 110.5H1395.5L1392 116L1394.5 121.5H1380.5Z" stroke="#1a1a1a" stroke-width="1.3" fill="none"/><path d="M1410 111C1413 107 1418 112 1421 110C1426 108 1428 114 1425 119C1421 125 1411 124 1409.5 118C1408.5 115 1408.5 113 1410 111Z" stroke="#1a1a1a" stroke-width="1.3" fill="none"/><path d="M1438 124L1456 107" stroke="#1a1a1a" stroke-width="1.3" fill="none"/><circle cx="1438" cy="124" r="1.2" fill="#111"/><circle cx="1456" cy="107" r="1.2" fill="#111"/><path d="M1482 108L1469 123H1486M1476 115.5Q1480 118 1480 123" stroke="#1a1a1a" stroke-width="1.3" fill="none"/><circle cx="1482" cy="108" r="1.5" fill="#111"/><circle cx="1486" cy="123" r="1.5" fill="#111"/><path d="M1504 106H1510M1507 103V109" stroke="#1a1a1a" stroke-width="1"/><circle cx="1507" cy="106" r="1" fill="#ff0"/><path d="M1495 110H1501M1498 107V113" stroke="#1a1a1a" stroke-width="1"/><circle cx="1498" cy="110" r="1" fill="#ff0"/><path d="M1511 112H1517M1514 109V115" stroke="#1a1a1a" stroke-width="1"/><circle cx="1514" cy="112" r="1" fill="#ff0"/><path d="M1497 119H1503M1500 116V122" stroke="#1a1a1a" stroke-width="1"/><circle cx="1500" cy="119" r="1" fill="#ff0"/><path d="M1505 118H1511M1508 115V121" stroke="#1a1a1a" stroke-width="1"/><circle cx="1508" cy="118" r="1" fill="#ff0"/><path d="M1530 110L1546 124" stroke="#1a1a1a" stroke-width="1.3" fill="none"/><path d="M1528 108.5L1531.5 112M1531.5 108.5L1528 112" stroke="#cc0" stroke-width="1.3"/><path d="M1558 124L1567 106L1576 124M1556.5 124H1560M1574 124H1578.5M1561.5 117H1572.5" stroke="#1a1a1a" stroke-width="1.3" fill="none"/><circle cx="1598" cy="113.5" r="6.8" stroke="#1a1a1a" stroke-width="1.3" fill="none"/><path d="M1593 118.5L1586 125" stroke="#1a1a1a" stroke-width="1.3" fill="none" stroke-width="1.6"/><path d="M1621 124C1617 120 1616 116 1618 115C1620 114 1621 117 1622 117V108C1622 106 1624.5 106 1624.5 108V115M1624.5 107C1624.5 104.5 1627.5 104.5 1627.5 107V115M1627.5 107.5C1627.5 105 1630.5 105 1630.5 107.5V115M1630.5 109C1630.5 107 1633 107 1633 109V117C1633 121 1636 122 1636 125" stroke="#1a1a1a" stroke-width="1.3" fill="none" stroke-width="1.1"/><rect x="1649" y="109" width="16" height="16" fill="#fff"/><path d="M1652 118.5L1661 109.5" stroke="#1a1a1a" stroke-width="1.6"/><circle cx="1663" cy="107.5" r="2.6" fill="#111"/><text x="1686" y="120" font-family="Liberation Sans" font-size="12.5" fill="#1f4f9a" textLength="20" lengthAdjust="spacingAndGlyphs">Dev</text><text x="1716" y="120" font-family="Liberation Sans" font-size="12.5" fill="#1f4f9a" textLength="20" lengthAdjust="spacingAndGlyphs">Stk</text><text x="1746" y="120" font-family="Liberation Sans" font-size="12.5" fill="#1f4f9a" textLength="18" lengthAdjust="spacingAndGlyphs">LUT</text><path d="M1782 124L1783.5 117L1790 108C1791 106.5 1793 107.5 1792.5 109L1787 118.5Z" fill="none" stroke="#1c4a8c" stroke-width="1.5"/><path d="M1782 124L1784 119" stroke="#1c4a8c" stroke-width="2"/><path d="M1811 124C1812 120 1815 119 1816 117L1822 106.5M1820 106L1814 117M1811 124L1815 121" stroke="#1c4a8c" stroke-width="1.6" fill="none"/><path d="M1841 115L1846.5 110L1851.5 116L1846 121.5Z" fill="none" stroke="#1c4a8c" stroke-width="1.5"/><path d="M1846 110V105M1851.5 116C1853 119 1853 121 1852 122" stroke="#1c4a8c" stroke-width="1.4" fill="none"/><path d="M1898.5 111.5L1907 115.5L1898.5 119.5M1903.5 111.5L1912 115.5L1903.5 119.5" stroke="#c0141c" stroke-width="1.6" fill="none"/></svg>
<svg class="abs" style="left:1335px;top:125px" width="7" height="5"><path d="M0 0H6L3 4Z" fill="#a0141c"/></svg>
<svg class="abs" style="left:1366px;top:125px" width="7" height="5"><path d="M0 0H6L3 4Z" fill="#a0141c"/></svg>
<svg class="abs" style="left:1456px;top:125px" width="7" height="5"><path d="M0 0H6L3 4Z" fill="#a0141c"/></svg>
<svg class="abs" style="left:1512px;top:125px" width="7" height="5"><path d="M0 0H6L3 4Z" fill="#a0141c"/></svg>
<svg class="abs" style="left:1603px;top:125px" width="7" height="5"><path d="M0 0H6L3 4Z" fill="#a0141c"/></svg>
<svg class="abs" style="left:1662px;top:125px" width="7" height="5"><path d="M0 0H6L3 4Z" fill="#a0141c"/></svg>
<svg class="abs" style="left:1700px;top:125px" width="7" height="5"><path d="M0 0H6L3 4Z" fill="#a0141c"/></svg>
<svg class="abs" style="left:1730px;top:125px" width="7" height="5"><path d="M0 0H6L3 4Z" fill="#a0141c"/></svg>
<svg class="abs" style="left:1760px;top:125px" width="7" height="5"><path d="M0 0H6L3 4Z" fill="#a0141c"/></svg>
<div class="t" style="left:1314.00px;top:137.86px;font-size:12.45px;line-height:12.45px;color:#2c3c50;font-weight:normal;font-style:normal;font-family:'Liberation Sans',sans-serif;">x=145, y=132, z=29, value=235.7187</div>
<div class="abs" style="left:1757px;top:132px;width:143px;height:26px;background:#fbfbfa"></div>
<div class="t" style="left:1763.50px;top:138.09px;font-size:12.42px;line-height:12.42px;color:#a9b1ba;font-weight:normal;font-style:normal;font-family:'Liberation Sans',sans-serif;">Click here to search</div>
<div class="abs" style="left:1901px;top:135px;width:19px;height:20px;background:#fafafa;border:1px solid #9aaabb"></div>
<div class="win" style="left:1316px;top:192px;width:149px;height:344px;background:#eeeeec;border-radius:11px 11px 0 0;box-shadow:0 2px 6px rgba(0,0,0,0.3)">
<div class="abs" style="left:0px;top:0px;width:149px;height:36px;background:#f7f7f5;border-bottom:1px solid #d9d9d7"></div>
</div>
<div class="t" style="left:1363.60px;top:202.94px;font-size:14.95px;line-height:14.95px;color:#a0a0a0;font-weight:bold;font-style:normal;font-family:'Liberation Sans',sans-serif;">B&amp;C</div>
<svg class="abs" style="left:1441px;top:204.5px" width="12" height="11.5"><path d="M2 2L10 9.5M10 2L2 9.5" stroke="#3c3c3c" stroke-width="1.3" fill="none"/></svg>
<svg class="abs" style="left:1326px;top:239px" width="129" height="65"><rect x="1" y="1" width="127" height="63" fill="#fff" stroke="#000" stroke-width="1.6"/><path d="M2.5 62V22H3.6V52L6 58L10 62Z" fill="#ff00ff"/><path d="M27 62V59Q33 58 38 58L41 55L44 58L48 62Z" fill="#ff00ff"/><path d="M4 62.5L127 1.5" stroke="#000" stroke-width="1.1"/></svg>
<div class="t" style="left:1328.60px;top:308.32px;font-size:11.2px;line-height:11.2px;color:#111;font-weight:normal;font-style:normal;font-family:'Liberation Sans',sans-serif;">162</div>
<div class="t" style="left:1393.00px;width:60px;text-align:right;top:308.32px;font-size:11.2px;line-height:11.2px;color:#111;font-weight:normal;font-style:normal;font-family:'Liberation Sans',sans-serif;">3334</div>
<div class="abs" style="left:1326px;top:326px;width:129px;height:17px;background:#c4c4c4;border-top:1px solid #8e8e8e;border-left:1px solid #8e8e8e;border-bottom:1px solid #f4f4f4;border-right:1px solid #f4f4f4"></div>
<svg class="abs" style="left:1327px;top:327px" width="14" height="15"><rect width="14" height="15" fill="#c9c9c9"/><path d="M13 1L1 7.5L13 14Z" fill="#dedede" stroke="none"/><path d="M1 7.5L13 14" stroke="#8a8a8a" stroke-width="1" fill="none"/><path d="M13 1L1 7.5" stroke="#f4f4f4" stroke-width="1" fill="none"/><path d="M13.5 0.5L13.5 15" stroke="#8a8a8a" stroke-width="1"/></svg>
<svg class="abs" style="left:1440px;top:327px" width="14" height="15"><rect width="14" height="15" fill="#c9c9c9"/><path d="M1 1L13 7.5L1 14Z" fill="#dedede"/><path d="M13 7.5L1 14" stroke="#8a8a8a" stroke-width="1" fill="none"/><path d="M1 1L13 7.5" stroke="#f4f4f4" stroke-width="1" fill="none"/></svg>
<div class="abs" style="left:1341.5px;top:327px;width:6px;height:15px;background:#dadada;border-left:1px solid #f4f4f4;border-top:1px solid #f4f4f4;border-right:1px solid #8a8a8a;border-bottom:1px solid #8a8a8a"></div>
<div class="t" style="left:1333.00px;width:120px;text-align:center;top:345.90px;font-size:12.4px;line-height:12.4px;color:#111;font-weight:normal;font-style:normal;font-family:'Liberation Sans',sans-serif;">Minimum</div>
<div class="abs" style="left:1326px;top:362px;width:129px;height:17px;background:#c4c4c4;border-top:1px solid #8e8e8e;border-left:1px solid #8e8e8e;border-bottom:1px solid #f4f4f4;border-right:1px solid #f4f4f4"></div>
<svg class="abs" style="left:1327px;top:363px" width="14" height="15"><rect width="14" height="15" fill="#c9c9c9"/><path d="M13 1L1 7.5L13 14Z" fill="#dedede" stroke="none"/><path d="M1 7.5L13 14" stroke="#8a8a8a" stroke-width="1" fill="none"/><path d="M13 1L1 7.5" stroke="#f4f4f4" stroke-width="1" fill="none"/><path d="M13.5 0.5L13.5 15" stroke="#8a8a8a" stroke-width="1"/></svg>
<svg class="abs" style="left:1440px;top:363px" width="14" height="15"><rect width="14" height="15" fill="#c9c9c9"/><path d="M1 1L13 7.5L1 14Z" fill="#dedede"/><path d="M13 7.5L1 14" stroke="#8a8a8a" stroke-width="1" fill="none"/><path d="M1 1L13 7.5" stroke="#f4f4f4" stroke-width="1" fill="none"/></svg>
<div class="abs" style="left:1433.5px;top:363px;width:6px;height:15px;background:#dadada;border-left:1px solid #f4f4f4;border-top:1px solid #f4f4f4;border-right:1px solid #8a8a8a;border-bottom:1px solid #8a8a8a"></div>
<div class="t" style="left:1333.00px;width:120px;text-align:center;top:381.80px;font-size:12.4px;line-height:12.4px;color:#111;font-weight:normal;font-style:normal;font-family:'Liberation Sans',sans-serif;">Maximum</div>
<div class="abs" style="left:1326px;top:398px;width:129px;height:17px;background:#c4c4c4;border-top:1px solid #8e8e8e;border-left:1px solid #8e8e8e;border-bottom:1px solid #f4f4f4;border-right:1px solid #f4f4f4"></div>
<svg class="abs" style="left:1327px;top:399px" width="14" height="15"><rect width="14" height="15" fill="#c9c9c9"/><path d="M13 1L1 7.5L13 14Z" fill="#dedede" stroke="none"/><path d="M1 7.5L13 14" stroke="#8a8a8a" stroke-width="1" fill="none"/><path d="M13 1L1 7.5" stroke="#f4f4f4" stroke-width="1" fill="none"/><path d="M13.5 0.5L13.5 15" stroke="#8a8a8a" stroke-width="1"/></svg>
<svg class="abs" style="left:1440px;top:399px" width="14" height="15"><rect width="14" height="15" fill="#c9c9c9"/><path d="M1 1L13 7.5L1 14Z" fill="#dedede"/><path d="M13 7.5L1 14" stroke="#8a8a8a" stroke-width="1" fill="none"/><path d="M1 1L13 7.5" stroke="#f4f4f4" stroke-width="1" fill="none"/></svg>
<div class="abs" style="left:1388px;top:399px;width:6px;height:15px;background:#dadada;border-left:1px solid #f4f4f4;border-top:1px solid #f4f4f4;border-right:1px solid #8a8a8a;border-bottom:1px solid #8a8a8a"></div>
<div class="t" style="left:1333.00px;width:120px;text-align:center;top:417.50px;font-size:12.4px;line-height:12.4px;color:#111;font-weight:normal;font-style:normal;font-family:'Liberation Sans',sans-serif;">Brightness</div>
<div class="abs" style="left:1326px;top:434px;width:129px;height:17px;background:#c4c4c4;border-top:1px solid #8e8e8e;border-left:1px solid #8e8e8e;border-bottom:1px solid #f4f4f4;border-right:1px solid #f4f4f4"></div>
<svg class="abs" style="left:1327px;top:435px" width="14" height="15"><rect width="14" height="15" fill="#c9c9c9"/><path d="M13 1L1 7.5L13 14Z" fill="#dedede" stroke="none"/><path d="M1 7.5L13 14" stroke="#8a8a8a" stroke-width="1" fill="none"/><path d="M13 1L1 7.5" stroke="#f4f4f4" stroke-width="1" fill="none"/><path d="M13.5 0.5L13.5 15" stroke="#8a8a8a" stroke-width="1"/></svg>
<svg class="abs" style="left:1440px;top:435px" width="14" height="15"><rect width="14" height="15" fill="#c9c9c9"/><path d="M1 1L13 7.5L1 14Z" fill="#dedede"/><path d="M13 7.5L1 14" stroke="#8a8a8a" stroke-width="1" fill="none"/><path d="M1 1L13 7.5" stroke="#f4f4f4" stroke-width="1" fill="none"/></svg>
<div class="abs" style="left:1388px;top:435px;width:6px;height:15px;background:#dadada;border-left:1px solid #f4f4f4;border-top:1px solid #f4f4f4;border-right:1px solid #8a8a8a;border-bottom:1px solid #8a8a8a"></div>
<div class="t" style="left:1333.00px;width:120px;text-align:center;top:453.10px;font-size:12.4px;line-height:12.4px;color:#111;font-weight:normal;font-style:normal;font-family:'Liberation Sans',sans-serif;">Contrast</div>
<div class="abs" style="left:1324px;top:479px;width:64px;height:20px;background:#eeeeec;border-top:1px solid #f8f8f8;border-left:1px solid #f8f8f8;border-bottom:2px solid #8c8c8c;border-right:1px solid #8c8c8c"></div>
<div class="t" style="left:1304.00px;width:104px;text-align:center;top:483.00px;font-size:12.4px;line-height:12.4px;color:#000;font-weight:normal;font-style:normal;font-family:'Liberation Sans',sans-serif;">Auto</div>
<div class="abs" style="left:1393px;top:479px;width:64px;height:20px;background:#eeeeec;border-top:1px solid #f8f8f8;border-left:1px solid #f8f8f8;border-bottom:2px solid #8c8c8c;border-right:1px solid #8c8c8c"></div>
<div class="t" style="left:1373.00px;width:104px;text-align:center;top:483.00px;font-size:12.4px;line-height:12.4px;color:#000;font-weight:normal;font-style:normal;font-family:'Liberation Sans',sans-serif;">Reset</div>
<div class="abs" style="left:1324px;top:504px;width:64px;height:20px;background:#eeeeec;border-top:1px solid #f8f8f8;border-left:1px solid #f8f8f8;border-bottom:2px solid #8c8c8c;border-right:1px solid #8c8c8c"></div>
<div class="t" style="left:1304.00px;width:104px;text-align:center;top:508.00px;font-size:12.4px;line-height:12.4px;color:#000;font-weight:normal;font-style:normal;font-family:'Liberation Sans',sans-serif;">Set</div>
<div class="abs" style="left:1393px;top:504px;width:64px;height:20px;background:#eeeeec;border-top:1px solid #f8f8f8;border-left:1px solid #f8f8f8;border-bottom:2px solid #8c8c8c;border-right:1px solid #8c8c8c"></div>
<div class="t" style="left:1373.00px;width:104px;text-align:center;top:508.00px;font-size:12.4px;line-height:12.4px;color:#000;font-weight:normal;font-style:normal;font-family:'Liberation Sans',sans-serif;">Apply</div>
<div class="win" style="left:1486px;top:192px;width:186px;height:175px;background:#eeeeec;border-radius:11px 11px 0 0;box-shadow:0 2px 6px rgba(0,0,0,0.3)">
<div class="abs" style="left:0px;top:0px;width:186px;height:36px;background:#f7f7f5;border-bottom:1px solid #d9d9d7"></div>
</div>
<div class="t" style="left:1540.50px;top:201.42px;font-size:16.4px;line-height:16.4px;color:#a0a0a0;font-weight:bold;font-style:normal;font-family:'Liberation Sans',sans-serif;">Channels</div>
<svg class="abs" style="left:1648.5px;top:204.5px" width="11.5" height="11.5"><path d="M2 2L9.5 9.5M9.5 2L2 9.5" stroke="#3c3c3c" stroke-width="1.3" fill="none"/></svg>
<div class="abs" style="left:1520px;top:241px;width:120px;height:21px;background:#efefed;border-top:1px solid #f8f8f8;border-left:1px solid #f8f8f8;border-right:1px solid #8c8c8c;border-bottom:1px solid #8c8c8c"></div>
<div class="t" style="left:1523.30px;top:244.00px;font-size:12.4px;line-height:12.4px;color:#111;font-weight:normal;font-style:normal;font-family:'Liberation Sans',sans-serif;">Composite</div>
<div class="abs" style="left:1623px;top:249px;width:11px;height:4px;border-right:1px solid #8c8c8c;border-bottom:1px solid #8c8c8c;border-top:1px solid #f8f8f8;border-left:1px solid #f8f8f8"></div>
<svg class="abs" style="left:1515px;top:279.5px;overflow:visible" width="11" height="11"><rect x="0.5" y="0.5" width="10" height="10" fill="#cfcfcf" stroke="none"/><path d="M0.5 10.5V0.5H10.5" stroke="#8a8a8a" fill="none"/><path d="M0.5 10.5H10.5V0.5" stroke="#f6f6f6" fill="none"/><path d="M1.5 5.5L4.62 10.120000000000001L10.5 1.1" stroke="#000" stroke-width="2.2" fill="none"/></svg>
<div class="t" style="left:1561.70px;top:278.95px;font-size:11.76px;line-height:11.76px;color:#111;font-weight:normal;font-style:normal;font-family:'Liberation Sans',sans-serif;">Channel 1</div>
<svg class="abs" style="left:1515px;top:304px;overflow:visible" width="11" height="11"><rect x="0.5" y="0.5" width="10" height="10" fill="#cfcfcf" stroke="none"/><path d="M0.5 10.5V0.5H10.5" stroke="#8a8a8a" fill="none"/><path d="M0.5 10.5H10.5V0.5" stroke="#f6f6f6" fill="none"/><path d="M1.5 5.5L4.62 10.120000000000001L10.5 1.1" stroke="#000" stroke-width="2.2" fill="none"/></svg>
<div class="t" style="left:1561.70px;top:303.95px;font-size:11.76px;line-height:11.76px;color:#111;font-weight:normal;font-style:normal;font-family:'Liberation Sans',sans-serif;">Channel 2</div>
<div class="abs" style="left:1533px;top:335px;width:35px;height:20px;background:#eeeeec;border-top:1px solid #f8f8f8;border-left:1px solid #f8f8f8;border-bottom:2px solid #8c8c8c;border-right:1px solid #8c8c8c"></div>
<div class="t" style="left:1513.00px;width:75px;text-align:center;top:338.50px;font-size:12.4px;line-height:12.4px;color:#000;font-weight:normal;font-style:normal;font-family:'Liberation Sans',sans-serif;">Help</div>
<div class="abs" style="left:1578px;top:335px;width:48px;height:20px;background:#eeeeec;border-top:1px solid #f8f8f8;border-left:1px solid #f8f8f8;border-bottom:2px solid #8c8c8c;border-right:1px solid #8c8c8c"></div>
<div class="t" style="left:1558.00px;width:88px;text-align:center;top:338.50px;font-size:12.4px;line-height:12.4px;color:#000;font-weight:normal;font-style:normal;font-family:'Liberation Sans',sans-serif;">More &#187;</div>
</body></html>
